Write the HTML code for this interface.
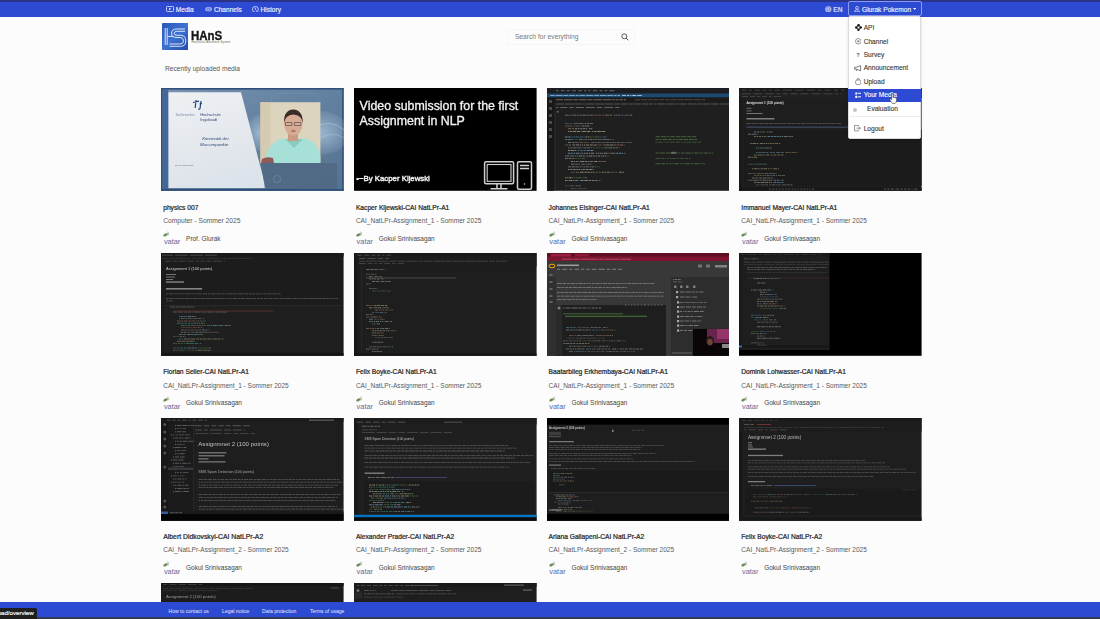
<!DOCTYPE html><html><head><meta charset="utf-8"><title>HAnS</title><style>
*{box-sizing:border-box;margin:0;padding:0}
html,body{width:1100px;height:619px;overflow:hidden;background:#fcfcfd;font-family:"Liberation Sans",sans-serif}
.a{position:absolute}
svg{display:block}
.ths{filter:blur(0.3px)}
#topline{left:0;top:0;width:1100px;height:2px;background:#2b3486}
#nav{left:0;top:2px;width:1100px;height:14.5px;background:#2c4ad2}
.navt{color:#eef1ff;font-size:6.6px;line-height:1;white-space:nowrap;-webkit-text-stroke:0.15px #eef1ff}
.card{position:absolute;width:183px;height:160px}
.th{position:absolute;left:0;top:0;width:182.6px;height:102.8px;overflow:hidden}
.t1{position:absolute;left:1.9px;top:116.4px;font-size:6.68px;line-height:1;color:#262626;-webkit-text-stroke:0.22px #262626;white-space:nowrap}
.t2{position:absolute;left:1.9px;top:129.5px;font-size:6.55px;line-height:1;color:#5a5a5a;white-space:nowrap}
.t3{position:absolute;left:24.8px;top:147.3px;font-size:6.45px;line-height:1;color:#444;white-space:nowrap}
.av{position:absolute;left:2px;top:142.7px;width:7px;height:6px}
.avt{position:absolute;left:2.6px;top:149.8px;font-size:7.4px;line-height:1;color:#5d6c9e;white-space:nowrap}
#foot{left:0;top:601.5px;width:1100px;height:15.5px;background:#2c4ad2}
#footline{left:0;top:617px;width:1100px;height:2px;background:#343a55}
.ft{color:#e8ecff;font-size:5.05px;line-height:1;white-space:nowrap;top:608.5px}
#status{left:0;top:607.8px;width:36.5px;height:11.2px;background:#1f1f1f;border-top-right-radius:1.5px}
#menu{left:847.8px;top:16px;width:73.6px;height:122.8px;background:#fff;border:0.6px solid #dcdcdc;border-radius:2px;box-shadow:0 1px 3px rgba(0,0,0,0.12)}
.mi{position:absolute;font-size:6.6px;line-height:1;color:#333;white-space:nowrap;-webkit-text-stroke:0.12px currentColor}
</style></head><body>
<div id="topline" class="a"></div><div id="nav" class="a"></div>
<svg class="a" style="left:166.3px;top:6px" width="8" height="6" viewBox="0 0 8 6"><rect x="0.45" y="0.45" width="7.1" height="5.1" rx="1" fill="none" stroke="#eef1ff" stroke-width="0.8"/><path d="M3 1.7 L5.3 3 L3 4.3 Z" fill="#eef1ff"/></svg>
<div class="a navt" style="left:175.8px;top:6.6px">Media</div>
<svg class="a" style="left:204.8px;top:5.9px" width="7.2" height="6.4" viewBox="0 0 7.2 6.4"><g fill="none" stroke="#eef1ff" stroke-width="0.7"><path d="M1.5 1.2 A3.1 3.1 0 0 0 1.5 5.2"/><path d="M5.7 1.2 A3.1 3.1 0 0 1 5.7 5.2"/><ellipse cx="3.6" cy="3.2" rx="1.7" ry="1.9"/></g><circle cx="3.6" cy="3.2" r="0.6" fill="#eef1ff"/></svg>
<div class="a navt" style="left:213.9px;top:6.6px">Channels</div>
<svg class="a" style="left:251.8px;top:5.6px" width="6.8" height="6.8" viewBox="0 0 6.8 6.8"><circle cx="3.4" cy="3.4" r="2.95" fill="none" stroke="#eef1ff" stroke-width="0.75"/><path d="M3.4 1.6 L3.4 3.6 L4.7 4.6" fill="none" stroke="#eef1ff" stroke-width="0.75"/></svg>
<div class="a navt" style="left:260.5px;top:6.6px">History</div>
<svg class="a" style="left:825px;top:5.8px" width="6.6" height="6.6" viewBox="0 0 6.6 6.6"><circle cx="3.3" cy="3.3" r="3.1" fill="#c9d2f5"/><g fill="none" stroke="#4a64d8" stroke-width="0.4"><ellipse cx="3.3" cy="3.3" rx="1.3" ry="3"/><path d="M0.3 3.3 H6.3 M0.8 1.8 H5.8 M0.8 4.8 H5.8"/></g></svg>
<div class="a navt" style="left:833.3px;top:6.6px">EN</div>
<div class="a" style="left:847.5px;top:1.2px;width:74px;height:14.9px;border:0.8px solid #8a9cf0;border-radius:2px"></div>
<svg class="a" style="left:853.5px;top:5.8px" width="6" height="6.2" viewBox="0 0 6 6.2"><circle cx="3" cy="1.8" r="1.4" fill="none" stroke="#eef1ff" stroke-width="0.7"/><path d="M0.5 5.9 Q0.8 3.7 3 3.7 Q5.2 3.7 5.5 5.9 Z" fill="none" stroke="#eef1ff" stroke-width="0.7"/></svg>
<div class="a navt" style="left:862px;top:6.6px">Glurak Pokemon</div>
<svg class="a" style="left:913.2px;top:8.4px" width="3.2" height="2" viewBox="0 0 3.2 2"><path d="M0 0 L3.2 0 L1.6 2 Z" fill="#eef1ff"/></svg>
<svg class="a" style="left:161.6px;top:23.3px" width="26.8" height="27" viewBox="0 0 26.8 27"><defs><linearGradient id="lg" x1="0" y1="0" x2="1" y2="1"><stop offset="0" stop-color="#2a56b8"/><stop offset="0.5" stop-color="#3e72d0"/><stop offset="1" stop-color="#2548a8"/></linearGradient></defs><rect x="0" y="0" width="26.8" height="27" rx="1" fill="url(#lg)"/><g fill="none" stroke="#e8f2ff" stroke-width="0.9"><path d="M3.2 5 V22 M5.2 5 V22"/><path d="M5.2 13.5 H11"/><path d="M23 6 H15 Q9.5 6 9.5 10.3 Q9.5 14.5 15 14.5 H18 Q21.5 14.5 21.5 18 Q21.5 21 18 21 H7.5"/><path d="M23 8.3 H15.5 Q12 8.3 12 10.3 Q12 12.3 15.5 12.3 H18.5 Q23.8 12.3 23.8 18 Q23.8 23.3 18.5 23.3 H7.5"/></g></svg>
<div class="a" style="left:191.2px;top:28.5px;font-size:13.2px;line-height:1;font-weight:bold;color:#141414;-webkit-text-stroke:0.35px #141414;transform:scaleX(0.87);transform-origin:0 0">HAnS</div>
<div class="a" style="left:191.6px;top:42.2px;font-size:2.75px;line-height:1;color:#666;white-space:nowrap;letter-spacing:0.12px">Hochschul-Assistenz-System</div>
<div class="a" style="left:507px;top:29px;width:128px;height:16px;border:0.5px solid #f6f6f6;border-radius:2px"></div>
<div class="a" style="left:514.9px;top:33.8px;font-size:6.7px;line-height:1;color:#7a7a7a;white-space:nowrap">Search for everything</div>
<svg class="a" style="left:620.5px;top:33.4px" width="8" height="8" viewBox="0 0 8 8"><circle cx="3.3" cy="3.3" r="2.5" fill="none" stroke="#333" stroke-width="0.8"/><path d="M5.1 5.1 L7.3 7.3" stroke="#333" stroke-width="0.9"/></svg>
<div class="a" style="left:164.9px;top:65.5px;font-size:6.66px;line-height:1;color:#575757;white-space:nowrap">Recently uploaded media</div>
<div class="card" style="left:161.3px;top:88.25px"><div class="th"><svg class="ths" width="182.6" height="102.8" viewBox="0 0 182.6 102.8" preserveAspectRatio="none"><rect x="0.00" y="0.00" width="182.60" height="102.80" fill="#58789c"/><defs><linearGradient id="g1" x1="0" y1="0" x2="1" y2="1"><stop offset="0" stop-color="#7792b0"/><stop offset="0.5" stop-color="#62809f"/><stop offset="1" stop-color="#557391"/></linearGradient><linearGradient id="g2" x1="0" y1="0" x2="0.3" y2="1"><stop offset="0" stop-color="#eef0f3"/><stop offset="1" stop-color="#dde3ea"/></linearGradient><radialGradient id="g3" cx="0.5" cy="0.5" r="0.6"><stop offset="0" stop-color="#a9c3db" stop-opacity="0.8"/><stop offset="1" stop-color="#a9c3db" stop-opacity="0"/></radialGradient></defs><rect x="0.00" y="0.00" width="182.60" height="102.80" fill="url(#g1)"/><rect x="0.00" y="0.00" width="182.60" height="1.60" fill="#2f4f7a"/><rect x="0.00" y="0.00" width="1.60" height="102.80" fill="#2f4f7a"/><rect x="181.00" y="0.00" width="1.60" height="102.80" fill="#35577f"/><rect x="0.00" y="101.00" width="182.60" height="1.80" fill="#2f4f7a"/><rect x="1.60" y="1.60" width="5.40" height="99.40" fill="#44679a"/><ellipse cx="160" cy="45" rx="28" ry="22" fill="url(#g3)"/><ellipse cx="98" cy="45" rx="12" ry="18" fill="url(#g3)"/><path d="M150 40 Q170 30 183 42" stroke="#d7e6f3" stroke-width="0.6" fill="none" opacity="0.6"/><path d="M155 52 Q172 42 183 50" stroke="#d7e6f3" stroke-width="0.5" fill="none" opacity="0.5"/><polygon points="7.5,4.2 80,4.2 105,100 7.5,100" fill="url(#g2)"/><path d="M32 14.5 L38 13.2 M35 12 L34.2 20 M38.5 16 L41 15.5 M40 13 L39 20.5 Q38.5 21.5 37.2 21" stroke="#1f3f78" stroke-width="1.2" fill="none"/><g font-family="Liberation Sans" transform="scale(0.1)"><text x="140" y="284" font-size="42" fill="#8192ab" letter-spacing="-1.5">Technische</text><text x="392" y="284" font-size="42" fill="#3a5078" letter-spacing="-1.5">Hochschule</text><text x="392" y="326" font-size="42" fill="#3a5078" letter-spacing="-1.5">Ingolstadt</text><text x="412" y="518" font-size="44" font-style="italic" fill="#2b4573">Kinematik der</text><text x="390" y="582" font-size="44" font-style="italic" fill="#2b4573">Massenpunkte</text><text x="140" y="780" font-size="18" fill="#55657d">Prof. Dr. Thomas Hang</text></g><polygon points="100,75 176,75 176,101 104,101" fill="#506984" opacity="0.9"/><circle cx="116" cy="91" r="3.5" fill="none" stroke="#8aa2bb" stroke-width="0.8" opacity="0.5"/><path d="M110 14 Q110 5 120 5 L150 5 Q158 5 158 14" fill="none" stroke="#8fa7c0" stroke-width="0.5" opacity="0.5"/><rect x="99.40" y="14.20" width="60.00" height="60.80" fill="#ddd4bd"/><rect x="99.40" y="14.20" width="10.00" height="60.80" fill="#d3c8ae" opacity="0.80"/><path d="M104 75 Q105 57 119 51 L146 50.5 Q157 55 159.4 68 L159.4 75 Z" fill="#a6e0d6"/><path d="M124 51 L133 60 L142 51 Z" fill="#8cc9be"/><path d="M100 75 L101 71 Q106 68 112 70 L113 75 Z" fill="#8a3a38" opacity="0.8"/><rect x="127" y="44" width="10" height="9" fill="#c99b83"/><ellipse cx="132.3" cy="36" rx="9.3" ry="11.5" fill="#d8ab94"/><path d="M123 35 Q122.5 22 132.3 21.5 Q142 22 141.8 35 Q141 27 132.3 26.5 Q124 27 123 35 Z" fill="#3a2c28"/><path d="M124.5 34.5 h6.5 v3 h-6.5 z M133.5 34.5 h6.5 v3 h-6.5 z" fill="none" stroke="#4a4040" stroke-width="0.6"/><ellipse cx="132.3" cy="43" rx="2.5" ry="1.2" fill="#9b6a60" opacity="0.7"/></svg></div><div class="t1">physics 007</div><div class="t2" style="font-size:6.7px">Computer - Sommer 2025</div><svg class="av" viewBox="0 0 7 6" width="7" height="6"><path d="M4.2 0.3 L6.3 1.6 L5.8 2.6 L6.4 3.2 L5 5 L4.2 4.2 Z" fill="#b9b9b9" opacity="0.75"/><ellipse cx="2.5" cy="3.9" rx="2.3" ry="1.2" transform="rotate(-28 2.5 3.9)" fill="#55803a" opacity="0.9"/></svg><div class="avt">vatar</div><div class="t3">Prof. Glurak</div></div>
<div class="card" style="left:354.0px;top:88.25px"><div class="th"><svg class="ths" width="182.6" height="102.8" viewBox="0 0 182.6 102.8" preserveAspectRatio="none"><rect x="0.00" y="0.00" width="182.60" height="102.80" fill="#000000"/><g font-family="Liberation Sans" fill="#f2f2f2" stroke="#f2f2f2" stroke-width="0.35"><text x="5.6" y="22.5" font-size="13.4" transform="translate(5.6 0) scale(0.925 1) translate(-5.6 0)">Video submission for the first</text><text x="5.6" y="36.6" font-size="13.4" transform="translate(5.6 0) scale(0.925 1) translate(-5.6 0)">Assignment in NLP</text><text x="2.3" y="93.2" font-size="8.1" stroke-width="0.4" transform="translate(2.3 0) scale(0.965 1) translate(-2.3 0)">•~By Kacper Kijewski</text></g><g fill="none" stroke="#cfcfcf" stroke-width="1.5"><rect x="130.6" y="73.8" width="29" height="22" rx="1.5"/><rect x="133.2" y="76.5" width="23.8" height="16.8" stroke-width="1.1"/><path d="M143 96 L143 100 M147 96 L147 100 M136.5 100.8 L153.5 100.8"/><rect x="163.5" y="73.8" width="14" height="27.5" rx="1.5"/><path d="M166 77.5 L175 77.5 M166 80.5 L175 80.5"/></g><circle cx="170.5" cy="96" r="0.8" fill="#c8c8c8"/></svg></div><div class="t1">Kacper Kijewski-CAI NatLPr-A1</div><div class="t2">CAI_NatLPr-Assignment_1 - Sommer 2025</div><svg class="av" viewBox="0 0 7 6" width="7" height="6"><path d="M4.2 0.3 L6.3 1.6 L5.8 2.6 L6.4 3.2 L5 5 L4.2 4.2 Z" fill="#b9b9b9" opacity="0.75"/><ellipse cx="2.5" cy="3.9" rx="2.3" ry="1.2" transform="rotate(-28 2.5 3.9)" fill="#55803a" opacity="0.9"/></svg><div class="avt">vatar</div><div class="t3">Gokul Srinivasagan</div></div>
<div class="card" style="left:546.7px;top:88.25px"><div class="th"><svg class="ths" width="182.6" height="102.8" viewBox="0 0 182.6 102.8" preserveAspectRatio="none"><rect x="0.00" y="0.00" width="182.60" height="102.80" fill="#1f1f1f"/><rect x="0.00" y="0.00" width="182.60" height="5.50" fill="#1b1d21"/><path d="M9 2.2h2.7v1h-2.7zM13.9 2.2h3.6v1h-3.6zM19.7 2.2h3.1v1h-3.1zM25.1 2.2h3.8v1h-3.8zM31.1 2.2h3.9v1h-3.9zM37.1 2.2h2.2v1h-2.2zM41.5 2.2h2v1h-2zM45.8 2.2h4.5v1h-4.5zM52.5 2.2h2.8v1h-2.8zM57.5 2.2h2.7v1h-2.7zM62.4 2.2h5v1h-5z" fill="#cccccc" opacity="0.45"/><rect x="0.00" y="5.50" width="182.60" height="4.00" fill="#1d4a73"/><path d="M3 7h4.8v1h-4.8zM8.6 7h7v1h-7zM16.4 7h4.9v1h-4.9zM22.1 7h5.8v1h-5.8zM28.7 7h2.9v1h-2.9zM32.4 7h5.8v1h-5.8zM39 7h7.2v1h-7.2zM47.1 7h5.1v1h-5.1zM53 7h6.4v1h-6.4zM60.2 7h6v1h-6zM67.1 7h2.4v1h-2.4zM70.3 7h2.7v1h-2.7z" fill="#e8f0ff" opacity="0.50"/><path d="M75 7h4v1h-4zM79.9 7h2.5v1h-2.5zM83.3 7h1.2v1h-1.2zM85.3 7h1.7v1h-1.7z" fill="#ffffff" opacity="0.60"/><path d="M86 7h3.4v1h-3.4zM90.3 7h4.6v1h-4.6z" fill="#ffffff" opacity="0.60"/><rect x="0.00" y="9.50" width="7.00" height="93.30" fill="#181818"/><rect x="2.00" y="12.00" width="3.00" height="3.00" fill="#8a8a8a" opacity="0.45"/><rect x="2.00" y="19.00" width="3.00" height="3.00" fill="#8a8a8a" opacity="0.45"/><rect x="2.00" y="26.00" width="3.00" height="3.00" fill="#8a8a8a" opacity="0.45"/><rect x="2.00" y="33.00" width="3.00" height="3.00" fill="#8a8a8a" opacity="0.45"/><rect x="2.00" y="40.00" width="3.00" height="3.00" fill="#8a8a8a" opacity="0.45"/><rect x="2.00" y="47.00" width="3.00" height="3.00" fill="#8a8a8a" opacity="0.45"/><rect x="7.00" y="9.50" width="175.60" height="4.30" fill="#1b1b1b"/><path d="M9 11.3h7v1h-7zM16.9 11.3h8.4v1h-8.4zM26.2 11.3h4.8v1h-4.8zM31.9 11.3h7.6v1h-7.6zM40.4 11.3h5.1v1h-5.1zM46.4 11.3h8.5v1h-8.5zM55.9 11.3h8.2v1h-8.2zM64.9 11.3h2.7v1h-2.7zM68.5 11.3h3v1h-3zM72.4 11.3h3.5v1h-3.5zM76.8 11.3h2.2v1h-2.2z" fill="#d0d0d0" opacity="0.45"/><path d="M88 11.3h5.1v1h-5.1zM94 11.3h6.4v1h-6.4zM101.2 11.3h4.1v1h-4.1zM106.2 11.3h5.6v1h-5.6zM112.7 11.3h4.7v1h-4.7zM118.3 11.3h4.5v1h-4.5zM123.7 11.3h6.1v1h-6.1zM130.7 11.3h6.1v1h-6.1zM137.6 11.3h8.3v1h-8.3zM146.9 11.3h6.8v1h-6.8zM154.5 11.3h3.5v1h-3.5z" fill="#a0a0a0" opacity="0.35"/><path d="M9 15.6h8v0.9h-8zM17.9 15.6h8.9v0.9h-8.9zM27.7 15.6h6.7v0.9h-6.7zM35.3 15.6h3.1v0.9h-3.1zM39.4 15.6h8v0.9h-8zM48.3 15.6h8.8v0.9h-8.8zM57.9 15.6h8.3v0.9h-8.3zM67.2 15.6h6v0.9h-6zM74.1 15.6h7v0.9h-7zM82 15.6h3.5v0.9h-3.5zM86.3 15.6h7.8v0.9h-7.8zM95.1 15.6h6v0.9h-6zM102 15.6h4v0.9h-4zM106.9 15.6h2.4v0.9h-2.4zM110.2 15.6h8v0.9h-8zM119.1 15.6h8.9v0.9h-8.9zM128.9 15.6h2.6v0.9h-2.6zM132.4 15.6h7.6v0.9h-7.6zM140.9 15.6h4.9v0.9h-4.9zM146.7 15.6h3.1v0.9h-3.1zM150.7 15.6h4.1v0.9h-4.1zM155.6 15.6h7.4v0.9h-7.4zM163.9 15.6h8.1v0.9h-8.1zM172.9 15.6h2.3v0.9h-2.3zM176.1 15.6h6.3v0.9h-6.3z" fill="#bbbbbb" opacity="0.35"/><path d="M9 19h2.3v0.9h-2.3zM13.3 19h7v0.9h-7zM22.3 19h4.3v0.9h-4.3zM28.7 19h8.2v0.9h-8.2zM38.8 19h8.9v0.9h-8.9zM49.7 19h5.5v0.9h-5.5zM57.2 19h9v0.9h-9zM68.2 19h4.2v0.9h-4.2z" fill="#cccccc" opacity="0.40"/><rect x="7.80" y="22.00" width="0.50" height="81.00" fill="#3a6a4a" opacity="0.50"/><rect x="10.00" y="23.00" width="1.60" height="1.60" fill="#bbbbbb" opacity="0.50"/><path d="M18 26.7h2.8v0.9h-2.8zM21.5 26.7h1.5v0.9h-1.5zM23.7 26.7h1.1v0.9h-1.1zM25.5 26.7h3.6v0.9h-3.6zM29.8 26.7h1.9v0.9h-1.9z" fill="#d4d4d4" opacity="0.55"/><path d="M32.5 26.7h2.1v0.9h-2.1zM35.3 26.7h3.6v0.9h-3.6zM39.6 26.7h2.2v0.9h-2.2zM42.5 26.7h3.5v0.9h-3.5z" fill="#d4d4d4" opacity="0.55"/><path d="M46.8 26.7h2.9v0.9h-2.9zM50.4 26.7h3.8v0.9h-3.8zM54.9 26.7h2.4v0.9h-2.4z" fill="#ce9178" opacity="0.55"/><path d="M58.1 26.7h3.8v0.9h-3.8zM62.6 26.7h2.3v0.9h-2.3z" fill="#dcdcaa" opacity="0.55"/><path d="M66.7 26.7h1v0.9h-1zM68.4 26.7h2.2v0.9h-2.2zM71.3 26.7h1.7v0.9h-1.7z" fill="#d4d4d4" opacity="0.55"/><path d="M73.8 26.7h2.8v0.9h-2.8z" fill="#569cd6" opacity="0.55"/><path d="M77.8 26.7h2.4v0.9h-2.4zM80.9 26.7h1.4v0.9h-1.4z" fill="#d4d4d4" opacity="0.55"/><path d="M83.1 26.7h2.1v0.9h-2.1z" fill="#d4d4d4" opacity="0.55"/><path d="M18 34.9h2.8v0.9h-2.8zM21.5 34.9h1.5v0.9h-1.5zM23.7 34.9h1.6v0.9h-1.6z" fill="#569cd6" opacity="0.55"/><path d="M26.8 34.9h1.9v0.9h-1.9zM29.4 34.9h2.1v0.9h-2.1zM32.3 34.9h3.3v0.9h-3.3zM36.3 34.9h1.1v0.9h-1.1zM38 34.9h1.1v0.9h-1.1z" fill="#d4d4d4" opacity="0.55"/><path d="M39.9 34.9h2.5v0.9h-2.5zM43.1 34.9h3v0.9h-3z" fill="#d4d4d4" opacity="0.55"/><path d="M18 37.6h1.3v0.9h-1.3zM20 37.6h2v0.9h-2zM22.7 37.6h2v0.9h-2zM25.4 37.6h0.4v0.9h-0.4z" fill="#ce9178" opacity="0.55"/><path d="M26.6 37.6h1.2v0.9h-1.2zM28.5 37.6h3.2v0.9h-3.2zM32.5 37.6h1.7v0.9h-1.7z" fill="#6a9955" opacity="0.55"/><path d="M35.2 37.6h1.7v0.9h-1.7zM37.6 37.6h1.4v0.9h-1.4zM39.6 37.6h2.6v0.9h-2.6z" fill="#d4d4d4" opacity="0.55"/><path d="M21 40.3h3.4v0.9h-3.4zM25.1 40.3h1.9v0.9h-1.9z" fill="#ce9178" opacity="0.55"/><path d="M27.9 40.3h2.6v0.9h-2.6zM31.1 40.3h1.2v0.9h-1.2z" fill="#d4d4d4" opacity="0.55"/><path d="M33.1 40.3h1.9v0.9h-1.9zM35.7 40.3h2.7v0.9h-2.7zM39.1 40.3h1.1v0.9h-1.1z" fill="#d4d4d4" opacity="0.55"/><path d="M42 40.3h3.3v0.9h-3.3z" fill="#c8c8c8" opacity="0.55"/><path d="M21 43h1.1v0.9h-1.1zM22.8 43h2.4v0.9h-2.4zM25.9 43h3.3v0.9h-3.3zM29.8 43h3.2v0.9h-3.2zM33.8 43h0.7v0.9h-0.7z" fill="#dcdcaa" opacity="0.55"/><path d="M35.3 43h3.6v0.9h-3.6zM39.5 43h3.6v0.9h-3.6zM43.8 43h0.4v0.9h-0.4z" fill="#dcdcaa" opacity="0.55"/><path d="M45 43h1.1v0.9h-1.1zM46.9 43h2.5v0.9h-2.5z" fill="#dcdcaa" opacity="0.55"/><path d="M50.2 43h3.7v0.9h-3.7zM54.5 43h3.7v0.9h-3.7z" fill="#dcdcaa" opacity="0.55"/><path d="M18 48.5h2.6v0.9h-2.6zM21.3 48.5h2.2v0.9h-2.2z" fill="#9cdcfe" opacity="0.55"/><path d="M24.4 48.5h1.3v0.9h-1.3zM26.5 48.5h1.4v0.9h-1.4zM28.5 48.5h3.9v0.9h-3.9zM33.2 48.5h2.6v0.9h-2.6zM36.5 48.5h1.3v0.9h-1.3z" fill="#569cd6" opacity="0.55"/><path d="M38.6 48.5h1.6v0.9h-1.6zM40.9 48.5h1.4v0.9h-1.4z" fill="#dcdcaa" opacity="0.55"/><path d="M43 48.5h1.7v0.9h-1.7zM45.5 48.5h1.8v0.9h-1.8zM48 48.5h3.7v0.9h-3.7zM52.3 48.5h1.4v0.9h-1.4zM54.4 48.5h0.6v0.9h-0.6z" fill="#6a9955" opacity="0.55"/><path d="M55.8 48.5h3.6v0.9h-3.6z" fill="#569cd6" opacity="0.55"/><path d="M18 51.2h2.4v0.9h-2.4zM21.1 51.2h3.3v0.9h-3.3zM25.1 51.2h1v0.9h-1z" fill="#9cdcfe" opacity="0.55"/><path d="M27.5 51.2h1.1v0.9h-1.1zM29.4 51.2h1.1v0.9h-1.1z" fill="#6a9955" opacity="0.55"/><path d="M31.9 51.2h3.6v0.9h-3.6zM36.2 51.2h1.3v0.9h-1.3zM38.1 51.2h2.1v0.9h-2.1z" fill="#9cdcfe" opacity="0.55"/><path d="M41 51.2h1.2v0.9h-1.2zM42.9 51.2h2.2v0.9h-2.2zM45.8 51.2h1.7v0.9h-1.7z" fill="#d4d4d4" opacity="0.55"/><path d="M48.3 51.2h1.6v0.9h-1.6zM50.6 51.2h2v0.9h-2zM53.3 51.2h1.4v0.9h-1.4z" fill="#d4d4d4" opacity="0.55"/><path d="M55.5 51.2h3.4v0.9h-3.4zM59.5 51.2h2.7v0.9h-2.7zM62.9 51.2h1.1v0.9h-1.1z" fill="#d4d4d4" opacity="0.55"/><path d="M65.4 51.2h1.3v0.9h-1.3z" fill="#b0b0b0" opacity="0.55"/><path d="M21 53.9h3.3v0.9h-3.3z" fill="#c8c8c8" opacity="0.55"/><path d="M25.4 53.9h2.4v0.9h-2.4zM28.5 53.9h1.7v0.9h-1.7zM30.9 53.9h0.9v0.9h-0.9z" fill="#d4d4d4" opacity="0.55"/><path d="M32.6 53.9h3.4v0.9h-3.4zM36.8 53.9h1.7v0.9h-1.7zM39.1 53.9h1.4v0.9h-1.4zM41.2 53.9h1.1v0.9h-1.1z" fill="#ce9178" opacity="0.55"/><path d="M44.1 53.9h3.4v0.9h-3.4zM48.2 53.9h1.8v0.9h-1.8zM50.7 53.9h2.4v0.9h-2.4zM53.7 53.9h1.4v0.9h-1.4zM55.8 53.9h1.9v0.9h-1.9z" fill="#b0b0b0" opacity="0.55"/><path d="M58.6 53.9h3.4v0.9h-3.4zM62.6 53.9h3v0.9h-3zM66.3 53.9h2.5v0.9h-2.5z" fill="#b0b0b0" opacity="0.55"/><path d="M69.6 53.9h3.4v0.9h-3.4zM73.8 53.9h3.1v0.9h-3.1zM77.6 53.9h1.2v0.9h-1.2z" fill="#ce9178" opacity="0.55"/><path d="M79.6 53.9h1.1v0.9h-1.1zM81.5 53.9h1.3v0.9h-1.3zM83.4 53.9h1.2v0.9h-1.2z" fill="#d4d4d4" opacity="0.55"/><path d="M18 56.6h1.1v0.9h-1.1zM19.8 56.6h1.3v0.9h-1.3zM21.8 56.6h2.4v0.9h-2.4z" fill="#ce9178" opacity="0.55"/><path d="M25.6 56.6h2.7v0.9h-2.7zM29 56.6h3.4v0.9h-3.4zM33.1 56.6h1.1v0.9h-1.1zM34.9 56.6h1.3v0.9h-1.3z" fill="#d4d4d4" opacity="0.55"/><path d="M37 56.6h1.3v0.9h-1.3zM39 56.6h3.2v0.9h-3.2zM43 56.6h2.7v0.9h-2.7z" fill="#dcdcaa" opacity="0.55"/><path d="M46.4 56.6h3.6v0.9h-3.6z" fill="#d4d4d4" opacity="0.55"/><path d="M50.9 56.6h1.7v0.9h-1.7zM53.3 56.6h1.5v0.9h-1.5z" fill="#ce9178" opacity="0.55"/><path d="M56.7 56.6h1.8v0.9h-1.8zM59.2 56.6h2.8v0.9h-2.8zM62.7 56.6h3.8v0.9h-3.8z" fill="#d4d4d4" opacity="0.55"/><path d="M67.3 56.6h2.1v0.9h-2.1zM70.1 56.6h1.7v0.9h-1.7zM72.5 56.6h3.8v0.9h-3.8z" fill="#ce9178" opacity="0.55"/><path d="M77.2 56.6h0.7v0.9h-0.7z" fill="#6a9955" opacity="0.55"/><path d="M21 59.4h1.5v0.9h-1.5zM23.2 59.4h2.2v0.9h-2.2zM26.1 59.4h3.6v0.9h-3.6z" fill="#c8c8c8" opacity="0.55"/><path d="M30.5 59.4h3.2v0.9h-3.2zM34.4 59.4h0.8v0.9h-0.8z" fill="#c8c8c8" opacity="0.55"/><path d="M36.1 59.4h2.8v0.9h-2.8zM39.5 59.4h3.6v0.9h-3.6zM43.8 59.4h1v0.9h-1z" fill="#c8c8c8" opacity="0.55"/><path d="M45.6 59.4h2.8v0.9h-2.8zM49 59.4h1.9v0.9h-1.9zM51.7 59.4h1.7v0.9h-1.7zM54.1 59.4h2.8v0.9h-2.8z" fill="#6a9955" opacity="0.55"/><path d="M57.6 59.4h3v0.9h-3zM61.4 59.4h3.6v0.9h-3.6zM65.6 59.4h2.8v0.9h-2.8zM69.1 59.4h2v0.9h-2z" fill="#d4d4d4" opacity="0.55"/><path d="M71.9 59.4h0.8v0.9h-0.8z" fill="#dcdcaa" opacity="0.55"/><path d="M21 62.1h2v0.9h-2zM23.7 62.1h3.3v0.9h-3.3zM27.7 62.1h1.4v0.9h-1.4zM29.8 62.1h0.4v0.9h-0.4z" fill="#dcdcaa" opacity="0.55"/><path d="M31.1 62.1h1.6v0.9h-1.6zM33.4 62.1h2.7v0.9h-2.7zM36.8 62.1h2.5v0.9h-2.5z" fill="#569cd6" opacity="0.55"/><path d="M40.1 62.1h2.4v0.9h-2.4zM43.3 62.1h2.9v0.9h-2.9z" fill="#9cdcfe" opacity="0.55"/><path d="M21 64.8h2.4v0.9h-2.4zM24.1 64.8h1.7v0.9h-1.7zM26.5 64.8h1.7v0.9h-1.7zM28.9 64.8h3.2v0.9h-3.2zM32.7 64.8h1v0.9h-1z" fill="#9cdcfe" opacity="0.55"/><path d="M34.5 64.8h1.7v0.9h-1.7zM36.9 64.8h1.6v0.9h-1.6zM39.2 64.8h1.8v0.9h-1.8zM41.7 64.8h1.6v0.9h-1.6zM43.9 64.8h3.1v0.9h-3.1z" fill="#d4d4d4" opacity="0.55"/><path d="M48.8 64.8h1.5v0.9h-1.5zM51.1 64.8h1.1v0.9h-1.1zM52.9 64.8h1.5v0.9h-1.5zM55.1 64.8h1.3v0.9h-1.3zM57.1 64.8h3.4v0.9h-3.4zM61.2 64.8h0.5v0.9h-0.5z" fill="#d4d4d4" opacity="0.55"/><path d="M62.5 64.8h1.1v0.9h-1.1zM64.4 64.8h2.4v0.9h-2.4zM67.4 64.8h1v0.9h-1z" fill="#d4d4d4" opacity="0.55"/><path d="M69.2 64.8h2v0.9h-2zM72 64.8h2.3v0.9h-2.3zM75 64.8h1v0.9h-1z" fill="#9cdcfe" opacity="0.55"/><path d="M76.8 64.8h2.1v0.9h-2.1z" fill="#569cd6" opacity="0.55"/><path d="M18 67.5h1.2v0.9h-1.2zM19.9 67.5h2.3v0.9h-2.3z" fill="#d4d4d4" opacity="0.55"/><path d="M23.1 67.5h3.7v0.9h-3.7zM27.5 67.5h1.3v0.9h-1.3zM29.5 67.5h1.4v0.9h-1.4z" fill="#b0b0b0" opacity="0.55"/><path d="M31.7 67.5h3.3v0.9h-3.3zM35.7 67.5h1.9v0.9h-1.9zM38.3 67.5h0.6v0.9h-0.6z" fill="#d4d4d4" opacity="0.55"/><path d="M39.7 67.5h1.3v0.9h-1.3zM41.7 67.5h3.8v0.9h-3.8zM46.2 67.5h2v0.9h-2zM48.9 67.5h0.9v0.9h-0.9z" fill="#d4d4d4" opacity="0.55"/><path d="M50.6 67.5h2.5v0.9h-2.5zM53.9 67.5h1.2v0.9h-1.2zM55.7 67.5h1.9v0.9h-1.9zM58.3 67.5h1.1v0.9h-1.1z" fill="#c8c8c8" opacity="0.55"/><path d="M60.2 67.5h1.5v0.9h-1.5z" fill="#6a9955" opacity="0.55"/><path d="M18 70.2h2.9v0.9h-2.9zM21.6 70.2h2.9v0.9h-2.9zM25.3 70.2h1.9v0.9h-1.9z" fill="#d4d4d4" opacity="0.55"/><path d="M28 70.2h2.4v0.9h-2.4zM31 70.2h1.9v0.9h-1.9zM33.7 70.2h0.6v0.9h-0.6z" fill="#6a9955" opacity="0.55"/><path d="M35.1 70.2h3v0.9h-3z" fill="#6a9955" opacity="0.55"/><path d="M24 73h2.2v0.9h-2.2zM26.9 73h1.2v0.9h-1.2z" fill="#d4d4d4" opacity="0.55"/><path d="M28.9 73h1.8v0.9h-1.8zM31.4 73h0.9v0.9h-0.9z" fill="#b0b0b0" opacity="0.55"/><path d="M33.2 73h3.8v0.9h-3.8zM37.7 73h2.3v0.9h-2.3zM40.7 73h1.1v0.9h-1.1z" fill="#d4d4d4" opacity="0.55"/><path d="M42.6 73h3.5v0.9h-3.5z" fill="#c8c8c8" opacity="0.55"/><path d="M47.2 73h2.8v0.9h-2.8zM50.7 73h0.8v0.9h-0.8z" fill="#d4d4d4" opacity="0.55"/><path d="M52.2 73h1.6v0.9h-1.6zM54.5 73h1.6v0.9h-1.6zM56.7 73h2.2v0.9h-2.2z" fill="#ce9178" opacity="0.55"/><path d="M24 75.7h3.4v0.9h-3.4zM28.1 75.7h2.6v0.9h-2.6zM31.4 75.7h1.5v0.9h-1.5z" fill="#d4d4d4" opacity="0.55"/><path d="M34.5 75.7h3.3v0.9h-3.3zM38.5 75.7h1.1v0.9h-1.1zM40.3 75.7h3.4v0.9h-3.4zM44.4 75.7h0.8v0.9h-0.8z" fill="#d4d4d4" opacity="0.55"/><path d="M21 78.4h2.9v0.9h-2.9zM24.6 78.4h3.9v0.9h-3.9zM29.2 78.4h3.1v0.9h-3.1zM33 78.4h1v0.9h-1z" fill="#d4d4d4" opacity="0.55"/><path d="M34.8 78.4h1.1v0.9h-1.1zM36.6 78.4h1.6v0.9h-1.6zM38.8 78.4h2.9v0.9h-2.9zM42.4 78.4h1.3v0.9h-1.3zM44.5 78.4h2.8v0.9h-2.8z" fill="#c8c8c8" opacity="0.55"/><path d="M48 78.4h2.6v0.9h-2.6zM51.3 78.4h1.4v0.9h-1.4z" fill="#6a9955" opacity="0.55"/><path d="M21 81.1h1.3v0.9h-1.3zM23 81.1h1.8v0.9h-1.8zM25.6 81.1h3v0.9h-3zM29.3 81.1h1.5v0.9h-1.5zM31.4 81.1h1.5v0.9h-1.5z" fill="#c8c8c8" opacity="0.55"/><path d="M33.7 81.1h1.1v0.9h-1.1zM35.5 81.1h2.2v0.9h-2.2z" fill="#9cdcfe" opacity="0.55"/><path d="M38.5 81.1h2.6v0.9h-2.6zM41.8 81.1h3.8v0.9h-3.8zM46.3 81.1h0.5v0.9h-0.5z" fill="#c8c8c8" opacity="0.55"/><path d="M24 83.8h3.3v0.9h-3.3z" fill="#569cd6" opacity="0.55"/><path d="M28.7 83.8h3.2v0.9h-3.2z" fill="#ce9178" opacity="0.55"/><path d="M32.9 83.8h3.8v0.9h-3.8zM37.4 83.8h2.3v0.9h-2.3z" fill="#dcdcaa" opacity="0.55"/><path d="M40.4 83.8h2.5v0.9h-2.5zM43.6 83.8h1.3v0.9h-1.3zM45.6 83.8h1.1v0.9h-1.1zM47.4 83.8h0.8v0.9h-0.8z" fill="#dcdcaa" opacity="0.55"/><path d="M49 83.8h2.2v0.9h-2.2zM51.9 83.8h2.3v0.9h-2.3z" fill="#6a9955" opacity="0.55"/><path d="M55 83.8h1.6v0.9h-1.6zM57.4 83.8h1.4v0.9h-1.4z" fill="#d4d4d4" opacity="0.55"/><path d="M59.6 83.8h3.3v0.9h-3.3z" fill="#c8c8c8" opacity="0.55"/><path d="M63.7 83.8h2.4v0.9h-2.4zM66.7 83.8h1.1v0.9h-1.1zM68.5 83.8h1.8v0.9h-1.8z" fill="#6a9955" opacity="0.55"/><path d="M71.9 83.8h2.8v0.9h-2.8zM75.4 83.8h1.5v0.9h-1.5z" fill="#d4d4d4" opacity="0.55"/><path d="M18 89.3h1.5v0.9h-1.5zM20.2 89.3h1.1v0.9h-1.1zM21.9 89.3h2.8v0.9h-2.8zM25.4 89.3h0.7v0.9h-0.7z" fill="#dcdcaa" opacity="0.55"/><path d="M26.9 89.3h1.3v0.9h-1.3zM28.9 89.3h1.5v0.9h-1.5zM31.1 89.3h2.5v0.9h-2.5zM34.3 89.3h1.2v0.9h-1.2zM36.1 89.3h0.7v0.9h-0.7z" fill="#6a9955" opacity="0.55"/><path d="M37.7 89.3h1.1v0.9h-1.1zM39.5 89.3h0.6v0.9h-0.6z" fill="#d4d4d4" opacity="0.55"/><path d="M18 92h1.7v0.9h-1.7zM20.4 92h0.9v0.9h-0.9z" fill="#dcdcaa" opacity="0.55"/><path d="M22.1 92h2.9v0.9h-2.9zM25.7 92h1.5v0.9h-1.5z" fill="#d4d4d4" opacity="0.55"/><path d="M28 92h3.4v0.9h-3.4z" fill="#9cdcfe" opacity="0.55"/><path d="M33.2 92h3.4v0.9h-3.4zM37.2 92h3.9v0.9h-3.9zM41.8 92h2.5v0.9h-2.5zM45 92h2v0.9h-2z" fill="#c8c8c8" opacity="0.55"/><path d="M47.7 92h2.9v0.9h-2.9z" fill="#d4d4d4" opacity="0.55"/><path d="M51.9 92h1.2v0.9h-1.2zM53.7 92h0.5v0.9h-0.5z" fill="#ce9178" opacity="0.55"/><path d="M18 97.4h2.5v0.9h-2.5zM21.2 97.4h0.8v0.9h-0.8z" fill="#6a9955" opacity="0.55"/><path d="M22.8 97.4h3.7v0.9h-3.7zM27.2 97.4h0.7v0.9h-0.7z" fill="#b0b0b0" opacity="0.55"/><path d="M28.7 97.4h2v0.9h-2zM31.4 97.4h2.3v0.9h-2.3z" fill="#c8c8c8" opacity="0.55"/><path d="M24 100.2h2.9v0.9h-2.9zM27.6 100.2h2.2v0.9h-2.2z" fill="#569cd6" opacity="0.55"/><path d="M31.2 100.2h3.5v0.9h-3.5zM35.4 100.2h1.3v0.9h-1.3zM37.4 100.2h2.2v0.9h-2.2z" fill="#6a9955" opacity="0.55"/><path d="M108.5 48.3h4.4v0.9h-4.4zM113.8 48.3h5.6v0.9h-5.6zM120.3 48.3h1.9v0.9h-1.9zM123.1 48.3h4.7v0.9h-4.7zM128.7 48.3h4.7v0.9h-4.7zM134.3 48.3h5.2v0.9h-5.2zM140.4 48.3h3.8v0.9h-3.8zM145 48.3h4.2v0.9h-4.2z" fill="#6a9955" opacity="0.55"/><path d="M108.5 51h3.1v0.9h-3.1zM112.5 51h2.1v0.9h-2.1zM115.5 51h4.9v0.9h-4.9zM121.3 51h3.4v0.9h-3.4zM125.6 51h2.3v0.9h-2.3zM128.9 51h1.8v0.9h-1.8zM131.6 51h4.6v0.9h-4.6zM137.1 51h4v0.9h-4zM142 51h4.6v0.9h-4.6zM147.5 51h2.6v0.9h-2.6z" fill="#6a9955" opacity="0.55"/><path d="M108.5 53.7h1.8v0.9h-1.8zM111.2 53.7h4.6v0.9h-4.6zM116.6 53.7h1.1v0.9h-1.1zM118.6 53.7h3.3v0.9h-3.3zM122.9 53.7h4.8v0.9h-4.8zM128.6 53.7h4.4v0.9h-4.4zM133.9 53.7h1.5v0.9h-1.5zM136.2 53.7h2.2v0.9h-2.2zM139.3 53.7h5.2v0.9h-5.2zM145.4 53.7h4.2v0.9h-4.2zM150.6 53.7h3.5v0.9h-3.5z" fill="#6a9955" opacity="0.55"/><path d="M108.5 64.5h3.2v0.9h-3.2zM112.6 64.5h5.5v0.9h-5.5zM119 64.5h4.7v0.9h-4.7zM124.6 64.5h2.7v0.9h-2.7zM128.2 64.5h2.9v0.9h-2.9zM131.9 64.5h1.4v0.9h-1.4zM134.2 64.5h3v0.9h-3zM138.1 64.5h5.8v0.9h-5.8zM144.8 64.5h1.5v0.9h-1.5zM147.2 64.5h3.8v0.9h-3.8zM151.9 64.5h1.6v0.9h-1.6zM154.4 64.5h1.4v0.9h-1.4zM156.7 64.5h4.2v0.9h-4.2zM161.8 64.5h2.2v0.9h-2.2zM164.9 64.5h1.2v0.9h-1.2z" fill="#6a9955" opacity="0.55"/><path d="M108.5 69.9h4.2v0.9h-4.2zM113.6 69.9h3.9v0.9h-3.9zM118.5 69.9h1.1v0.9h-1.1zM120.4 69.9h2.1v0.9h-2.1zM123.5 69.9h5.8v0.9h-5.8zM130.2 69.9h2.1v0.9h-2.1zM133.2 69.9h3.8v0.9h-3.8zM137.9 69.9h3.1v0.9h-3.1zM141.9 69.9h1.5v0.9h-1.5z" fill="#6a9955" opacity="0.55"/><path d="M108.5 75.3h4.9v0.9h-4.9zM114.3 75.3h3.7v0.9h-3.7zM118.9 75.3h1.9v0.9h-1.9zM121.8 75.3h1.9v0.9h-1.9zM124.5 75.3h1.4v0.9h-1.4zM126.8 75.3h5.1v0.9h-5.1zM132.9 75.3h1.6v0.9h-1.6zM135.3 75.3h1.1v0.9h-1.1zM137.4 75.3h5.8v0.9h-5.8zM144.1 75.3h2v0.9h-2zM147 75.3h5.5v0.9h-5.5zM153.3 75.3h1.4v0.9h-1.4zM155.7 75.3h2.2v0.9h-2.2z" fill="#6a9955" opacity="0.55"/><rect x="124.00" y="63.80" width="5.00" height="2.00" fill="#cccccc" opacity="0.35"/></svg></div><div class="t1">Johannes Elsinger-CAI NatLPr-A1</div><div class="t2">CAI_NatLPr-Assignment_1 - Sommer 2025</div><svg class="av" viewBox="0 0 7 6" width="7" height="6"><path d="M4.2 0.3 L6.3 1.6 L5.8 2.6 L6.4 3.2 L5 5 L4.2 4.2 Z" fill="#b9b9b9" opacity="0.75"/><ellipse cx="2.5" cy="3.9" rx="2.3" ry="1.2" transform="rotate(-28 2.5 3.9)" fill="#55803a" opacity="0.9"/></svg><div class="avt">vatar</div><div class="t3">Gokul Srinivasagan</div></div>
<div class="card" style="left:739.4px;top:88.25px"><div class="th"><svg class="ths" width="182.6" height="102.8" viewBox="0 0 182.6 102.8" preserveAspectRatio="none"><rect x="0.00" y="0.00" width="182.60" height="102.80" fill="#1e1e1e"/><rect x="0.00" y="0.00" width="182.60" height="4.00" fill="#1a1a1a"/><path d="M3 1.8h3.9v0.7h-3.9zM9.9 1.8h2.8v0.7h-2.8zM15.7 1.8h5.2v0.7h-5.2zM23.9 1.8h3.2v0.7h-3.2zM30.1 1.8h2.5v0.7h-2.5zM35.7 1.8h5.2v0.7h-5.2zM43.9 1.8h9.3v0.7h-9.3zM56.2 1.8h8.4v0.7h-8.4zM67.6 1.8h8.1v0.7h-8.1zM78.7 1.8h3.8v0.7h-3.8zM85.5 1.8h6.3v0.7h-6.3zM94.8 1.8h4.2v0.7h-4.2zM102 1.8h3.4v0.7h-3.4zM108.4 1.8h2.8v0.7h-2.8zM114.2 1.8h3.7v0.7h-3.7zM121 1.8h2v0.7h-2z" fill="#bbbbbb" opacity="0.35"/><rect x="0.00" y="4.00" width="182.60" height="6.00" fill="#202020"/><path d="M3 5.5h8.6v0.7h-8.6zM14.6 5.5h8.5v0.7h-8.5zM26.1 5.5h8.4v0.7h-8.4zM37.5 5.5h3.5v0.7h-3.5zM44 5.5h4.5v0.7h-4.5zM51.5 5.5h7v0.7h-7zM61.5 5.5h7.9v0.7h-7.9zM72.4 5.5h8.8v0.7h-8.8zM84.2 5.5h9v0.7h-9zM96.3 5.5h2.7v0.7h-2.7zM102 5.5h1v0.7h-1z" fill="#bbbbbb" opacity="0.30"/><path d="M3 8.2h6v0.7h-6zM11 8.2h5v0.7h-5zM18.1 8.2h3.1v0.7h-3.1zM23.1 8.2h4.8v0.7h-4.8zM30 8.2h2.5v0.7h-2.5zM34.5 8.2h7.6v0.7h-7.6z" fill="#bbbbbb" opacity="0.30"/><rect x="0.00" y="10.00" width="2.50" height="102.80" fill="#181818"/><text x="7.5" y="16" font-family="Liberation Sans" font-size="3.2" fill="#e6e6e6" opacity="0.85" stroke="#e6e6e6" stroke-width="0.1">Assignment 1 (100 points)</text><rect x="7.50" y="19.80" width="5.00" height="1.00" fill="#dddddd" opacity="0.40"/><rect x="7.50" y="22.40" width="5.00" height="1.00" fill="#dddddd" opacity="0.40"/><rect x="7.50" y="25.00" width="16.00" height="1.00" fill="#dddddd" opacity="0.45"/><rect x="7.50" y="30.00" width="28.00" height="1.50" fill="#dddddd" opacity="0.50"/><path d="M7.5 35.3h4.5v0.8h-4.5zM12.7 35.3h3.4v0.8h-3.4zM16.8 35.3h2.6v0.8h-2.6zM20.1 35.3h4.7v0.8h-4.7zM25.5 35.3h3.5v0.8h-3.5zM29.7 35.3h4.6v0.8h-4.6zM35 35.3h4.5v0.8h-4.5zM40.1 35.3h3.3v0.8h-3.3zM44.1 35.3h2.9v0.8h-2.9zM47.8 35.3h3.6v0.8h-3.6zM52.1 35.3h3v0.8h-3zM55.8 35.3h2.1v0.8h-2.1zM58.5 35.3h2.6v0.8h-2.6zM61.8 35.3h4.3v0.8h-4.3zM66.8 35.3h1.7v0.8h-1.7zM69.2 35.3h1.7v0.8h-1.7zM71.6 35.3h3.7v0.8h-3.7zM76 35.3h2.5v0.8h-2.5zM79.1 35.3h3.4v0.8h-3.4zM83.2 35.3h3.1v0.8h-3.1zM87.1 35.3h2.7v0.8h-2.7zM90.5 35.3h5v0.8h-5zM96.1 35.3h2.2v0.8h-2.2zM99 35.3h2.9v0.8h-2.9z" fill="#cccccc" opacity="0.35"/><rect x="7.50" y="38.60" width="102.00" height="1.20" fill="#8ab4ff" opacity="0.30"/><rect x="5.00" y="41.50" width="177.60" height="56.00" fill="#1b1b1b"/><path d="M15 43.5h2v0.9h-2zM17.7 43.5h2.7v0.9h-2.7zM21 43.5h0.9v0.9h-0.9z" fill="#cccccc" opacity="0.45"/><path d="M22.7 43.5h3.1v0.9h-3.1z" fill="#b5cea8" opacity="0.45"/><path d="M27.6 43.5h1.4v0.9h-1.4zM29.7 43.5h3.8v0.9h-3.8z" fill="#d7ba7d" opacity="0.45"/><path d="M9 45.8h3.2v0.9h-3.2zM12.9 45.8h3.9v0.9h-3.9zM17.5 45.8h1.1v0.9h-1.1z" fill="#9cdcfe" opacity="0.45"/><path d="M15 48.1h1.9v0.9h-1.9zM17.6 48.1h1.6v0.9h-1.6zM19.9 48.1h2.3v0.9h-2.3zM22.9 48.1h1.4v0.9h-1.4zM25 48.1h2.1v0.9h-2.1z" fill="#b5cea8" opacity="0.45"/><path d="M28.4 48.1h2.7v0.9h-2.7zM31.8 48.1h2.1v0.9h-2.1zM34.6 48.1h2.4v0.9h-2.4zM37.6 48.1h2.1v0.9h-2.1zM40.4 48.1h1.5v0.9h-1.5z" fill="#9cdcfe" opacity="0.45"/><path d="M42.7 48.1h1.3v0.9h-1.3zM44.7 48.1h3.9v0.9h-3.9zM49.4 48.1h2.3v0.9h-2.3zM52.4 48.1h1.6v0.9h-1.6z" fill="#cccccc" opacity="0.45"/><path d="M11 55h1.7v0.9h-1.7zM13.4 55h4v0.9h-4zM18.1 55h1.4v0.9h-1.4z" fill="#cccccc" opacity="0.45"/><path d="M20.8 55h3v0.9h-3zM24.5 55h1.6v0.9h-1.6zM26.8 55h1.6v0.9h-1.6zM29.1 55h0.6v0.9h-0.6z" fill="#dcdcaa" opacity="0.45"/><path d="M30.4 55h2.3v0.9h-2.3zM33.4 55h1.7v0.9h-1.7zM35.8 55h3v0.9h-3z" fill="#d7ba7d" opacity="0.45"/><path d="M39.6 55h1.6v0.9h-1.6z" fill="#dcdcaa" opacity="0.45"/><path d="M17 59.6h1.4v0.9h-1.4zM19.1 59.6h1.2v0.9h-1.2zM21 59.6h1.6v0.9h-1.6z" fill="#9cdcfe" opacity="0.45"/><path d="M23.3 59.6h2.2v0.9h-2.2zM26.3 59.6h3.7v0.9h-3.7zM30.7 59.6h1.9v0.9h-1.9z" fill="#cccccc" opacity="0.45"/><path d="M17 64.2h1.9v0.9h-1.9zM19.6 64.2h2.4v0.9h-2.4zM22.7 64.2h3.7v0.9h-3.7zM27.1 64.2h1.9v0.9h-1.9zM29.7 64.2h0.4v0.9h-0.4z" fill="#9cdcfe" opacity="0.45"/><path d="M31 64.2h2v0.9h-2zM33.7 64.2h2.2v0.9h-2.2z" fill="#9cdcfe" opacity="0.45"/><path d="M37.1 64.2h3.9v0.9h-3.9zM41.7 64.2h3v0.9h-3z" fill="#9cdcfe" opacity="0.45"/><path d="M46.4 64.2h3.3v0.9h-3.3zM50.4 64.2h1.8v0.9h-1.8zM52.9 64.2h3.6v0.9h-3.6zM57.2 64.2h1.2v0.9h-1.2z" fill="#d7ba7d" opacity="0.45"/><path d="M15 66.5h1.7v0.9h-1.7zM17.4 66.5h1v0.9h-1zM19.1 66.5h3.8v0.9h-3.8zM23.5 66.5h1v0.9h-1zM25.3 66.5h0.9v0.9h-0.9z" fill="#dcdcaa" opacity="0.45"/><path d="M27 66.5h3.6v0.9h-3.6z" fill="#dcdcaa" opacity="0.45"/><path d="M32.1 66.5h1.5v0.9h-1.5zM34.3 66.5h2.8v0.9h-2.8zM37.8 66.5h3.3v0.9h-3.3z" fill="#d7ba7d" opacity="0.45"/><path d="M41.9 66.5h2.5v0.9h-2.5z" fill="#dcdcaa" opacity="0.45"/><path d="M9 68.8h2.7v0.9h-2.7zM12.4 68.8h1.8v0.9h-1.8zM14.9 68.8h3.3v0.9h-3.3z" fill="#dcdcaa" opacity="0.45"/><path d="M9 75.7h1.3v0.9h-1.3zM11 75.7h2.6v0.9h-2.6zM14.3 75.7h1.5v0.9h-1.5z" fill="#b5cea8" opacity="0.45"/><path d="M16.6 75.7h2.2v0.9h-2.2zM19.5 75.7h3.3v0.9h-3.3zM23.5 75.7h3.6v0.9h-3.6zM27.7 75.7h0.6v0.9h-0.6z" fill="#9cdcfe" opacity="0.45"/><path d="M13 80.3h1.2v0.9h-1.2zM14.9 80.3h3.6v0.9h-3.6zM19.2 80.3h1.5v0.9h-1.5z" fill="#dcdcaa" opacity="0.45"/><path d="M21.6 80.3h2.3v0.9h-2.3zM24.5 80.3h3.4v0.9h-3.4z" fill="#dcdcaa" opacity="0.45"/><path d="M28.7 80.3h1.5v0.9h-1.5zM30.9 80.3h1.4v0.9h-1.4zM33.1 80.3h0.5v0.9h-0.5z" fill="#d7ba7d" opacity="0.45"/><path d="M34.3 80.3h3.9v0.9h-3.9zM39 80.3h1v0.9h-1z" fill="#cccccc" opacity="0.45"/><path d="M9 84.9h2.5v0.9h-2.5zM12.2 84.9h1.2v0.9h-1.2zM14.1 84.9h1.7v0.9h-1.7zM16.5 84.9h0.8v0.9h-0.8z" fill="#cccccc" opacity="0.45"/><path d="M18.2 84.9h4v0.9h-4zM22.8 84.9h2.3v0.9h-2.3z" fill="#d7ba7d" opacity="0.45"/><path d="M25.9 84.9h3.7v0.9h-3.7zM30.3 84.9h2.6v0.9h-2.6zM33.6 84.9h2.7v0.9h-2.7z" fill="#cccccc" opacity="0.45"/><path d="M37.1 84.9h0.5v0.9h-0.5z" fill="#cccccc" opacity="0.45"/><path d="M15 87.2h1.8v0.9h-1.8zM17.5 87.2h2.8v0.9h-2.8zM20.9 87.2h1.9v0.9h-1.9z" fill="#d7ba7d" opacity="0.45"/><path d="M23.7 87.2h1.2v0.9h-1.2zM25.6 87.2h1.4v0.9h-1.4zM27.7 87.2h2.7v0.9h-2.7z" fill="#dcdcaa" opacity="0.45"/><path d="M31.2 87.2h1.6v0.9h-1.6zM33.5 87.2h2.7v0.9h-2.7z" fill="#9cdcfe" opacity="0.45"/><path d="M37 87.2h1.2v0.9h-1.2zM38.9 87.2h2.9v0.9h-2.9zM42.5 87.2h3.5v0.9h-3.5z" fill="#b5cea8" opacity="0.45"/><path d="M13 89.5h2.8v0.9h-2.8zM16.5 89.5h2.6v0.9h-2.6z" fill="#b5cea8" opacity="0.45"/><path d="M20.1 89.5h3.4v0.9h-3.4zM24.2 89.5h3.4v0.9h-3.4zM28.3 89.5h3.1v0.9h-3.1z" fill="#b5cea8" opacity="0.45"/><path d="M32.2 89.5h1.6v0.9h-1.6z" fill="#cccccc" opacity="0.45"/><path d="M9 91.8h1.5v0.9h-1.5zM11.2 91.8h2.4v0.9h-2.4zM14.4 91.8h3.7v0.9h-3.7zM18.7 91.8h1.7v0.9h-1.7zM21.1 91.8h1.6v0.9h-1.6z" fill="#b5cea8" opacity="0.45"/><path d="M23.5 91.8h3.6v0.9h-3.6zM27.8 91.8h1.7v0.9h-1.7zM30.2 91.8h2.5v0.9h-2.5z" fill="#dcdcaa" opacity="0.45"/><path d="M34.5 91.8h2.6v0.9h-2.6zM37.8 91.8h2.6v0.9h-2.6zM41.1 91.8h0.4v0.9h-0.4z" fill="#9cdcfe" opacity="0.45"/><path d="M42.4 91.8h2.2v0.9h-2.2z" fill="#cccccc" opacity="0.45"/><path d="M15 94.1h2.4v0.9h-2.4zM18.1 94.1h2.7v0.9h-2.7z" fill="#cccccc" opacity="0.45"/><path d="M21.6 94.1h3.9v0.9h-3.9zM26.1 94.1h2.9v0.9h-2.9zM29.7 94.1h1.5v0.9h-1.5zM31.9 94.1h1.2v0.9h-1.2z" fill="#dcdcaa" opacity="0.45"/><path d="M34.5 94.1h2.8v0.9h-2.8zM38 94.1h1.9v0.9h-1.9zM40.6 94.1h1.3v0.9h-1.3zM42.6 94.1h1.8v0.9h-1.8z" fill="#9cdcfe" opacity="0.45"/><path d="M17 96.4h1.2v0.9h-1.2zM18.9 96.4h1.4v0.9h-1.4zM21 96.4h0.6v0.9h-0.6z" fill="#d7ba7d" opacity="0.45"/><path d="M22.4 96.4h3v0.9h-3zM26.2 96.4h2.6v0.9h-2.6z" fill="#cccccc" opacity="0.45"/><path d="M30.6 96.4h1.7v0.9h-1.7zM33 96.4h3.3v0.9h-3.3z" fill="#cccccc" opacity="0.45"/><path d="M37.3 96.4h1.2v0.9h-1.2zM39.2 96.4h1.8v0.9h-1.8zM41.8 96.4h0.8v0.9h-0.8z" fill="#9cdcfe" opacity="0.45"/><path d="M43.4 96.4h3.7v0.9h-3.7zM47.7 96.4h3.1v0.9h-3.1zM51.5 96.4h1.9v0.9h-1.9z" fill="#cccccc" opacity="0.45"/><rect x="0.00" y="99.50" width="182.60" height="3.30" fill="#181818"/><path d="M30 100.6h1.7v1.1h-1.7zM33.2 100.6h2v1.1h-2zM36.6 100.6h1.9v1.1h-1.9zM40 100.6h1.7v1.1h-1.7zM43.2 100.6h1.6v1.1h-1.6zM46.3 100.6h1.7v1.1h-1.7zM49.5 100.6h1.7v1.1h-1.7zM52.7 100.6h1.6v1.1h-1.6zM55.7 100.6h1.5v1.1h-1.5zM58.7 100.6h1.2v1.1h-1.2zM61.4 100.6h1.8v1.1h-1.8zM64.7 100.6h1.5v1.1h-1.5zM67.7 100.6h1.1v1.1h-1.1zM70.3 100.6h1.2v1.1h-1.2zM73 100.6h1.9v1.1h-1.9z" fill="#999999" opacity="0.40"/><path d="M145 100.6h1.8v1.1h-1.8zM148.3 100.6h2.2v1.1h-2.2zM151.9 100.6h3v1.1h-3zM156.5 100.6h3.6v1.1h-3.6zM161.6 100.6h2v1.1h-2zM165.1 100.6h2.2v1.1h-2.2zM168.7 100.6h2.3v1.1h-2.3zM172.5 100.6h1.1v1.1h-1.1zM175.1 100.6h3.6v1.1h-3.6z" fill="#999999" opacity="0.40"/></svg></div><div class="t1">Immanuel Mayer-CAI NatLPr-A1</div><div class="t2">CAI_NatLPr-Assignment_1 - Sommer 2025</div><svg class="av" viewBox="0 0 7 6" width="7" height="6"><path d="M4.2 0.3 L6.3 1.6 L5.8 2.6 L6.4 3.2 L5 5 L4.2 4.2 Z" fill="#b9b9b9" opacity="0.75"/><ellipse cx="2.5" cy="3.9" rx="2.3" ry="1.2" transform="rotate(-28 2.5 3.9)" fill="#55803a" opacity="0.9"/></svg><div class="avt">vatar</div><div class="t3">Gokul Srinivasagan</div></div>
<div class="card" style="left:161.3px;top:253.1px"><div class="th"><svg class="ths" width="182.6" height="102.8" viewBox="0 0 182.6 102.8" preserveAspectRatio="none"><rect x="0.00" y="0.00" width="182.60" height="102.80" fill="#1c1c1c"/><rect x="0.00" y="0.00" width="182.60" height="3.50" fill="#1a1a1a"/><path d="M1 1.8h11.1v0.8h-11.1zM14.1 1.8h12.6v0.8h-12.6zM28.7 1.8h13.3v0.8h-13.3zM44.1 1.8h11.9v0.8h-11.9z" fill="#cccccc" opacity="0.35"/><path d="M1 5.2h12.6v0.6h-12.6zM14.6 5.2h15v0.6h-15zM30.6 5.2h3.4v0.6h-3.4zM35 5.2h9.1v0.6h-9.1zM45 5.2h15.3v0.6h-15.3zM61.3 5.2h11.4v0.6h-11.4zM73.7 5.2h14.7v0.6h-14.7zM89.5 5.2h1.5v0.6h-1.5z" fill="#aaaaaa" opacity="0.30"/><path d="M4 7.8h6.3v0.7h-6.3zM11.8 7.8h4.7v0.7h-4.7zM18 7.8h6.8v0.7h-6.8zM26.3 7.8h7v0.7h-7zM34.8 7.8h3.1v0.7h-3.1zM39.4 7.8h4.5v0.7h-4.5zM45.4 7.8h5v0.7h-5zM51.9 7.8h9.4v0.7h-9.4zM62.8 7.8h1.2v0.7h-1.2z" fill="#aaaaaa" opacity="0.35"/><text x="5" y="17" font-family="Liberation Sans" font-size="4.0" fill="#e6e6e6" opacity="0.85">Assignment 1 (100 points)</text><rect x="5.00" y="21.00" width="10.00" height="1.00" fill="#dddddd" opacity="0.45"/><rect x="5.00" y="23.50" width="9.00" height="1.00" fill="#dddddd" opacity="0.45"/><rect x="5.00" y="26.00" width="7.00" height="1.00" fill="#dddddd" opacity="0.45"/><rect x="5.00" y="28.30" width="18.00" height="1.40" fill="#dddddd" opacity="0.55"/><rect x="5.00" y="35.00" width="36.00" height="1.60" fill="#dddddd" opacity="0.55"/><path d="M5 40.5h2.1v0.8h-2.1zM7.8 40.5h4.3v0.8h-4.3zM12.7 40.5h2v0.8h-2zM15.4 40.5h3.7v0.8h-3.7zM19.8 40.5h1.9v0.8h-1.9zM22.4 40.5h1.5v0.8h-1.5zM24.6 40.5h4.5v0.8h-4.5zM29.9 40.5h2.2v0.8h-2.2zM32.8 40.5h2.3v0.8h-2.3zM35.8 40.5h4.9v0.8h-4.9zM41.4 40.5h4.6v0.8h-4.6zM46.7 40.5h2.5v0.8h-2.5zM49.9 40.5h4.9v0.8h-4.9zM55.5 40.5h3.4v0.8h-3.4zM59.5 40.5h3.9v0.8h-3.9zM64.1 40.5h2.2v0.8h-2.2zM67 40.5h4.8v0.8h-4.8zM72.5 40.5h3.9v0.8h-3.9zM77.1 40.5h4.9v0.8h-4.9zM82.7 40.5h4.6v0.8h-4.6zM88.1 40.5h2.5v0.8h-2.5zM91.3 40.5h2.8v0.8h-2.8zM94.8 40.5h2.1v0.8h-2.1zM97.5 40.5h2v0.8h-2zM100.3 40.5h1.7v0.8h-1.7zM102.7 40.5h2.6v0.8h-2.6zM105.9 40.5h3.6v0.8h-3.6zM110.2 40.5h1.5v0.8h-1.5zM112.5 40.5h3.9v0.8h-3.9zM117 40.5h2.7v0.8h-2.7z" fill="#cccccc" opacity="0.35"/><path d="M5 45h2.6v0.8h-2.6zM8.3 45h4.4v0.8h-4.4zM13.3 45h3.2v0.8h-3.2zM17.2 45h2.6v0.8h-2.6zM20.5 45h3.2v0.8h-3.2zM24.4 45h4v0.8h-4zM29.1 45h1.7v0.8h-1.7zM31.5 45h4.9v0.8h-4.9zM37.1 45h1.6v0.8h-1.6zM39.4 45h4.1v0.8h-4.1zM44.2 45h4.5v0.8h-4.5zM49.4 45h1.6v0.8h-1.6zM51.6 45h4.3v0.8h-4.3zM56.6 45h2.8v0.8h-2.8zM60.1 45h3.5v0.8h-3.5zM64.3 45h1.5v0.8h-1.5zM66.5 45h1.7v0.8h-1.7zM68.9 45h2.1v0.8h-2.1zM71.7 45h4.8v0.8h-4.8zM77.3 45h2.2v0.8h-2.2zM80.1 45h4.1v0.8h-4.1zM85 45h4.8v0.8h-4.8zM90.4 45h4.8v0.8h-4.8zM95.9 45h2.7v0.8h-2.7zM99.3 45h2.7v0.8h-2.7zM102.8 45h3.3v0.8h-3.3zM106.8 45h4.2v0.8h-4.2zM111.7 45h1.9v0.8h-1.9zM114.3 45h4.1v0.8h-4.1zM119.1 45h4.3v0.8h-4.3zM124.1 45h4.5v0.8h-4.5zM129.3 45h1.6v0.8h-1.6zM131.7 45h4.8v0.8h-4.8zM137.2 45h1.8v0.8h-1.8zM139.7 45h2.7v0.8h-2.7zM143.1 45h3.6v0.8h-3.6zM147.4 45h4.7v0.8h-4.7zM152.8 45h2.7v0.8h-2.7zM156.2 45h4.7v0.8h-4.7zM161.7 45h3.4v0.8h-3.4zM165.8 45h2.6v0.8h-2.6zM169.1 45h2.6v0.8h-2.6zM172.4 45h2.1v0.8h-2.1zM175.2 45h1.8v0.8h-1.8z" fill="#cccccc" opacity="0.35"/><path d="M5 47.5h2v0.8h-2zM7.7 47.5h3.9v0.8h-3.9z" fill="#cccccc" opacity="0.35"/><rect x="3.00" y="52.00" width="176.60" height="47.00" fill="#1f1f1f"/><rect x="3.00" y="52.00" width="176.60" height="0.40" fill="#3a3a3a"/><path d="M9 53.6h5v0.8h-5zM14.7 53.6h2.1v0.8h-2.1zM17.5 53.6h1.7v0.8h-1.7zM19.8 53.6h5v0.8h-5zM25.5 53.6h3.4v0.8h-3.4zM29.5 53.6h2.9v0.8h-2.9zM33.2 53.6h0.8v0.8h-0.8z" fill="#cccccc" opacity="0.30"/><rect x="12.00" y="57.60" width="100.00" height="1.00" fill="#c05050" opacity="0.35"/><path d="M12 58.8h4v0.8h-4zM16.9 58.8h5.1v0.8h-5.1zM22.9 58.8h3.3v0.8h-3.3zM27.1 58.8h3.1v0.8h-3.1zM31.1 58.8h1.3v0.8h-1.3zM33.3 58.8h5.6v0.8h-5.6zM39.7 58.8h1.2v0.8h-1.2zM41.8 58.8h3.5v0.8h-3.5zM46.2 58.8h5.2v0.8h-5.2zM52.3 58.8h1.7v0.8h-1.7zM54.8 58.8h4.7v0.8h-4.7zM60.4 58.8h5.7v0.8h-5.7z" fill="#dddddd" opacity="0.30"/><path d="M18 63h1.2v0.9h-1.2zM19.9 63h2.3v0.9h-2.3zM22.8 63h1.4v0.9h-1.4zM25 63h0.8v0.9h-0.8z" fill="#9cdcfe" opacity="0.40"/><path d="M26.6 63h3.9v0.9h-3.9zM31.2 63h2.4v0.9h-2.4zM34.3 63h0.8v0.9h-0.8z" fill="#9cdcfe" opacity="0.40"/><path d="M18 65.2h1.3v0.9h-1.3zM20 65.2h3.5v0.9h-3.5zM24.2 65.2h2v0.9h-2z" fill="#9cdcfe" opacity="0.40"/><path d="M27 65.2h3.6v0.9h-3.6zM31.3 65.2h0.7v0.9h-0.7z" fill="#dcdcaa" opacity="0.40"/><path d="M32.7 65.2h3.3v0.9h-3.3zM36.8 65.2h3.6v0.9h-3.6z" fill="#cccccc" opacity="0.40"/><path d="M42 65.2h1.2v0.9h-1.2z" fill="#ce9178" opacity="0.40"/><path d="M16 67.5h3.5v0.9h-3.5zM20.2 67.5h1.8v0.9h-1.8zM22.7 67.5h3.9v0.9h-3.9z" fill="#ce9178" opacity="0.40"/><path d="M27.5 67.5h2.9v0.9h-2.9zM31.2 67.5h2.7v0.9h-2.7zM34.6 67.5h1v0.9h-1zM36.4 67.5h2.1v0.9h-2.1z" fill="#ce9178" opacity="0.40"/><path d="M39.2 67.5h1.8v0.9h-1.8zM41.7 67.5h1.9v0.9h-1.9zM44.3 67.5h0.7v0.9h-0.7z" fill="#4ec9b0" opacity="0.40"/><path d="M16 69.8h3.8v0.9h-3.8zM20.5 69.8h2.2v0.9h-2.2zM23.4 69.8h2.6v0.9h-2.6z" fill="#4ec9b0" opacity="0.40"/><path d="M26.9 69.8h2.3v0.9h-2.3zM29.9 69.8h1.8v0.9h-1.8z" fill="#4ec9b0" opacity="0.40"/><path d="M32.6 69.8h2.6v0.9h-2.6zM35.9 69.8h1.5v0.9h-1.5zM38.1 69.8h1.2v0.9h-1.2z" fill="#9cdcfe" opacity="0.40"/><path d="M40.1 69.8h1.8v0.9h-1.8zM42.6 69.8h1.2v0.9h-1.2z" fill="#dcdcaa" opacity="0.40"/><path d="M20 72h3.8v0.9h-3.8zM24.5 72h1.9v0.9h-1.9zM27.1 72h2.3v0.9h-2.3z" fill="#4ec9b0" opacity="0.40"/><path d="M30.2 72h3.2v0.9h-3.2zM34.1 72h1.1v0.9h-1.1zM35.8 72h1.5v0.9h-1.5zM38 72h2.3v0.9h-2.3zM41 72h1.7v0.9h-1.7z" fill="#ce9178" opacity="0.40"/><path d="M43.5 72h1.5v0.9h-1.5zM45.8 72h3.2v0.9h-3.2z" fill="#4ec9b0" opacity="0.40"/><path d="M49.7 72h1.5v0.9h-1.5zM51.9 72h3.7v0.9h-3.7zM56.3 72h1.3v0.9h-1.3zM58.3 72h3.9v0.9h-3.9zM62.9 72h0.6v0.9h-0.6z" fill="#9cdcfe" opacity="0.40"/><path d="M64.4 72h2.4v0.9h-2.4zM67.5 72h2v0.9h-2z" fill="#dcdcaa" opacity="0.40"/><path d="M20 74.2h1v0.9h-1zM21.7 74.2h2.2v0.9h-2.2zM24.6 74.2h1.8v0.9h-1.8zM27.2 74.2h2.2v0.9h-2.2zM30.1 74.2h0.8v0.9h-0.8z" fill="#ce9178" opacity="0.40"/><path d="M31.7 74.2h3.9v0.9h-3.9zM36.3 74.2h2.6v0.9h-2.6zM39.6 74.2h1.9v0.9h-1.9z" fill="#ce9178" opacity="0.40"/><path d="M20 76.5h3.5v0.9h-3.5zM24.2 76.5h2.3v0.9h-2.3zM27.1 76.5h2.3v0.9h-2.3z" fill="#ce9178" opacity="0.40"/><path d="M30.2 76.5h2.4v0.9h-2.4zM33.3 76.5h1.5v0.9h-1.5zM35.5 76.5h2.1v0.9h-2.1zM38.3 76.5h1.9v0.9h-1.9z" fill="#ce9178" opacity="0.40"/><path d="M41.1 76.5h2.8v0.9h-2.8zM44.6 76.5h1.7v0.9h-1.7z" fill="#9cdcfe" opacity="0.40"/><path d="M47 76.5h1.2v0.9h-1.2z" fill="#6a9955" opacity="0.40"/><path d="M20 78.8h2.1v0.9h-2.1zM22.8 78.8h2.3v0.9h-2.3zM25.8 78.8h0.8v0.9h-0.8z" fill="#cccccc" opacity="0.40"/><path d="M27.4 78.8h2.1v0.9h-2.1zM30.2 78.8h3.4v0.9h-3.4z" fill="#4ec9b0" opacity="0.40"/><path d="M34.4 78.8h2.8v0.9h-2.8zM37.9 78.8h3.2v0.9h-3.2zM41.8 78.8h1.9v0.9h-1.9zM44.4 78.8h1.8v0.9h-1.8zM46.8 78.8h0.6v0.9h-0.6z" fill="#cccccc" opacity="0.40"/><path d="M48.2 78.8h2.5v0.9h-2.5zM51.4 78.8h1.9v0.9h-1.9zM54 78.8h2.4v0.9h-2.4zM57.1 78.8h0.8v0.9h-0.8z" fill="#ce9178" opacity="0.40"/><path d="M18 81h3.4v0.9h-3.4z" fill="#9cdcfe" opacity="0.40"/><path d="M22.2 81h2.7v0.9h-2.7z" fill="#cccccc" opacity="0.40"/><path d="M26.2 81h3.3v0.9h-3.3zM30.2 81h1.6v0.9h-1.6z" fill="#dcdcaa" opacity="0.40"/><path d="M32.7 81h3.2v0.9h-3.2zM36.5 81h1.9v0.9h-1.9z" fill="#9cdcfe" opacity="0.40"/><path d="M39.4 81h2.4v0.9h-2.4z" fill="#dcdcaa" opacity="0.40"/><path d="M12 83.2h2.6v0.9h-2.6zM15.3 83.2h1.1v0.9h-1.1z" fill="#ce9178" opacity="0.40"/><path d="M17.2 83.2h1.1v0.9h-1.1zM19 83.2h2v0.9h-2zM21.7 83.2h1.7v0.9h-1.7z" fill="#cccccc" opacity="0.40"/><path d="M24.3 83.2h0.5v0.9h-0.5z" fill="#9cdcfe" opacity="0.40"/><path d="M18 85.5h2.6v0.9h-2.6zM21.3 85.5h0.8v0.9h-0.8z" fill="#4ec9b0" opacity="0.40"/><path d="M23 85.5h2.8v0.9h-2.8zM26.5 85.5h3.1v0.9h-3.1zM30.2 85.5h3.9v0.9h-3.9z" fill="#dcdcaa" opacity="0.40"/><path d="M35.3 85.5h2.4v0.9h-2.4zM38.5 85.5h3v0.9h-3zM42.2 85.5h3.2v0.9h-3.2z" fill="#dcdcaa" opacity="0.40"/><path d="M46.3 85.5h3.5v0.9h-3.5zM50.5 85.5h1.2v0.9h-1.2zM52.4 85.5h3.5v0.9h-3.5zM56.6 85.5h2.6v0.9h-2.6z" fill="#dcdcaa" opacity="0.40"/><path d="M60 85.5h2.9v0.9h-2.9z" fill="#ce9178" opacity="0.40"/><path d="M16 87.8h3.7v0.9h-3.7zM20.4 87.8h3.9v0.9h-3.9z" fill="#cccccc" opacity="0.40"/><path d="M25.1 87.8h2.8v0.9h-2.8zM28.5 87.8h3.4v0.9h-3.4zM32.7 87.8h1.2v0.9h-1.2z" fill="#dcdcaa" opacity="0.40"/><path d="M12 90h4v0.9h-4zM16.7 90h3v0.9h-3z" fill="#6a9955" opacity="0.40"/><path d="M20.5 90h1.7v0.9h-1.7zM22.9 90h1.2v0.9h-1.2z" fill="#6a9955" opacity="0.40"/><path d="M24.9 90h3.7v0.9h-3.7zM29.2 90h4v0.9h-4zM33.9 90h3.1v0.9h-3.1zM37.7 90h0.6v0.9h-0.6z" fill="#4ec9b0" opacity="0.40"/><path d="M39.1 90h0.9v0.9h-0.9z" fill="#9cdcfe" opacity="0.40"/><path d="M12 94.5h1.2v0.9h-1.2zM13.9 94.5h1.2v0.9h-1.2zM15.8 94.5h2.7v0.9h-2.7zM19.2 94.5h3v0.9h-3z" fill="#4ec9b0" opacity="0.40"/><path d="M23.1 94.5h1v0.9h-1zM24.8 94.5h1.3v0.9h-1.3zM26.8 94.5h3.1v0.9h-3.1zM30.5 94.5h2.5v0.9h-2.5zM33.7 94.5h2v0.9h-2z" fill="#9cdcfe" opacity="0.40"/><path d="M36.5 94.5h1.4v0.9h-1.4zM38.6 94.5h1.9v0.9h-1.9zM41.2 94.5h2.7v0.9h-2.7zM44.6 94.5h2.1v0.9h-2.1z" fill="#6a9955" opacity="0.40"/><path d="M47.5 94.5h2.6v0.9h-2.6z" fill="#cccccc" opacity="0.40"/><path d="M12 96.8h2.6v0.9h-2.6zM15.3 96.8h1.4v0.9h-1.4zM17.4 96.8h0.4v0.9h-0.4z" fill="#ce9178" opacity="0.40"/><path d="M18.6 96.8h2.2v0.9h-2.2zM21.5 96.8h1.4v0.9h-1.4zM23.6 96.8h1.1v0.9h-1.1z" fill="#4ec9b0" opacity="0.40"/><path d="M26.5 96.8h1.3v0.9h-1.3zM28.5 96.8h1.4v0.9h-1.4zM30.5 96.8h2.8v0.9h-2.8zM34 96.8h1.7v0.9h-1.7z" fill="#6a9955" opacity="0.40"/><path d="M36.6 96.8h3.9v0.9h-3.9zM41.2 96.8h1.3v0.9h-1.3zM43.2 96.8h2.6v0.9h-2.6zM46.5 96.8h2.6v0.9h-2.6z" fill="#dcdcaa" opacity="0.40"/><path d="M50 96.8h0.4v0.9h-0.4z" fill="#9cdcfe" opacity="0.40"/><rect x="0.00" y="100.00" width="182.60" height="2.80" fill="#151515"/></svg></div><div class="t1">Florian Seiler-CAI NatLPr-A1</div><div class="t2">CAI_NatLPr-Assignment_1 - Sommer 2025</div><svg class="av" viewBox="0 0 7 6" width="7" height="6"><path d="M4.2 0.3 L6.3 1.6 L5.8 2.6 L6.4 3.2 L5 5 L4.2 4.2 Z" fill="#b9b9b9" opacity="0.75"/><ellipse cx="2.5" cy="3.9" rx="2.3" ry="1.2" transform="rotate(-28 2.5 3.9)" fill="#55803a" opacity="0.9"/></svg><div class="avt">vatar</div><div class="t3">Gokul Srinivasagan</div></div>
<div class="card" style="left:354.0px;top:253.1px"><div class="th"><svg class="ths" width="182.6" height="102.8" viewBox="0 0 182.6 102.8" preserveAspectRatio="none"><rect x="0.00" y="0.00" width="182.60" height="102.80" fill="#1e1e1e"/><rect x="0.00" y="0.00" width="182.60" height="3.50" fill="#1a1a1a"/><path d="M3 1.8h5.2v0.7h-5.2zM10.2 1.8h5.3v0.7h-5.3zM17.5 1.8h3.9v0.7h-3.9zM23.4 1.8h3v0.7h-3zM28.4 1.8h2v0.7h-2zM32.4 1.8h4.7v0.7h-4.7z" fill="#cccccc" opacity="0.35"/><rect x="0.00" y="3.50" width="182.60" height="10.00" fill="#1d1d1d"/><path d="M5 5.2h6.3v0.8h-6.3zM13.3 5.2h8.3v0.8h-8.3zM23.6 5.2h5.6v0.8h-5.6zM31.2 5.2h3.8v0.8h-3.8z" fill="#cccccc" opacity="0.35"/><path d="M5 7.8h5.3v0.7h-5.3zM11.3 7.8h11.6v0.7h-11.6zM23.9 7.8h10.8v0.7h-10.8zM35.7 7.8h7v0.7h-7zM43.6 7.8h8.5v0.7h-8.5zM53.1 7.8h10.2v0.7h-10.2zM64.3 7.8h4.3v0.7h-4.3zM69.6 7.8h8.6v0.7h-8.6zM79.2 7.8h11.7v0.7h-11.7zM91.9 7.8h5.2v0.7h-5.2zM98.1 7.8h11.6v0.7h-11.6zM110.7 7.8h10.2v0.7h-10.2zM121.9 7.8h12.1v0.7h-12.1zM135.1 7.8h6v0.7h-6zM142.1 7.8h3.1v0.7h-3.1zM146.2 7.8h6.8v0.7h-6.8z" fill="#aaaaaa" opacity="0.35"/><path d="M5 10.3h6.8v0.7h-6.8zM13.8 10.3h4.7v0.7h-4.7zM20.5 10.3h2.6v0.7h-2.6zM25.1 10.3h3.2v0.7h-3.2zM30.2 10.3h5.8v0.7h-5.8zM38.1 10.3h3.7v0.7h-3.7zM43.8 10.3h6.2v0.7h-6.2z" fill="#aaaaaa" opacity="0.35"/><rect x="0.00" y="3.50" width="3.00" height="102.80" fill="#181818"/><rect x="7.00" y="13.50" width="0.40" height="88.00" fill="#333333"/><path d="M12 16h3.8v0.9h-3.8zM16.5 16h3.7v0.9h-3.7zM20.9 16h2.5v0.9h-2.5zM24.2 16h0.9v0.9h-0.9z" fill="#c8c8c8" opacity="0.40"/><path d="M25.8 16h3.9v0.9h-3.9zM30.5 16h0.5v0.9h-0.5z" fill="#b0b0b0" opacity="0.40"/><path d="M12 20.8h3.6v0.9h-3.6z" fill="#b0b0b0" opacity="0.40"/><path d="M17.1 20.8h2.8v0.9h-2.8zM20.6 20.8h1.8v0.9h-1.8z" fill="#ce9178" opacity="0.40"/><path d="M15 23.2h3.5v0.9h-3.5z" fill="#dcdcaa" opacity="0.40"/><path d="M20.3 23.2h3.3v0.9h-3.3zM24.4 23.2h1.1v0.9h-1.1zM26.1 23.2h1.8v0.9h-1.8z" fill="#dcdcaa" opacity="0.40"/><path d="M15 25.6h2.2v0.9h-2.2zM17.9 25.6h1.4v0.9h-1.4zM19.9 25.6h2.2v0.9h-2.2z" fill="#b0b0b0" opacity="0.40"/><path d="M22.9 25.6h2.8v0.9h-2.8z" fill="#d4d4d4" opacity="0.40"/><path d="M27.3 25.6h1.7v0.9h-1.7zM29.7 25.6h0.5v0.9h-0.5z" fill="#c8c8c8" opacity="0.40"/><path d="M18 28h3.4v0.9h-3.4zM22.1 28h2.6v0.9h-2.6zM25.3 28h0.6v0.9h-0.6z" fill="#d4d4d4" opacity="0.40"/><path d="M26.7 28h3.8v0.9h-3.8zM31.2 28h1.6v0.9h-1.6zM33.5 28h3v0.9h-3z" fill="#d4d4d4" opacity="0.40"/><path d="M12 30.4h2.8v0.9h-2.8zM15.5 30.4h1.3v0.9h-1.3z" fill="#d4d4d4" opacity="0.40"/><path d="M15 35.2h2.8v0.9h-2.8zM18.5 35.2h1.8v0.9h-1.8zM21 35.2h1.5v0.9h-1.5z" fill="#d4d4d4" opacity="0.40"/><path d="M23.3 35.2h0.6v0.9h-0.6z" fill="#6a9955" opacity="0.40"/><path d="M18 37.6h3.9v0.9h-3.9zM22.6 37.6h1.9v0.9h-1.9z" fill="#6a9955" opacity="0.40"/><path d="M25.4 37.6h1.8v0.9h-1.8zM27.9 37.6h2.9v0.9h-2.9zM31.5 37.6h1v0.9h-1z" fill="#569cd6" opacity="0.40"/><path d="M33.3 37.6h3.3v0.9h-3.3z" fill="#6a9955" opacity="0.40"/><rect x="12.00" y="24.50" width="90.00" height="0.90" fill="#c8c8c8" opacity="0.30"/><path d="M12 52h3.6v0.9h-3.6zM16.3 52h1.2v0.9h-1.2zM18.1 52h0.9v0.9h-0.9z" fill="#ce9178" opacity="0.42"/><path d="M19.9 52h2.3v0.9h-2.3zM22.8 52h3.3v0.9h-3.3zM26.9 52h3.4v0.9h-3.4zM31 52h2.3v0.9h-2.3z" fill="#dcdcaa" opacity="0.42"/><path d="M15 54.3h3.1v0.9h-3.1zM18.8 54.3h0.7v0.9h-0.7z" fill="#dcdcaa" opacity="0.42"/><path d="M20.4 54.3h2.9v0.9h-2.9zM24 54.3h3.1v0.9h-3.1zM27.8 54.3h0.9v0.9h-0.9z" fill="#dcdcaa" opacity="0.42"/><path d="M29.4 54.3h1.5v0.9h-1.5zM31.6 54.3h2.9v0.9h-2.9z" fill="#dcdcaa" opacity="0.42"/><path d="M21 56.6h3.2v0.9h-3.2z" fill="#cccccc" opacity="0.42"/><path d="M25 56.6h2.4v0.9h-2.4zM28.2 56.6h1.9v0.9h-1.9z" fill="#ce9178" opacity="0.42"/><path d="M30.9 56.6h3.1v0.9h-3.1zM34.7 56.6h1.2v0.9h-1.2zM36.6 56.6h2.4v0.9h-2.4z" fill="#ce9178" opacity="0.42"/><path d="M18 58.9h1.8v0.9h-1.8zM20.5 58.9h0.8v0.9h-0.8z" fill="#9cdcfe" opacity="0.42"/><path d="M22.2 58.9h1.1v0.9h-1.1zM24 58.9h1.3v0.9h-1.3zM25.9 58.9h3.4v0.9h-3.4z" fill="#9cdcfe" opacity="0.42"/><path d="M30.7 58.9h1.9v0.9h-1.9z" fill="#dcdcaa" opacity="0.42"/><path d="M12 61.2h3.1v0.9h-3.1zM15.8 61.2h2v0.9h-2zM18.5 61.2h0.7v0.9h-0.7z" fill="#cccccc" opacity="0.42"/><path d="M12 63.5h2.9v0.9h-2.9zM15.6 63.5h0.9v0.9h-0.9z" fill="#ce9178" opacity="0.42"/><path d="M17.3 63.5h1.6v0.9h-1.6zM19.5 63.5h3.1v0.9h-3.1zM23.4 63.5h0.8v0.9h-0.8z" fill="#dcdcaa" opacity="0.42"/><path d="M24.9 63.5h2.6v0.9h-2.6z" fill="#ce9178" opacity="0.42"/><path d="M15 65.8h4v0.9h-4z" fill="#9cdcfe" opacity="0.42"/><path d="M20.6 65.8h1.6v0.9h-1.6zM22.9 65.8h0.8v0.9h-0.8z" fill="#ce9178" opacity="0.42"/><path d="M24.4 65.8h1v0.9h-1zM26.2 65.8h3.5v0.9h-3.5zM30.4 65.8h0.6v0.9h-0.6z" fill="#ce9178" opacity="0.42"/><path d="M15 68.1h1.8v0.9h-1.8zM17.5 68.1h1.6v0.9h-1.6zM19.8 68.1h1.4v0.9h-1.4zM21.9 68.1h3.1v0.9h-3.1z" fill="#9cdcfe" opacity="0.42"/><path d="M25.9 68.1h1.2v0.9h-1.2zM27.8 68.1h1.1v0.9h-1.1zM29.6 68.1h0.8v0.9h-0.8z" fill="#dcdcaa" opacity="0.42"/><path d="M31.2 68.1h3v0.9h-3zM34.9 68.1h0.5v0.9h-0.5z" fill="#dcdcaa" opacity="0.42"/><path d="M36.2 68.1h2v0.9h-2z" fill="#cccccc" opacity="0.42"/><path d="M18 70.4h1.5v0.9h-1.5zM20.2 70.4h1.6v0.9h-1.6z" fill="#dcdcaa" opacity="0.42"/><path d="M22.7 70.4h3.1v0.9h-3.1z" fill="#dcdcaa" opacity="0.42"/><path d="M12 75h3v0.9h-3zM15.7 75h1.9v0.9h-1.9zM18.2 75h2.3v0.9h-2.3zM21.2 75h1.2v0.9h-1.2z" fill="#ce9178" opacity="0.42"/><path d="M23.2 75h1.8v0.9h-1.8zM25.8 75h1v0.9h-1zM27.5 75h2.6v0.9h-2.6zM30.8 75h3.2v0.9h-3.2zM34.7 75h1v0.9h-1z" fill="#cccccc" opacity="0.42"/><path d="M18 77.3h2.1v0.9h-2.1zM20.8 77.3h1.2v0.9h-1.2z" fill="#dcdcaa" opacity="0.42"/><path d="M22.8 77.3h2.1v0.9h-2.1zM25.6 77.3h2.7v0.9h-2.7z" fill="#dcdcaa" opacity="0.42"/><path d="M29.1 77.3h2v0.9h-2zM31.9 77.3h1.1v0.9h-1.1zM33.6 77.3h2v0.9h-2z" fill="#dcdcaa" opacity="0.42"/><path d="M36.7 77.3h3.5v0.9h-3.5zM40.9 77.3h1.3v0.9h-1.3z" fill="#ce9178" opacity="0.42"/><path d="M18 79.6h1.7v0.9h-1.7zM20.4 79.6h2v0.9h-2z" fill="#cccccc" opacity="0.42"/><path d="M23.2 79.6h2.7v0.9h-2.7zM26.6 79.6h2.9v0.9h-2.9z" fill="#ce9178" opacity="0.42"/><path d="M18 81.9h1.6v0.9h-1.6zM20.3 81.9h2.3v0.9h-2.3zM23.3 81.9h1v0.9h-1z" fill="#dcdcaa" opacity="0.42"/><path d="M25.1 81.9h2.5v0.9h-2.5zM28.3 81.9h1.4v0.9h-1.4z" fill="#dcdcaa" opacity="0.42"/><path d="M21 84.2h1.6v0.9h-1.6zM23.3 84.2h2.9v0.9h-2.9zM27 84.2h2.2v0.9h-2.2zM29.8 84.2h3.3v0.9h-3.3z" fill="#ce9178" opacity="0.42"/><path d="M34.4 84.2h2v0.9h-2zM37.1 84.2h1.6v0.9h-1.6z" fill="#dcdcaa" opacity="0.42"/><path d="M18 88.8h1.2v0.9h-1.2zM19.9 88.8h2.9v0.9h-2.9zM23.5 88.8h3.3v0.9h-3.3zM27.5 88.8h1.8v0.9h-1.8z" fill="#cccccc" opacity="0.42"/><path d="M15 93.4h2.6v0.9h-2.6zM18.3 93.4h3.9v0.9h-3.9zM22.8 93.4h2.6v0.9h-2.6zM26.1 93.4h2v0.9h-2z" fill="#cccccc" opacity="0.42"/><path d="M28.8 93.4h3.6v0.9h-3.6zM33.2 93.4h2v0.9h-2zM35.9 93.4h1.3v0.9h-1.3z" fill="#9cdcfe" opacity="0.42"/><path d="M38 93.4h1.1v0.9h-1.1z" fill="#9cdcfe" opacity="0.42"/><path d="M12 95.7h3.5v0.9h-3.5z" fill="#cccccc" opacity="0.42"/><path d="M16.3 95.7h1.3v0.9h-1.3zM18.2 95.7h3.5v0.9h-3.5zM22.4 95.7h1.9v0.9h-1.9z" fill="#dcdcaa" opacity="0.42"/><path d="M18 98h1.5v0.9h-1.5zM20.2 98h1.6v0.9h-1.6zM22.5 98h2.9v0.9h-2.9zM26.1 98h1.7v0.9h-1.7z" fill="#cccccc" opacity="0.42"/><rect x="0.00" y="100.50" width="182.60" height="2.30" fill="#161616"/></svg></div><div class="t1">Felix Boyke-CAI NatLPr-A1</div><div class="t2">CAI_NatLPr-Assignment_1 - Sommer 2025</div><svg class="av" viewBox="0 0 7 6" width="7" height="6"><path d="M4.2 0.3 L6.3 1.6 L5.8 2.6 L6.4 3.2 L5 5 L4.2 4.2 Z" fill="#b9b9b9" opacity="0.75"/><ellipse cx="2.5" cy="3.9" rx="2.3" ry="1.2" transform="rotate(-28 2.5 3.9)" fill="#55803a" opacity="0.9"/></svg><div class="avt">vatar</div><div class="t3">Gokul Srinivasagan</div></div>
<div class="card" style="left:546.7px;top:253.1px"><div class="th"><svg class="ths" width="182.6" height="102.8" viewBox="0 0 182.6 102.8" preserveAspectRatio="none"><rect x="0.00" y="0.00" width="182.60" height="102.80" fill="#383838"/><rect x="0.00" y="0.00" width="182.60" height="8.00" fill="#7e1430"/><rect x="0.00" y="0.00" width="182.60" height="3.50" fill="#5e0f24"/><rect x="4.00" y="0.80" width="20.00" height="2.70" fill="#9a2040"/><rect x="28.00" y="0.80" width="14.00" height="2.70" fill="#8a1a38"/><path d="M15 5.7h10.1v0.8h-10.1zM26.1 5.7h6.3v0.8h-6.3zM33.4 5.7h17.3v0.8h-17.3zM51.8 5.7h4.6v0.8h-4.6zM57.4 5.7h14.8v0.8h-14.8zM73.1 5.7h11v0.8h-11z" fill="#e6b0c0" opacity="0.50"/><rect x="0.00" y="8.00" width="182.60" height="16.00" fill="#383838"/><ellipse cx="5" cy="13" rx="3" ry="1.8" fill="none" stroke="#f9ab00" stroke-width="1"/><rect x="10.00" y="11.50" width="22.00" height="1.60" fill="#dddddd" opacity="0.60"/><path d="M10 15.8h3.2v1h-3.2zM15.2 15.8h5v1h-5zM22.3 15.8h3.1v1h-3.1zM27.4 15.8h4.7v1h-4.7zM34.1 15.8h3.3v1h-3.3zM39.4 15.8h3.4v1h-3.4zM44.8 15.8h4.7v1h-4.7zM51.5 15.8h6.3v1h-6.3zM59.8 15.8h3.5v1h-3.5zM65.3 15.8h3.9v1h-3.9zM71.2 15.8h3.8v1h-3.8z" fill="#dddddd" opacity="0.45"/><rect x="151.00" y="11.50" width="4.00" height="3.00" fill="#cccccc" opacity="0.40"/><rect x="159.00" y="11.50" width="4.00" height="3.00" fill="#cccccc" opacity="0.40"/><rect x="168.00" y="12.00" width="12.00" height="2.50" fill="#cccccc" opacity="0.50"/><rect x="0.00" y="24.00" width="9.00" height="78.80" fill="#2f2f2f"/><rect x="2.50" y="21.00" width="3.00" height="2.00" fill="#aaaaaa" opacity="0.40"/><rect x="2.50" y="28.00" width="3.00" height="2.00" fill="#aaaaaa" opacity="0.40"/><rect x="2.50" y="35.00" width="3.00" height="2.00" fill="#aaaaaa" opacity="0.40"/><rect x="2.50" y="42.00" width="3.00" height="2.00" fill="#aaaaaa" opacity="0.40"/><rect x="2.50" y="48.00" width="3.00" height="2.00" fill="#aaaaaa" opacity="0.40"/><rect x="9.00" y="24.00" width="115.00" height="78.80" fill="#383838"/><path d="M10 30.2h4.8v0.8h-4.8zM15.5 30.2h3.5v0.8h-3.5zM19.7 30.2h2.9v0.8h-2.9zM23.3 30.2h4.9v0.8h-4.9zM28.9 30.2h1.7v0.8h-1.7zM31.3 30.2h4.5v0.8h-4.5zM36.5 30.2h2.5v0.8h-2.5zM39.7 30.2h2v0.8h-2zM42.4 30.2h1.9v0.8h-1.9zM45 30.2h2.6v0.8h-2.6zM48.3 30.2h4.4v0.8h-4.4zM53.4 30.2h2.1v0.8h-2.1zM56.2 30.2h3.5v0.8h-3.5zM60.4 30.2h3.7v0.8h-3.7zM64.9 30.2h2.8v0.8h-2.8zM68.4 30.2h3.4v0.8h-3.4zM72.5 30.2h1.7v0.8h-1.7zM74.9 30.2h1.7v0.8h-1.7zM77.3 30.2h2.2v0.8h-2.2zM80.3 30.2h3.9v0.8h-3.9zM84.8 30.2h3v0.8h-3zM88.5 30.2h2.6v0.8h-2.6zM91.8 30.2h3.5v0.8h-3.5zM96.1 30.2h3.1v0.8h-3.1zM99.9 30.2h2.5v0.8h-2.5zM103.1 30.2h4.3v0.8h-4.3z" fill="#e0e0e0" opacity="0.45"/><path d="M10 34h3.9v0.8h-3.9zM14.6 34h2.4v0.8h-2.4zM17.7 34h3.5v0.8h-3.5zM21.9 34h3.3v0.8h-3.3zM25.9 34h4.6v0.8h-4.6zM31.2 34h4.1v0.8h-4.1zM36 34h2.5v0.8h-2.5zM39.2 34h4.9v0.8h-4.9zM44.8 34h1.9v0.8h-1.9zM47.4 34h3v0.8h-3zM51.1 34h4.1v0.8h-4.1zM55.9 34h2v0.8h-2zM58.7 34h3.2v0.8h-3.2zM62.6 34h1.6v0.8h-1.6zM64.9 34h3.8v0.8h-3.8zM69.4 34h4.2v0.8h-4.2zM74.3 34h3.5v0.8h-3.5zM78.5 34h1.5v0.8h-1.5z" fill="#e0e0e0" opacity="0.45"/><path d="M10 39.3h2.6v0.8h-2.6zM13.3 39.3h3.9v0.8h-3.9zM17.9 39.3h3.6v0.8h-3.6zM22.2 39.3h3.5v0.8h-3.5zM26.4 39.3h3.1v0.8h-3.1zM30.2 39.3h4.4v0.8h-4.4zM35.4 39.3h4.8v0.8h-4.8zM40.9 39.3h3.2v0.8h-3.2zM44.7 39.3h3.8v0.8h-3.8zM49.3 39.3h1.7v0.8h-1.7zM51.7 39.3h4v0.8h-4zM56.3 39.3h3.8v0.8h-3.8zM60.8 39.3h5v0.8h-5zM66.5 39.3h4.4v0.8h-4.4zM71.6 39.3h2.5v0.8h-2.5zM74.7 39.3h2.9v0.8h-2.9zM78.3 39.3h3.8v0.8h-3.8zM82.8 39.3h1.6v0.8h-1.6zM85.1 39.3h3.1v0.8h-3.1zM88.9 39.3h2.1v0.8h-2.1zM91.7 39.3h1.9v0.8h-1.9zM94.3 39.3h1.7v0.8h-1.7zM96.7 39.3h4.2v0.8h-4.2zM101.6 39.3h2v0.8h-2zM104.3 39.3h2.4v0.8h-2.4zM107.3 39.3h2.9v0.8h-2.9zM110.9 39.3h4.5v0.8h-4.5zM116.2 39.3h0.8v0.8h-0.8z" fill="#e0e0e0" opacity="0.45"/><path d="M10 42.8h3.1v0.8h-3.1zM13.8 42.8h3.4v0.8h-3.4zM17.9 42.8h4.6v0.8h-4.6zM23.2 42.8h4.4v0.8h-4.4zM28.3 42.8h4.5v0.8h-4.5zM33.5 42.8h2.5v0.8h-2.5zM36.7 42.8h3v0.8h-3zM40.3 42.8h2.8v0.8h-2.8zM43.8 42.8h4.6v0.8h-4.6zM49.1 42.8h4.9v0.8h-4.9zM54.6 42.8h2v0.8h-2zM57.3 42.8h2.1v0.8h-2.1zM60.2 42.8h2.3v0.8h-2.3zM63.2 42.8h2.3v0.8h-2.3zM66.2 42.8h3.2v0.8h-3.2zM70.1 42.8h3.6v0.8h-3.6zM74.3 42.8h2.4v0.8h-2.4zM77.5 42.8h1.5v0.8h-1.5zM79.7 42.8h3v0.8h-3zM83.3 42.8h2.8v0.8h-2.8zM86.8 42.8h3.5v0.8h-3.5zM91 42.8h4.8v0.8h-4.8zM96.6 42.8h3.9v0.8h-3.9zM101.2 42.8h3.3v0.8h-3.3zM105.2 42.8h3.7v0.8h-3.7zM109.5 42.8h3.9v0.8h-3.9zM114.1 42.8h1.7v0.8h-1.7zM116.5 42.8h0.5v0.8h-0.5z" fill="#e0e0e0" opacity="0.45"/><path d="M10 46.3h4.2v0.8h-4.2zM14.9 46.3h4.6v0.8h-4.6zM20.2 46.3h4.3v0.8h-4.3zM25.2 46.3h2.9v0.8h-2.9zM28.8 46.3h2.9v0.8h-2.9zM32.4 46.3h1.9v0.8h-1.9zM34.9 46.3h3.7v0.8h-3.7zM39.3 46.3h1.7v0.8h-1.7zM41.8 46.3h1.7v0.8h-1.7zM44.2 46.3h2.2v0.8h-2.2zM47.1 46.3h2.1v0.8h-2.1z" fill="#e0e0e0" opacity="0.45"/><rect x="9.00" y="52.00" width="110.00" height="50.80" fill="#1e1e1e"/><rect x="9.00" y="52.00" width="6.00" height="50.80" fill="#2a2a2a"/><circle cx="12" cy="55" r="1.5" fill="#bbbbbb" opacity="0.6"/><path d="M78 51.5h1.1v1.3h-1.1zM81.1 51.5h1v1.3h-1zM84.1 51.5h1.2v1.3h-1.2zM87.2 51.5h1.1v1.3h-1.1zM90.3 51.5h1.4v1.3h-1.4zM93.7 51.5h1v1.3h-1zM96.7 51.5h1.9v1.3h-1.9zM100.6 51.5h1.6v1.3h-1.6zM104.2 51.5h1.1v1.3h-1.1zM107.3 51.5h1.3v1.3h-1.3zM110.6 51.5h1.3v1.3h-1.3zM113.9 51.5h1.4v1.3h-1.4z" fill="#cccccc" opacity="0.35"/><path d="M16 54.6h1.6v0.8h-1.6zM18.5 54.6h5.2v0.8h-5.2zM24.7 54.6h6v0.8h-6zM31.5 54.6h3.3v0.8h-3.3zM35.8 54.6h3.4v0.8h-3.4zM40.1 54.6h1.4v0.8h-1.4zM42.4 54.6h1.5v0.8h-1.5zM44.8 54.6h2.7v0.8h-2.7zM48.4 54.6h2.3v0.8h-2.3zM51.7 54.6h2.3v0.8h-2.3z" fill="#dddddd" opacity="0.40"/><rect x="16.00" y="60.30" width="60.00" height="1.00" fill="#6a9955" opacity="0.55"/><rect x="18.00" y="62.60" width="82.00" height="1.50" fill="#4a7a3a" opacity="0.70"/><path d="M19 73.9h3.3v0.9h-3.3zM23 73.9h1.9v0.9h-1.9zM25.6 73.9h2.9v0.9h-2.9z" fill="#9cdcfe" opacity="0.40"/><path d="M30.4 73.9h2.1v0.9h-2.1zM33.2 73.9h1.5v0.9h-1.5zM35.4 73.9h3.3v0.9h-3.3zM39.4 73.9h2.6v0.9h-2.6z" fill="#b0b0b0" opacity="0.40"/><path d="M43.5 73.9h2.9v0.9h-2.9zM47.1 73.9h2.8v0.9h-2.8zM50.6 73.9h3.4v0.9h-3.4z" fill="#d4d4d4" opacity="0.40"/><path d="M55.9 73.9h3.5v0.9h-3.5zM60 73.9h0.6v0.9h-0.6z" fill="#dcdcaa" opacity="0.40"/><path d="M19 76.6h3.4v0.9h-3.4zM23.1 76.6h2.4v0.9h-2.4zM26.2 76.6h1.6v0.9h-1.6zM28.5 76.6h1.6v0.9h-1.6z" fill="#9cdcfe" opacity="0.40"/><path d="M30.8 76.6h3.9v0.9h-3.9zM35.4 76.6h2.1v0.9h-2.1z" fill="#d4d4d4" opacity="0.40"/><path d="M38.4 76.6h2.4v0.9h-2.4zM41.5 76.6h2v0.9h-2z" fill="#dcdcaa" opacity="0.40"/><path d="M44.7 76.6h3.5v0.9h-3.5zM48.9 76.6h2.4v0.9h-2.4zM52 76.6h0.9v0.9h-0.9z" fill="#569cd6" opacity="0.40"/><path d="M53.8 76.6h3.5v0.9h-3.5zM58 76.6h1.4v0.9h-1.4zM60 76.6h2.2v0.9h-2.2zM62.9 76.6h2.7v0.9h-2.7z" fill="#ce9178" opacity="0.40"/><path d="M66.4 76.6h2.3v0.9h-2.3z" fill="#6a9955" opacity="0.40"/><path d="M22 82h3.2v0.9h-3.2zM25.9 82h1.5v0.9h-1.5zM28.1 82h1.3v0.9h-1.3z" fill="#ce9178" opacity="0.40"/><path d="M30.2 82h3.4v0.9h-3.4zM34.3 82h0.5v0.9h-0.5z" fill="#c8c8c8" opacity="0.40"/><path d="M35.7 82h3v0.9h-3zM39.3 82h2.1v0.9h-2.1zM42.1 82h2.6v0.9h-2.6zM45.4 82h1.4v0.9h-1.4z" fill="#c8c8c8" opacity="0.40"/><path d="M48.6 82h2.6v0.9h-2.6zM51.8 82h3.8v0.9h-3.8zM56.4 82h2.3v0.9h-2.3zM59.4 82h2.9v0.9h-2.9z" fill="#ce9178" opacity="0.40"/><path d="M63 82h1.1v0.9h-1.1zM64.8 82h1.1v0.9h-1.1z" fill="#dcdcaa" opacity="0.40"/><path d="M19 84.7h1.2v0.9h-1.2zM20.9 84.7h3.2v0.9h-3.2zM24.8 84.7h3.2v0.9h-3.2z" fill="#6a9955" opacity="0.40"/><path d="M28.8 84.7h2.3v0.9h-2.3zM31.7 84.7h3.8v0.9h-3.8zM36.2 84.7h2.5v0.9h-2.5z" fill="#b0b0b0" opacity="0.40"/><path d="M39.9 84.7h2.5v0.9h-2.5zM43.1 84.7h3.6v0.9h-3.6zM47.4 84.7h1.3v0.9h-1.3z" fill="#b0b0b0" opacity="0.40"/><path d="M49.5 84.7h1.5v0.9h-1.5zM51.7 84.7h2.4v0.9h-2.4zM54.9 84.7h3.2v0.9h-3.2z" fill="#6a9955" opacity="0.40"/><path d="M16 87.4h3.4v0.9h-3.4zM20.1 87.4h1.3v0.9h-1.3zM22.1 87.4h2.7v0.9h-2.7z" fill="#c8c8c8" opacity="0.40"/><path d="M25.6 87.4h1.1v0.9h-1.1zM27.5 87.4h1.3v0.9h-1.3zM29.5 87.4h1.9v0.9h-1.9z" fill="#d4d4d4" opacity="0.40"/><path d="M32.2 87.4h2.3v0.9h-2.3z" fill="#ce9178" opacity="0.40"/><path d="M36.3 87.4h1.6v0.9h-1.6zM38.6 87.4h1.8v0.9h-1.8zM41.1 87.4h2.5v0.9h-2.5zM44.3 87.4h0.5v0.9h-0.5z" fill="#b0b0b0" opacity="0.40"/><path d="M45.6 87.4h3.1v0.9h-3.1zM49.4 87.4h3.6v0.9h-3.6zM53.8 87.4h0.5v0.9h-0.5z" fill="#dcdcaa" opacity="0.40"/><path d="M55 87.4h3.7v0.9h-3.7zM59.4 87.4h1.5v0.9h-1.5z" fill="#b0b0b0" opacity="0.40"/><path d="M61.7 87.4h1.4v0.9h-1.4zM63.7 87.4h2.3v0.9h-2.3zM66.8 87.4h1.2v0.9h-1.2zM68.7 87.4h0.9v0.9h-0.9z" fill="#d4d4d4" opacity="0.40"/><path d="M70.4 87.4h3.4v0.9h-3.4z" fill="#d4d4d4" opacity="0.40"/><path d="M75 87.4h3.8v0.9h-3.8z" fill="#6a9955" opacity="0.40"/><path d="M16 90.1h1.7v0.9h-1.7zM18.4 90.1h3.9v0.9h-3.9zM22.9 90.1h2.2v0.9h-2.2zM25.8 90.1h2.5v0.9h-2.5z" fill="#c8c8c8" opacity="0.40"/><path d="M29.5 90.1h1.5v0.9h-1.5zM31.7 90.1h2.3v0.9h-2.3zM34.7 90.1h2.5v0.9h-2.5zM37.9 90.1h2v0.9h-2zM40.7 90.1h1.6v0.9h-1.6z" fill="#dcdcaa" opacity="0.40"/><path d="M22 92.8h2.3v0.9h-2.3zM25 92.8h1.1v0.9h-1.1zM26.8 92.8h1.9v0.9h-1.9z" fill="#c8c8c8" opacity="0.40"/><path d="M29.5 92.8h3.9v0.9h-3.9zM34.1 92.8h1.3v0.9h-1.3zM36.1 92.8h3.2v0.9h-3.2z" fill="#b0b0b0" opacity="0.40"/><path d="M40.2 92.8h1.3v0.9h-1.3zM42.1 92.8h1.8v0.9h-1.8zM44.6 92.8h1v0.9h-1z" fill="#ce9178" opacity="0.40"/><path d="M46.5 92.8h3.5v0.9h-3.5zM50.7 92.8h0.8v0.9h-0.8z" fill="#6a9955" opacity="0.40"/><path d="M52.3 92.8h2.2v0.9h-2.2zM55.2 92.8h2.6v0.9h-2.6zM58.5 92.8h2.5v0.9h-2.5zM61.8 92.8h1v0.9h-1z" fill="#d4d4d4" opacity="0.40"/><path d="M19 95.5h2.9v0.9h-2.9zM22.6 95.5h2.4v0.9h-2.4z" fill="#9cdcfe" opacity="0.40"/><path d="M25.8 95.5h1.2v0.9h-1.2zM27.7 95.5h2v0.9h-2z" fill="#dcdcaa" opacity="0.40"/><path d="M30.5 95.5h4v0.9h-4zM35.2 95.5h2.3v0.9h-2.3z" fill="#d4d4d4" opacity="0.40"/><path d="M39.3 95.5h2.6v0.9h-2.6zM42.6 95.5h1.7v0.9h-1.7zM45 95.5h1.3v0.9h-1.3zM47 95.5h1.5v0.9h-1.5z" fill="#9cdcfe" opacity="0.40"/><path d="M49.9 95.5h3.6v0.9h-3.6z" fill="#dcdcaa" opacity="0.40"/><path d="M54.3 95.5h3.3v0.9h-3.3zM58.2 95.5h1.9v0.9h-1.9zM60.8 95.5h2.5v0.9h-2.5z" fill="#b0b0b0" opacity="0.40"/><path d="M65 95.5h4v0.9h-4zM69.7 95.5h1.1v0.9h-1.1z" fill="#9cdcfe" opacity="0.40"/><path d="M72.6 95.5h2.5v0.9h-2.5zM75.8 95.5h1.7v0.9h-1.7zM78.3 95.5h2.3v0.9h-2.3z" fill="#dcdcaa" opacity="0.40"/><path d="M82 95.5h3v0.9h-3zM85.6 95.5h2.6v0.9h-2.6zM89 95.5h3.2v0.9h-3.2z" fill="#d4d4d4" opacity="0.40"/><path d="M93 95.5h3.1v0.9h-3.1z" fill="#d4d4d4" opacity="0.40"/><path d="M22 98.2h3.9v0.9h-3.9z" fill="#d4d4d4" opacity="0.40"/><path d="M27.3 98.2h1.2v0.9h-1.2zM29.2 98.2h3.2v0.9h-3.2zM33.2 98.2h1.8v0.9h-1.8zM35.6 98.2h1.5v0.9h-1.5zM37.8 98.2h1.3v0.9h-1.3z" fill="#9cdcfe" opacity="0.40"/><path d="M40.3 98.2h3v0.9h-3zM44.1 98.2h1.8v0.9h-1.8zM46.6 98.2h1.7v0.9h-1.7zM49 98.2h1.9v0.9h-1.9zM51.6 98.2h1v0.9h-1z" fill="#b0b0b0" opacity="0.40"/><path d="M53.4 98.2h1v0.9h-1zM55.1 98.2h2.1v0.9h-2.1z" fill="#c8c8c8" opacity="0.40"/><path d="M58.9 98.2h1.7v0.9h-1.7zM61.4 98.2h3.9v0.9h-3.9zM66 98.2h1.9v0.9h-1.9zM68.6 98.2h2.1v0.9h-2.1zM71.4 98.2h1v0.9h-1z" fill="#d4d4d4" opacity="0.40"/><path d="M73.6 98.2h1.8v0.9h-1.8zM76.1 98.2h3v0.9h-3zM79.8 98.2h1v0.9h-1z" fill="#c8c8c8" opacity="0.40"/><path d="M81.6 98.2h1.8v0.9h-1.8zM84.1 98.2h1.3v0.9h-1.3zM86 98.2h2.2v0.9h-2.2z" fill="#ce9178" opacity="0.40"/><rect x="124.00" y="24.00" width="58.60" height="78.80" fill="#2d2d2d"/><path d="M126 26h1.1v0.9h-1.1zM128 26h2.5v0.9h-2.5zM131.4 26h2.2v0.9h-2.2z" fill="#cccccc" opacity="0.45"/><path d="M126 28.5h3.9v0.8h-3.9zM130.8 28.5h3.6v0.8h-3.6zM135.4 28.5h0.6v0.8h-0.6z" fill="#cccccc" opacity="0.40"/><rect x="127.00" y="32.50" width="2.50" height="2.50" fill="#dddddd" opacity="0.45"/><rect x="133.00" y="32.50" width="2.50" height="2.50" fill="#dddddd" opacity="0.45"/><rect x="139.00" y="32.50" width="2.50" height="2.50" fill="#dddddd" opacity="0.45"/><rect x="146.00" y="32.50" width="2.50" height="2.50" fill="#dddddd" opacity="0.45"/><rect x="129.00" y="38.00" width="2.20" height="2.20" fill="#eeeeee" opacity="0.65"/><path d="M133 38.6h4.6v0.9h-4.6zM138.5 38.6h5.4v0.9h-5.4zM144.8 38.6h2.9v0.9h-2.9zM148.6 38.6h2.6v0.9h-2.6zM152.2 38.6h4.4v0.9h-4.4z" fill="#dddddd" opacity="0.40"/><rect x="129.00" y="43.00" width="2.20" height="2.20" fill="#eeeeee" opacity="0.65"/><path d="M133 43.6h4.6v0.9h-4.6zM138.5 43.6h4.2v0.9h-4.2zM143.6 43.6h1.2v0.9h-1.2zM145.8 43.6h4.2v0.9h-4.2z" fill="#dddddd" opacity="0.40"/><rect x="130.00" y="48.30" width="2.20" height="2.20" fill="#eeeeee" opacity="0.65"/><path d="M133 48.9h4.1v0.9h-4.1zM138 48.9h4.7v0.9h-4.7zM143.6 48.9h5.1v0.9h-5.1zM149.6 48.9h1.7v0.9h-1.7zM152.2 48.9h3.6v0.9h-3.6zM156.7 48.9h2.9v0.9h-2.9z" fill="#dddddd" opacity="0.40"/><rect x="130.00" y="53.00" width="2.20" height="2.20" fill="#eeeeee" opacity="0.65"/><path d="M133 53.6h5v0.9h-5zM138.9 53.6h5.1v0.9h-5.1zM145 53.6h3.9v0.9h-3.9zM149.8 53.6h5.5v0.9h-5.5zM156.1 53.6h2.7v0.9h-2.7z" fill="#dddddd" opacity="0.40"/><rect x="130.00" y="57.50" width="2.20" height="2.20" fill="#eeeeee" opacity="0.65"/><path d="M133 58.1h2.1v0.9h-2.1zM136 58.1h1.2v0.9h-1.2zM138.1 58.1h1.7v0.9h-1.7zM140.7 58.1h2.8v0.9h-2.8zM144.4 58.1h1.5v0.9h-1.5zM146.8 58.1h5.2v0.9h-5.2zM152.9 58.1h3.8v0.9h-3.8z" fill="#dddddd" opacity="0.40"/><rect x="130.00" y="62.50" width="2.20" height="2.20" fill="#eeeeee" opacity="0.65"/><path d="M133 63.1h4.1v0.9h-4.1zM138 63.1h4.4v0.9h-4.4zM143.3 63.1h3.4v0.9h-3.4zM147.7 63.1h1v0.9h-1zM149.6 63.1h5v0.9h-5zM155.5 63.1h0.7v0.9h-0.7z" fill="#dddddd" opacity="0.40"/><rect x="130.00" y="67.00" width="2.20" height="2.20" fill="#eeeeee" opacity="0.65"/><path d="M133 67.6h3.7v0.9h-3.7zM137.6 67.6h4.3v0.9h-4.3zM142.8 67.6h1.3v0.9h-1.3zM145 67.6h4.7v0.9h-4.7zM150.6 67.6h2.3v0.9h-2.3zM153.7 67.6h0.8v0.9h-0.8z" fill="#dddddd" opacity="0.40"/><rect x="130.00" y="71.50" width="2.20" height="2.20" fill="#eeeeee" opacity="0.65"/><path d="M133 72.1h4.6v0.9h-4.6zM138.5 72.1h2v0.9h-2zM141.5 72.1h4.7v0.9h-4.7zM147.1 72.1h4.4v0.9h-4.4z" fill="#dddddd" opacity="0.40"/><rect x="130.00" y="76.50" width="2.20" height="2.20" fill="#eeeeee" opacity="0.65"/><path d="M133 77.1h2.9v0.9h-2.9zM136.8 77.1h3.4v0.9h-3.4zM141.1 77.1h4.4v0.9h-4.4zM146.4 77.1h4.8v0.9h-4.8zM152.2 77.1h2.3v0.9h-2.3z" fill="#dddddd" opacity="0.40"/><rect x="125.00" y="99.50" width="20.00" height="1.00" fill="#bbbbbb" opacity="0.40"/><rect x="146.00" y="76.00" width="36.60" height="26.80" fill="#0a0608"/><rect x="160.00" y="76.00" width="23.00" height="14.00" fill="#7a2a5a" opacity="0.85"/><rect x="170.00" y="76.00" width="13.00" height="10.00" fill="#b0407a" opacity="0.60"/><ellipse cx="163" cy="88" rx="4" ry="5" fill="#2a1a18"/><ellipse cx="163" cy="89" rx="2.6" ry="3.2" fill="#6a4535"/><rect x="175.00" y="91.00" width="8.00" height="4.00" fill="#dddddd" opacity="0.60"/></svg></div><div class="t1">Baatarbileg Erkhembaya-CAI NatLPr-A1</div><div class="t2">CAI_NatLPr-Assignment_1 - Sommer 2025</div><svg class="av" viewBox="0 0 7 6" width="7" height="6"><path d="M4.2 0.3 L6.3 1.6 L5.8 2.6 L6.4 3.2 L5 5 L4.2 4.2 Z" fill="#b9b9b9" opacity="0.75"/><ellipse cx="2.5" cy="3.9" rx="2.3" ry="1.2" transform="rotate(-28 2.5 3.9)" fill="#55803a" opacity="0.9"/></svg><div class="avt">vatar</div><div class="t3">Gokul Srinivasagan</div></div>
<div class="card" style="left:739.4px;top:253.1px"><div class="th"><svg class="ths" width="182.6" height="102.8" viewBox="0 0 182.6 102.8" preserveAspectRatio="none"><rect x="0.00" y="0.00" width="182.60" height="102.80" fill="#000000"/><rect x="0.00" y="0.00" width="90.50" height="97.00" fill="#1e1e1e"/><rect x="0.00" y="0.00" width="90.50" height="3.20" fill="#191919"/><path d="M2 1.5h3.8v0.6h-3.8zM7.8 1.5h9.7v0.6h-9.7zM19.5 1.5h3v0.6h-3zM24.5 1.5h7.6v0.6h-7.6zM34.2 1.5h2.7v0.6h-2.7zM38.8 1.5h4v0.6h-4zM44.8 1.5h10v0.6h-10zM56.8 1.5h3.7v0.6h-3.7zM62.5 1.5h7.1v0.6h-7.1zM71.6 1.5h5.7v0.6h-5.7zM79.3 1.5h2.7v0.6h-2.7z" fill="#aaaaaa" opacity="0.30"/><path d="M5 5.5h3.5v0.8h-3.5zM9.4 5.5h2v0.8h-2zM12.2 5.5h5.2v0.8h-5.2zM18.3 5.5h1.4v0.8h-1.4z" fill="#cccccc" opacity="0.40"/><path d="M5 8.8h6.3v0.6h-6.3zM12.3 8.8h4.2v0.6h-4.2zM17.5 8.8h6.7v0.6h-6.7zM25.2 8.8h8.1v0.6h-8.1zM34.3 8.8h13v0.6h-13zM48.3 8.8h7.8v0.6h-7.8zM57.1 8.8h5.1v0.6h-5.1zM63.2 8.8h6.6v0.6h-6.6zM70.8 8.8h13.9v0.6h-13.9zM85.7 8.8h4.3v0.6h-4.3z" fill="#aaaaaa" opacity="0.35"/><path d="M5 11.5h10.2v0.6h-10.2zM16.2 11.5h7.8v0.6h-7.8zM25 11.5h10.6v0.6h-10.6zM36.6 11.5h7.4v0.6h-7.4zM45 11.5h10.9v0.6h-10.9zM56.9 11.5h9v0.6h-9zM66.9 11.5h10.5v0.6h-10.5zM78.4 11.5h11.6v0.6h-11.6z" fill="#aaaaaa" opacity="0.30"/><rect x="0.00" y="3.20" width="2.50" height="94.00" fill="#181818"/><path d="M8 14.3h3.5v0.8h-3.5zM12.2 14.3h2v0.8h-2zM14.9 14.3h1.7v0.8h-1.7zM17.4 14.3h4.8v0.8h-4.8zM22.9 14.3h3.2v0.8h-3.2zM26.8 14.3h2.2v0.8h-2.2zM29.7 14.3h4.8v0.8h-4.8zM35.2 14.3h3.5v0.8h-3.5zM39.4 14.3h4.1v0.8h-4.1zM44.1 14.3h4.6v0.8h-4.6zM49.4 14.3h2.5v0.8h-2.5zM52.6 14.3h2.7v0.8h-2.7zM56.1 14.3h4.6v0.8h-4.6zM61.4 14.3h2v0.8h-2zM64 14.3h4.2v0.8h-4.2zM68.9 14.3h1.8v0.8h-1.8zM71.4 14.3h3.9v0.8h-3.9zM76.1 14.3h4v0.8h-4zM80.7 14.3h4.8v0.8h-4.8zM86.2 14.3h1.8v0.8h-1.8z" fill="#cccccc" opacity="0.35"/><path d="M8 16.3h3.3v0.8h-3.3zM12 16.3h2.2v0.8h-2.2zM14.9 16.3h2v0.8h-2zM17.6 16.3h3.4v0.8h-3.4zM21.6 16.3h3.3v0.8h-3.3zM25.6 16.3h1.7v0.8h-1.7zM28.1 16.3h4.7v0.8h-4.7zM33.4 16.3h3.3v0.8h-3.3zM37.4 16.3h4v0.8h-4zM42.1 16.3h2.3v0.8h-2.3zM45 16.3h2.4v0.8h-2.4zM48.1 16.3h1.5v0.8h-1.5zM50.3 16.3h2.7v0.8h-2.7zM53.7 16.3h2.4v0.8h-2.4zM56.9 16.3h3v0.8h-3zM60.5 16.3h2.8v0.8h-2.8zM64.1 16.3h4.4v0.8h-4.4zM69.2 16.3h4.6v0.8h-4.6zM74.5 16.3h1.5v0.8h-1.5z" fill="#cccccc" opacity="0.35"/><rect x="8.00" y="19.00" width="80.00" height="0.30" fill="#555555"/><rect x="8.00" y="24.80" width="82.00" height="0.50" fill="#6a3535" opacity="0.80"/><path d="M15 25h1.6v0.9h-1.6zM17.3 25h3.3v0.9h-3.3zM21.3 25h1.9v0.9h-1.9zM23.9 25h1v0.9h-1zM25.6 25h1.7v0.9h-1.7z" fill="#9cdcfe" opacity="0.40"/><path d="M28.2 25h2.7v0.9h-2.7zM31.6 25h3.4v0.9h-3.4z" fill="#6a9955" opacity="0.40"/><path d="M35.7 25h2.3v0.9h-2.3zM38.8 25h1.5v0.9h-1.5z" fill="#569cd6" opacity="0.40"/><path d="M41.1 25h0.4v0.9h-0.4z" fill="#d4d4d4" opacity="0.40"/><path d="M18 29.6h3.1v0.9h-3.1zM21.8 29.6h3.9v0.9h-3.9zM26.5 29.6h0.6v0.9h-0.6z" fill="#c8c8c8" opacity="0.40"/><path d="M12 36.5h1v0.9h-1zM13.7 36.5h3.5v0.9h-3.5zM17.9 36.5h1v0.9h-1z" fill="#d4d4d4" opacity="0.40"/><path d="M19.7 36.5h3.6v0.9h-3.6zM24 36.5h3.6v0.9h-3.6zM28.3 36.5h3.4v0.9h-3.4z" fill="#9cdcfe" opacity="0.40"/><path d="M33.1 36.5h1.2v0.9h-1.2z" fill="#6a9955" opacity="0.40"/><path d="M21 38.8h2.5v0.9h-2.5zM24.2 38.8h2v0.9h-2z" fill="#dcdcaa" opacity="0.40"/><path d="M27 38.8h1.3v0.9h-1.3z" fill="#ce9178" opacity="0.40"/><path d="M21 41.1h2.7v0.9h-2.7zM24.4 41.1h0.6v0.9h-0.6z" fill="#c8c8c8" opacity="0.40"/><path d="M25.8 41.1h1.6v0.9h-1.6zM28.1 41.1h2.3v0.9h-2.3zM31.1 41.1h1.3v0.9h-1.3zM33.2 41.1h0.7v0.9h-0.7z" fill="#9cdcfe" opacity="0.40"/><path d="M34.6 41.1h3.5v0.9h-3.5z" fill="#569cd6" opacity="0.40"/><path d="M21 43.4h2.5v0.9h-2.5zM24.2 43.4h3.1v0.9h-3.1zM28 43.4h1.6v0.9h-1.6zM30.3 43.4h1.7v0.9h-1.7zM32.7 43.4h2.1v0.9h-2.1z" fill="#569cd6" opacity="0.40"/><path d="M35.6 43.4h1v0.9h-1zM37.3 43.4h1.1v0.9h-1.1z" fill="#dcdcaa" opacity="0.40"/><path d="M18 45.7h2.9v0.9h-2.9zM21.6 45.7h1.2v0.9h-1.2zM23.5 45.7h2.3v0.9h-2.3zM26.5 45.7h3.2v0.9h-3.2zM30.4 45.7h1.4v0.9h-1.4z" fill="#dcdcaa" opacity="0.40"/><path d="M32.6 45.7h2.5v0.9h-2.5zM35.8 45.7h2.9v0.9h-2.9zM39.4 45.7h3.9v0.9h-3.9z" fill="#d4d4d4" opacity="0.40"/><path d="M18 48h2.1v0.9h-2.1zM20.8 48h1.4v0.9h-1.4z" fill="#c8c8c8" opacity="0.40"/><path d="M23 48h1.6v0.9h-1.6zM25.3 48h2.2v0.9h-2.2zM28.2 48h2.2v0.9h-2.2zM31.1 48h3.8v0.9h-3.8z" fill="#d4d4d4" opacity="0.40"/><path d="M36.1 48h2.1v0.9h-2.1z" fill="#d4d4d4" opacity="0.40"/><path d="M18 50.3h2.5v0.9h-2.5zM21.2 50.3h1.2v0.9h-1.2z" fill="#b0b0b0" opacity="0.40"/><path d="M24 50.3h3.2v0.9h-3.2zM27.9 50.3h0.9v0.9h-0.9z" fill="#c8c8c8" opacity="0.40"/><path d="M29.6 50.3h2.9v0.9h-2.9zM33.1 50.3h3.5v0.9h-3.5z" fill="#ce9178" opacity="0.40"/><path d="M38 50.3h0.7v0.9h-0.7z" fill="#d4d4d4" opacity="0.40"/><path d="M18 52.6h2.1v0.9h-2.1zM20.8 52.6h3.9v0.9h-3.9zM25.4 52.6h2.6v0.9h-2.6z" fill="#dcdcaa" opacity="0.40"/><path d="M28.8 52.6h1.7v0.9h-1.7zM31.2 52.6h3.4v0.9h-3.4zM35.3 52.6h2.6v0.9h-2.6zM38.6 52.6h1.4v0.9h-1.4z" fill="#dcdcaa" opacity="0.40"/><path d="M40.8 52.6h3.4v0.9h-3.4zM44.9 52.6h1v0.9h-1z" fill="#ce9178" opacity="0.40"/><path d="M21 54.9h1.1v0.9h-1.1zM22.8 54.9h1.6v0.9h-1.6zM25 54.9h1.8v0.9h-1.8zM27.5 54.9h1.3v0.9h-1.3zM29.5 54.9h2.4v0.9h-2.4z" fill="#6a9955" opacity="0.40"/><path d="M33.4 54.9h1.3v0.9h-1.3zM35.4 54.9h2.8v0.9h-2.8zM38.9 54.9h0.6v0.9h-0.6z" fill="#569cd6" opacity="0.40"/><path d="M40.4 54.9h3.4v0.9h-3.4zM44.4 54.9h2.8v0.9h-2.8z" fill="#d4d4d4" opacity="0.40"/><path d="M12 61.8h3.4v0.9h-3.4zM16.1 61.8h1.7v0.9h-1.7zM18.4 61.8h3.2v0.9h-3.2zM22.4 61.8h0.6v0.9h-0.6z" fill="#569cd6" opacity="0.40"/><path d="M23.8 61.8h3.7v0.9h-3.7z" fill="#ce9178" opacity="0.40"/><path d="M28.3 61.8h1.5v0.9h-1.5zM30.5 61.8h1.8v0.9h-1.8zM32.9 61.8h2.2v0.9h-2.2z" fill="#d4d4d4" opacity="0.40"/><path d="M12 64.1h2v0.9h-2zM14.7 64.1h1.2v0.9h-1.2z" fill="#6a9955" opacity="0.40"/><path d="M16.7 64.1h2.7v0.9h-2.7zM20.1 64.1h3.2v0.9h-3.2zM24 64.1h3.5v0.9h-3.5zM28.2 64.1h1.4v0.9h-1.4z" fill="#9cdcfe" opacity="0.40"/><path d="M15 66.4h3.2v0.9h-3.2zM18.9 66.4h1.2v0.9h-1.2zM20.8 66.4h1.4v0.9h-1.4z" fill="#569cd6" opacity="0.40"/><path d="M24.1 66.4h2.2v0.9h-2.2zM27 66.4h1.5v0.9h-1.5z" fill="#dcdcaa" opacity="0.40"/><path d="M30.3 66.4h2.8v0.9h-2.8z" fill="#c8c8c8" opacity="0.40"/><path d="M34.8 66.4h2.3v0.9h-2.3z" fill="#d4d4d4" opacity="0.40"/><path d="M18 68.7h3.6v0.9h-3.6zM22.3 68.7h3.2v0.9h-3.2zM26.2 68.7h3.3v0.9h-3.3zM30.2 68.7h1.6v0.9h-1.6z" fill="#c8c8c8" opacity="0.40"/><path d="M32.6 68.7h3.5v0.9h-3.5zM36.8 68.7h1.7v0.9h-1.7z" fill="#c8c8c8" opacity="0.40"/><path d="M18 73.3h3.3v0.9h-3.3zM22 73.3h3.5v0.9h-3.5zM26.2 73.3h1.1v0.9h-1.1z" fill="#d4d4d4" opacity="0.40"/><path d="M28.1 73.3h1.1v0.9h-1.1zM29.8 73.3h2.6v0.9h-2.6z" fill="#d4d4d4" opacity="0.40"/><path d="M33.2 73.3h2v0.9h-2zM36 73.3h3.1v0.9h-3.1zM39.8 73.3h1.9v0.9h-1.9z" fill="#d4d4d4" opacity="0.40"/><path d="M12 77.9h3.3v0.9h-3.3zM16 77.9h3.5v0.9h-3.5z" fill="#6a9955" opacity="0.40"/><path d="M20.7 77.9h3.9v0.9h-3.9zM25.3 77.9h1.3v0.9h-1.3zM27.4 77.9h2.6v0.9h-2.6z" fill="#569cd6" opacity="0.40"/><path d="M30.7 77.9h3.1v0.9h-3.1z" fill="#569cd6" opacity="0.40"/><path d="M35 77.9h1.2v0.9h-1.2z" fill="#d4d4d4" opacity="0.40"/><path d="M12 80.2h2.4v0.9h-2.4zM15.1 80.2h1.7v0.9h-1.7z" fill="#dcdcaa" opacity="0.40"/><path d="M17.7 80.2h2.1v0.9h-2.1zM20.5 80.2h2.9v0.9h-2.9zM24.1 80.2h1.1v0.9h-1.1zM25.9 80.2h1.4v0.9h-1.4z" fill="#d4d4d4" opacity="0.40"/><path d="M18 82.5h2.1v0.9h-2.1zM20.8 82.5h2.1v0.9h-2.1zM23.6 82.5h1.4v0.9h-1.4z" fill="#b0b0b0" opacity="0.40"/><path d="M18 84.8h2.8v0.9h-2.8zM21.5 84.8h1.8v0.9h-1.8zM23.9 84.8h3.5v0.9h-3.5zM28.2 84.8h1.5v0.9h-1.5z" fill="#d4d4d4" opacity="0.40"/><path d="M30.4 84.8h3v0.9h-3zM34.1 84.8h1.3v0.9h-1.3zM36.1 84.8h3.7v0.9h-3.7zM40.4 84.8h0.8v0.9h-0.8z" fill="#c8c8c8" opacity="0.40"/><path d="M12 89.4h2.1v0.9h-2.1zM14.8 89.4h2.7v0.9h-2.7zM18.2 89.4h1.6v0.9h-1.6zM20.5 89.4h1.1v0.9h-1.1z" fill="#c8c8c8" opacity="0.40"/><path d="M22.4 89.4h2.5v0.9h-2.5z" fill="#6a9955" opacity="0.40"/><path d="M18 91.7h3.8v0.9h-3.8zM22.5 91.7h3.4v0.9h-3.4zM26.6 91.7h1.4v0.9h-1.4z" fill="#d4d4d4" opacity="0.40"/><rect x="0.00" y="92.60" width="90.50" height="1.80" fill="#161616"/><rect x="0.00" y="92.60" width="3.00" height="1.80" fill="#3c7ad0"/></svg></div><div class="t1">Dominik Lohwasser-CAI NatLPr-A1</div><div class="t2">CAI_NatLPr-Assignment_1 - Sommer 2025</div><svg class="av" viewBox="0 0 7 6" width="7" height="6"><path d="M4.2 0.3 L6.3 1.6 L5.8 2.6 L6.4 3.2 L5 5 L4.2 4.2 Z" fill="#b9b9b9" opacity="0.75"/><ellipse cx="2.5" cy="3.9" rx="2.3" ry="1.2" transform="rotate(-28 2.5 3.9)" fill="#55803a" opacity="0.9"/></svg><div class="avt">vatar</div><div class="t3">Gokul Srinivasagan</div></div>
<div class="card" style="left:161.3px;top:417.95px"><div class="th"><svg class="ths" width="182.6" height="102.8" viewBox="0 0 182.6 102.8" preserveAspectRatio="none"><rect x="0.00" y="0.00" width="182.60" height="102.80" fill="#1e1e1e"/><rect x="0.00" y="0.00" width="182.60" height="3.50" fill="#1a1a1a"/><path d="M6 1.7h3.4v0.8h-3.4zM11.4 1.7h3.1v0.8h-3.1zM16.5 1.7h2.4v0.8h-2.4zM20.9 1.7h4.6v0.8h-4.6zM27.5 1.7h2v0.8h-2zM31.5 1.7h3.5v0.8h-3.5zM37.1 1.7h4.7v0.8h-4.7zM43.7 1.7h2.2v0.8h-2.2z" fill="#cccccc" opacity="0.40"/><rect x="148.00" y="1.50" width="25.00" height="1.40" fill="#cccccc" opacity="0.35"/><rect x="0.00" y="3.50" width="7.00" height="92.00" fill="#181818"/><circle cx="3.8" cy="6.5" r="1.5" fill="#9a9a9a" opacity="0.45"/><circle cx="3.8" cy="14.0" r="1.5" fill="#9a9a9a" opacity="0.45"/><circle cx="3.8" cy="21.0" r="1.5" fill="#9a9a9a" opacity="0.45"/><circle cx="3.8" cy="28.0" r="1.5" fill="#9a9a9a" opacity="0.45"/><circle cx="3.8" cy="35.0" r="1.5" fill="#9a9a9a" opacity="0.45"/><circle cx="3.8" cy="49.0" r="1.5" fill="#9a9a9a" opacity="0.45"/><circle cx="3.8" cy="83.0" r="1.5" fill="#9a9a9a" opacity="0.45"/><circle cx="3.8" cy="89.0" r="1.5" fill="#9a9a9a" opacity="0.45"/><rect x="7.00" y="3.50" width="25.00" height="92.00" fill="#1b1b1b"/><rect x="14.00" y="6.90" width="1.20" height="1.20" fill="#cccccc" opacity="0.35"/><path d="M16 7h4.5v0.9h-4.5zM21.4 7h4.6v0.9h-4.6zM26.9 7h1.8v0.9h-1.8zM29.7 7h3.7v0.9h-3.7z" fill="#d0d0d0" opacity="0.35"/><rect x="14.00" y="10.05" width="1.20" height="1.20" fill="#cccccc" opacity="0.35"/><path d="M16 10.2h2.2v0.9h-2.2zM19.1 10.2h1.6v0.9h-1.6zM21.5 10.2h3.5v0.9h-3.5z" fill="#d0d0d0" opacity="0.35"/><rect x="14.00" y="13.20" width="1.20" height="1.20" fill="#cccccc" opacity="0.35"/><path d="M16 13.3h4.4v0.9h-4.4zM21.3 13.3h3.3v0.9h-3.3z" fill="#d0d0d0" opacity="0.35"/><rect x="10.00" y="16.35" width="1.20" height="1.20" fill="#cccccc" opacity="0.35"/><path d="M12 16.4h2v0.9h-2zM14.9 16.4h2.1v0.9h-2.1zM17.9 16.4h5v0.9h-5zM23.8 16.4h5.4v0.9h-5.4z" fill="#d0d0d0" opacity="0.35"/><rect x="12.00" y="19.50" width="1.20" height="1.20" fill="#cccccc" opacity="0.35"/><path d="M14 19.6h3v0.9h-3zM17.9 19.6h2.7v0.9h-2.7zM21.5 19.6h1.2v0.9h-1.2zM23.6 19.6h4.5v0.9h-4.5zM29.1 19.6h1v0.9h-1z" fill="#d0d0d0" opacity="0.35"/><rect x="14.00" y="22.65" width="1.20" height="1.20" fill="#cccccc" opacity="0.35"/><path d="M16 22.8h1.7v0.9h-1.7zM18.6 22.8h2.2v0.9h-2.2zM21.7 22.8h4.7v0.9h-4.7zM27.3 22.8h5.2v0.9h-5.2z" fill="#d0d0d0" opacity="0.35"/><rect x="14.00" y="25.80" width="1.20" height="1.20" fill="#cccccc" opacity="0.35"/><path d="M16 25.9h4.8v0.9h-4.8zM21.7 25.9h2v0.9h-2z" fill="#d0d0d0" opacity="0.35"/><rect x="12.00" y="28.95" width="1.20" height="1.20" fill="#cccccc" opacity="0.35"/><path d="M14 29.1h5.5v0.9h-5.5zM20.4 29.1h1.7v0.9h-1.7zM22.9 29.1h2.4v0.9h-2.4z" fill="#d0d0d0" opacity="0.35"/><rect x="14.00" y="32.10" width="1.20" height="1.20" fill="#cccccc" opacity="0.35"/><path d="M16 32.2h3.5v0.9h-3.5zM20.4 32.2h4.5v0.9h-4.5z" fill="#d0d0d0" opacity="0.35"/><rect x="14.00" y="35.25" width="1.20" height="1.20" fill="#cccccc" opacity="0.35"/><path d="M16 35.3h2v0.9h-2zM18.9 35.3h4.8v0.9h-4.8z" fill="#d0d0d0" opacity="0.35"/><rect x="12.00" y="38.40" width="1.20" height="1.20" fill="#cccccc" opacity="0.35"/><path d="M14 38.5h4v0.9h-4zM18.9 38.5h4.8v0.9h-4.8z" fill="#d0d0d0" opacity="0.35"/><rect x="10.00" y="41.55" width="1.20" height="1.20" fill="#cccccc" opacity="0.35"/><path d="M12 41.6h4.4v0.9h-4.4zM17.3 41.6h5.3v0.9h-5.3z" fill="#d0d0d0" opacity="0.35"/><rect x="12.00" y="44.70" width="1.20" height="1.20" fill="#cccccc" opacity="0.35"/><path d="M14 44.8h3.9v0.9h-3.9zM18.8 44.8h1.2v0.9h-1.2zM20.8 44.8h5.3v0.9h-5.3zM27.1 44.8h2.3v0.9h-2.3z" fill="#d0d0d0" opacity="0.35"/><rect x="12.00" y="47.85" width="1.20" height="1.20" fill="#cccccc" opacity="0.35"/><path d="M14 47.9h3.5v0.9h-3.5zM18.4 47.9h4.7v0.9h-4.7z" fill="#d0d0d0" opacity="0.35"/><rect x="14.00" y="51.00" width="1.20" height="1.20" fill="#cccccc" opacity="0.35"/><path d="M16 51.1h4.9v0.9h-4.9zM21.8 51.1h1.4v0.9h-1.4zM24.1 51.1h2.7v0.9h-2.7zM27.7 51.1h2.2v0.9h-2.2z" fill="#d0d0d0" opacity="0.35"/><rect x="14.00" y="54.15" width="1.20" height="1.20" fill="#cccccc" opacity="0.35"/><path d="M16 54.2h2.1v0.9h-2.1zM19 54.2h2v0.9h-2zM21.8 54.2h5.7v0.9h-5.7z" fill="#d0d0d0" opacity="0.35"/><rect x="10.00" y="57.30" width="1.20" height="1.20" fill="#cccccc" opacity="0.35"/><path d="M12 57.4h4v0.9h-4zM16.9 57.4h1v0.9h-1zM18.8 57.4h1.6v0.9h-1.6zM21.3 57.4h2.1v0.9h-2.1z" fill="#d0d0d0" opacity="0.35"/><rect x="12.00" y="60.45" width="1.20" height="1.20" fill="#cccccc" opacity="0.35"/><path d="M14 60.5h1.4v0.9h-1.4zM16.3 60.5h4.1v0.9h-4.1zM21.4 60.5h1.5v0.9h-1.5zM23.8 60.5h1.4v0.9h-1.4z" fill="#d0d0d0" opacity="0.35"/><rect x="10.00" y="63.60" width="1.20" height="1.20" fill="#cccccc" opacity="0.35"/><path d="M12 63.7h3.8v0.9h-3.8zM16.7 63.7h3.1v0.9h-3.1zM20.7 63.7h2.7v0.9h-2.7z" fill="#d0d0d0" opacity="0.35"/><rect x="12.00" y="66.75" width="1.20" height="1.20" fill="#cccccc" opacity="0.35"/><path d="M14 66.8h1.3v0.9h-1.3zM16.2 66.8h4.2v0.9h-4.2zM21.4 66.8h1.5v0.9h-1.5zM23.7 66.8h3.9v0.9h-3.9z" fill="#d0d0d0" opacity="0.35"/><rect x="14.00" y="69.90" width="1.20" height="1.20" fill="#cccccc" opacity="0.35"/><path d="M16 70h5.3v0.9h-5.3zM22.2 70h2.8v0.9h-2.8zM25.9 70h1.8v0.9h-1.8z" fill="#d0d0d0" opacity="0.35"/><rect x="12.00" y="73.05" width="1.20" height="1.20" fill="#cccccc" opacity="0.35"/><path d="M14 73.1h5.4v0.9h-5.4zM20.3 73.1h1.1v0.9h-1.1zM22.3 73.1h5.7v0.9h-5.7z" fill="#d0d0d0" opacity="0.35"/><rect x="7.00" y="49.50" width="25.00" height="2.50" fill="#37373d"/><rect x="32.00" y="3.50" width="0.50" height="92.00" fill="#303030"/><path d="M34 7.3h6.6v0.9h-6.6zM42.6 7.3h5.6v0.9h-5.6zM50.3 7.3h5.2v0.9h-5.2zM57.5 7.3h5.5v0.9h-5.5zM65 7.3h4.5v0.9h-4.5zM71.4 7.3h8.5v0.9h-8.5zM82 7.3h7v0.9h-7z" fill="#bbbbbb" opacity="0.35"/><path d="M34 11.6h6.9v0.8h-6.9zM42.9 11.6h4.1v0.8h-4.1zM49.1 11.6h12v0.8h-12zM63.1 11.6h6.9v0.8h-6.9zM71.9 11.6h8.8v0.8h-8.8zM82.7 11.6h1.3v0.8h-1.3z" fill="#bbbbbb" opacity="0.30"/><path d="M34 15h13.6v0.8h-13.6zM49.6 15h11.5v0.8h-11.5zM63.1 15h7v0.8h-7zM72.1 15h5.2v0.8h-5.2zM79.2 15h8.2v0.8h-8.2zM89.4 15h4.6v0.8h-4.6z" fill="#bbbbbb" opacity="0.30"/><text x="37.3" y="27.9" font-family="Liberation Sans" font-size="6.1" fill="#dcdcdc" opacity="0.85">Assignmnet 2 (100 points)</text><rect x="37.50" y="34.20" width="28.00" height="1.20" fill="#dddddd" opacity="0.50"/><rect x="37.50" y="37.20" width="26.00" height="1.20" fill="#dddddd" opacity="0.50"/><rect x="37.50" y="40.30" width="10.00" height="1.20" fill="#dddddd" opacity="0.50"/><rect x="37.50" y="43.30" width="27.00" height="1.20" fill="#dddddd" opacity="0.50"/><text x="37.3" y="55" font-family="Liberation Sans" font-size="3.7" fill="#cccccc" opacity="0.75">SMS Spam Detection (100 points)</text><path d="M37.5 61.2h4.3v0.8h-4.3zM42.5 61.2h3.6v0.8h-3.6zM46.7 61.2h4.3v0.8h-4.3zM51.8 61.2h3.8v0.8h-3.8zM56.3 61.2h2.5v0.8h-2.5zM59.4 61.2h3.6v0.8h-3.6zM63.7 61.2h3.6v0.8h-3.6zM68.1 61.2h2.7v0.8h-2.7zM71.5 61.2h4.7v0.8h-4.7zM76.9 61.2h2.5v0.8h-2.5zM80.1 61.2h1.9v0.8h-1.9zM82.7 61.2h4.3v0.8h-4.3zM87.7 61.2h4.4v0.8h-4.4zM92.8 61.2h2.1v0.8h-2.1zM95.6 61.2h4.3v0.8h-4.3zM100.5 61.2h4.5v0.8h-4.5zM105.7 61.2h2.2v0.8h-2.2zM108.6 61.2h3.2v0.8h-3.2zM112.5 61.2h3.6v0.8h-3.6zM116.8 61.2h3.4v0.8h-3.4zM120.9 61.2h1.8v0.8h-1.8zM123.4 61.2h3.4v0.8h-3.4zM127.5 61.2h3.6v0.8h-3.6zM131.8 61.2h2.4v0.8h-2.4zM134.9 61.2h1.7v0.8h-1.7zM137.3 61.2h3.8v0.8h-3.8zM141.8 61.2h3.5v0.8h-3.5zM146 61.2h3.5v0.8h-3.5zM150.3 61.2h3v0.8h-3zM154 61.2h2.6v0.8h-2.6zM157.3 61.2h3.3v0.8h-3.3zM161.3 61.2h3.7v0.8h-3.7zM165.8 61.2h4.3v0.8h-4.3zM170.8 61.2h4.6v0.8h-4.6zM176 61.2h2.1v0.8h-2.1z" fill="#cccccc" opacity="0.35"/><path d="M37.5 63.8h1.7v0.8h-1.7zM39.9 63.8h2.3v0.8h-2.3zM42.9 63.8h2v0.8h-2zM45.6 63.8h1.8v0.8h-1.8zM48.1 63.8h3.2v0.8h-3.2zM52.1 63.8h1.7v0.8h-1.7zM54.5 63.8h4.6v0.8h-4.6zM59.8 63.8h4v0.8h-4zM64.5 63.8h3.9v0.8h-3.9zM69.1 63.8h1.6v0.8h-1.6zM71.4 63.8h2.4v0.8h-2.4zM74.5 63.8h3.1v0.8h-3.1zM78.3 63.8h2.8v0.8h-2.8zM81.8 63.8h4.9v0.8h-4.9zM87.3 63.8h3.5v0.8h-3.5zM91.5 63.8h3.2v0.8h-3.2zM95.5 63.8h2.4v0.8h-2.4zM98.5 63.8h3.7v0.8h-3.7zM102.9 63.8h1.8v0.8h-1.8zM105.4 63.8h1.7v0.8h-1.7zM107.8 63.8h2.9v0.8h-2.9zM111.4 63.8h3.6v0.8h-3.6zM115.7 63.8h1.8v0.8h-1.8zM118.1 63.8h1.6v0.8h-1.6zM120.5 63.8h4.1v0.8h-4.1zM125.3 63.8h1.8v0.8h-1.8zM127.8 63.8h1.6v0.8h-1.6zM130.1 63.8h3.7v0.8h-3.7zM134.5 63.8h3.4v0.8h-3.4zM138.6 63.8h3.2v0.8h-3.2zM142.5 63.8h4v0.8h-4zM147.1 63.8h1.8v0.8h-1.8zM149.6 63.8h1.8v0.8h-1.8zM152.1 63.8h2.6v0.8h-2.6zM155.4 63.8h3.1v0.8h-3.1zM159.2 63.8h3.1v0.8h-3.1zM163 63.8h2v0.8h-2zM165.7 63.8h2.9v0.8h-2.9zM169.3 63.8h3.2v0.8h-3.2zM173.1 63.8h2v0.8h-2zM175.8 63.8h4.6v0.8h-4.6zM181.2 63.8h0.9v0.8h-0.9z" fill="#cccccc" opacity="0.35"/><path d="M37.5 66.7h2v0.8h-2zM40.2 66.7h4.9v0.8h-4.9zM45.7 66.7h1.9v0.8h-1.9zM48.3 66.7h1.7v0.8h-1.7zM50.7 66.7h1.8v0.8h-1.8zM53.2 66.7h3.8v0.8h-3.8zM57.6 66.7h1.8v0.8h-1.8zM60.1 66.7h1.9v0.8h-1.9zM62.7 66.7h1.6v0.8h-1.6zM65 66.7h3.7v0.8h-3.7zM69.4 66.7h2.2v0.8h-2.2zM72.3 66.7h4.6v0.8h-4.6zM77.5 66.7h1.8v0.8h-1.8zM80 66.7h1.5v0.8h-1.5zM82.2 66.7h4.2v0.8h-4.2zM87.1 66.7h3.9v0.8h-3.9zM91.7 66.7h1.6v0.8h-1.6zM93.9 66.7h2.4v0.8h-2.4zM97 66.7h3.6v0.8h-3.6zM101.4 66.7h4.9v0.8h-4.9zM106.9 66.7h3.3v0.8h-3.3zM110.9 66.7h3v0.8h-3zM114.6 66.7h4.6v0.8h-4.6zM119.9 66.7h3.2v0.8h-3.2zM123.8 66.7h2.6v0.8h-2.6zM127.1 66.7h4.6v0.8h-4.6zM132.4 66.7h3.7v0.8h-3.7zM136.8 66.7h3.9v0.8h-3.9zM141.4 66.7h2v0.8h-2zM144.1 66.7h1.6v0.8h-1.6zM146.4 66.7h2.2v0.8h-2.2zM149.2 66.7h2.7v0.8h-2.7zM152.7 66.7h4.9v0.8h-4.9zM158.3 66.7h2.9v0.8h-2.9zM161.9 66.7h1.5v0.8h-1.5zM164.2 66.7h4.9v0.8h-4.9zM169.8 66.7h2.6v0.8h-2.6zM173 66.7h4v0.8h-4z" fill="#cccccc" opacity="0.35"/><path d="M37.5 69.3h3v0.8h-3zM41.2 69.3h3v0.8h-3zM44.9 69.3h2.6v0.8h-2.6zM48.2 69.3h3.5v0.8h-3.5zM52.4 69.3h4.6v0.8h-4.6zM57.7 69.3h4.6v0.8h-4.6zM63 69.3h3v0.8h-3zM66.7 69.3h1.8v0.8h-1.8zM69.2 69.3h2.6v0.8h-2.6zM72.4 69.3h3.1v0.8h-3.1zM76.3 69.3h4.7v0.8h-4.7zM81.7 69.3h3.1v0.8h-3.1zM85.5 69.3h2.8v0.8h-2.8zM89 69.3h2.7v0.8h-2.7zM92.4 69.3h1.7v0.8h-1.7zM94.8 69.3h1.8v0.8h-1.8zM97.3 69.3h2.6v0.8h-2.6zM100.6 69.3h1.6v0.8h-1.6zM102.9 69.3h2.2v0.8h-2.2zM105.9 69.3h2.8v0.8h-2.8zM109.3 69.3h4.6v0.8h-4.6zM114.7 69.3h4.8v0.8h-4.8zM120.2 69.3h1.8v0.8h-1.8zM122.7 69.3h4.9v0.8h-4.9zM128.3 69.3h4.9v0.8h-4.9zM133.9 69.3h3.6v0.8h-3.6zM138.2 69.3h4.8v0.8h-4.8zM143.7 69.3h3.8v0.8h-3.8zM148.2 69.3h2.8v0.8h-2.8zM151.8 69.3h3.9v0.8h-3.9zM156.4 69.3h4.2v0.8h-4.2zM161.3 69.3h1.8v0.8h-1.8zM163.8 69.3h3.8v0.8h-3.8zM168.3 69.3h3v0.8h-3zM172 69.3h0.8v0.8h-0.8z" fill="#cccccc" opacity="0.35"/><path d="M37.5 76.3h4.2v0.8h-4.2zM42.4 76.3h4.3v0.8h-4.3zM47.4 76.3h3.3v0.8h-3.3zM51.3 76.3h3.1v0.8h-3.1zM55.2 76.3h1.5v0.8h-1.5zM57.4 76.3h4.7v0.8h-4.7zM62.8 76.3h2.2v0.8h-2.2zM65.7 76.3h2.3v0.8h-2.3zM68.7 76.3h4.9v0.8h-4.9zM74.3 76.3h2.6v0.8h-2.6zM77.6 76.3h1.8v0.8h-1.8zM80.1 76.3h2.6v0.8h-2.6zM83.5 76.3h3.9v0.8h-3.9zM88.1 76.3h3.3v0.8h-3.3zM92.1 76.3h4.3v0.8h-4.3zM97.1 76.3h2.9v0.8h-2.9zM100.7 76.3h4.4v0.8h-4.4zM105.8 76.3h2.9v0.8h-2.9zM109.4 76.3h3.6v0.8h-3.6zM113.6 76.3h4.5v0.8h-4.5zM118.9 76.3h3.3v0.8h-3.3zM122.9 76.3h2.8v0.8h-2.8zM126.3 76.3h4.8v0.8h-4.8zM131.8 76.3h2.2v0.8h-2.2zM134.7 76.3h4.7v0.8h-4.7zM140.1 76.3h3.5v0.8h-3.5zM144.3 76.3h4.3v0.8h-4.3zM149.3 76.3h4.2v0.8h-4.2zM154.2 76.3h2.1v0.8h-2.1zM157.1 76.3h2.1v0.8h-2.1zM159.9 76.3h2.6v0.8h-2.6zM163.1 76.3h4.6v0.8h-4.6zM168.4 76.3h2.5v0.8h-2.5zM171.6 76.3h3.3v0.8h-3.3zM175.6 76.3h4.1v0.8h-4.1z" fill="#cccccc" opacity="0.35"/><path d="M37.5 79.2h4.9v0.8h-4.9zM43.1 79.2h1.8v0.8h-1.8zM45.7 79.2h2.5v0.8h-2.5zM48.8 79.2h3.3v0.8h-3.3zM52.9 79.2h3.2v0.8h-3.2zM56.7 79.2h5v0.8h-5zM62.4 79.2h2.1v0.8h-2.1zM65.2 79.2h2v0.8h-2zM68 79.2h3.9v0.8h-3.9zM72.5 79.2h4.1v0.8h-4.1zM77.3 79.2h1.7v0.8h-1.7zM79.7 79.2h2.5v0.8h-2.5zM82.9 79.2h2.7v0.8h-2.7zM86.3 79.2h3.5v0.8h-3.5zM90.5 79.2h3.4v0.8h-3.4zM94.6 79.2h4.8v0.8h-4.8zM100.1 79.2h4.2v0.8h-4.2zM105 79.2h3.1v0.8h-3.1zM108.8 79.2h2.7v0.8h-2.7zM112.2 79.2h4.1v0.8h-4.1zM117 79.2h2v0.8h-2zM119.7 79.2h3v0.8h-3zM123.3 79.2h3.3v0.8h-3.3zM127.3 79.2h4.4v0.8h-4.4zM132.5 79.2h3.5v0.8h-3.5zM136.7 79.2h1.5v0.8h-1.5zM138.9 79.2h3.4v0.8h-3.4zM143 79.2h1.7v0.8h-1.7zM145.4 79.2h4.2v0.8h-4.2zM150.3 79.2h2.7v0.8h-2.7zM153.8 79.2h2.8v0.8h-2.8zM157.3 79.2h2.8v0.8h-2.8zM160.8 79.2h4.3v0.8h-4.3zM165.8 79.2h4.6v0.8h-4.6zM171.1 79.2h3v0.8h-3zM174.8 79.2h2v0.8h-2z" fill="#cccccc" opacity="0.35"/><path d="M37.5 82.3h1.8v0.8h-1.8zM40 82.3h2.1v0.8h-2.1zM42.8 82.3h3.6v0.8h-3.6zM47.1 82.3h4.6v0.8h-4.6zM52.4 82.3h2.4v0.8h-2.4zM55.5 82.3h2.4v0.8h-2.4zM58.6 82.3h3.1v0.8h-3.1zM62.4 82.3h3.3v0.8h-3.3zM66.5 82.3h4.2v0.8h-4.2zM71.3 82.3h1.5v0.8h-1.5zM73.6 82.3h3.8v0.8h-3.8zM78.1 82.3h2.7v0.8h-2.7zM81.5 82.3h2.3v0.8h-2.3zM84.4 82.3h5v0.8h-5zM90.1 82.3h1.6v0.8h-1.6zM92.4 82.3h4v0.8h-4zM97.1 82.3h3.6v0.8h-3.6zM101.4 82.3h4.9v0.8h-4.9zM107 82.3h3.8v0.8h-3.8zM111.5 82.3h2.7v0.8h-2.7zM114.9 82.3h4v0.8h-4zM119.5 82.3h2.7v0.8h-2.7zM122.9 82.3h2.9v0.8h-2.9zM126.5 82.3h1.8v0.8h-1.8zM129 82.3h4.4v0.8h-4.4zM134 82.3h2.4v0.8h-2.4zM137.1 82.3h3.1v0.8h-3.1zM140.9 82.3h3.9v0.8h-3.9zM145.5 82.3h2.6v0.8h-2.6zM148.8 82.3h4.4v0.8h-4.4zM154 82.3h4.6v0.8h-4.6zM159.3 82.3h4v0.8h-4zM164 82.3h3.7v0.8h-3.7zM168.4 82.3h4.3v0.8h-4.3zM173.4 82.3h1v0.8h-1z" fill="#cccccc" opacity="0.35"/><path d="M37.5 88h4.1v0.8h-4.1zM42.3 88h4.6v0.8h-4.6zM47.6 88h3.3v0.8h-3.3zM51.6 88h4.4v0.8h-4.4zM56.7 88h1.6v0.8h-1.6zM59 88h5v0.8h-5zM64.7 88h2v0.8h-2zM67.4 88h3v0.8h-3zM71.1 88h4.1v0.8h-4.1zM75.9 88h4.4v0.8h-4.4zM81 88h3.8v0.8h-3.8zM85.5 88h3.7v0.8h-3.7zM89.9 88h3.3v0.8h-3.3zM93.9 88h3.2v0.8h-3.2zM97.8 88h2.4v0.8h-2.4zM101 88h2.8v0.8h-2.8zM104.5 88h4.2v0.8h-4.2zM109.4 88h4.5v0.8h-4.5zM114.5 88h3.4v0.8h-3.4zM118.6 88h5v0.8h-5zM124.3 88h4.1v0.8h-4.1zM129.1 88h3.8v0.8h-3.8zM133.6 88h3.1v0.8h-3.1zM137.4 88h4.8v0.8h-4.8zM142.8 88h1.9v0.8h-1.9zM145.4 88h4.5v0.8h-4.5zM150.6 88h2.2v0.8h-2.2zM153.5 88h4v0.8h-4zM158.2 88h2.4v0.8h-2.4zM161.3 88h2.5v0.8h-2.5zM164.6 88h1.5v0.8h-1.5zM166.8 88h3.8v0.8h-3.8zM171.3 88h3v0.8h-3zM175 88h1.3v0.8h-1.3z" fill="#cccccc" opacity="0.35"/><path d="M37.5 90.8h2.7v0.8h-2.7zM40.9 90.8h3.5v0.8h-3.5zM45.1 90.8h2.1v0.8h-2.1zM47.8 90.8h3.9v0.8h-3.9zM52.4 90.8h2v0.8h-2zM55.1 90.8h4.9v0.8h-4.9zM60.7 90.8h1.8v0.8h-1.8zM63.2 90.8h2.2v0.8h-2.2zM66.1 90.8h2.4v0.8h-2.4zM69.2 90.8h4.6v0.8h-4.6zM74.5 90.8h3v0.8h-3zM78.3 90.8h2.7v0.8h-2.7zM81.7 90.8h4.2v0.8h-4.2zM86.6 90.8h4.7v0.8h-4.7zM92 90.8h1.8v0.8h-1.8zM94.5 90.8h2.9v0.8h-2.9zM98.1 90.8h3v0.8h-3zM101.8 90.8h2.1v0.8h-2.1zM104.6 90.8h2.3v0.8h-2.3zM107.7 90.8h2v0.8h-2zM110.4 90.8h3.5v0.8h-3.5zM114.6 90.8h3v0.8h-3zM118.3 90.8h4v0.8h-4zM123 90.8h2.2v0.8h-2.2zM125.9 90.8h3.7v0.8h-3.7zM130.3 90.8h4v0.8h-4zM135 90.8h3.3v0.8h-3.3zM139 90.8h2.9v0.8h-2.9zM142.7 90.8h2.1v0.8h-2.1zM145.4 90.8h3.4v0.8h-3.4zM149.5 90.8h2.5v0.8h-2.5zM152.7 90.8h2.5v0.8h-2.5zM155.9 90.8h3v0.8h-3zM159.6 90.8h4.9v0.8h-4.9zM165.3 90.8h3v0.8h-3zM169 90.8h4.2v0.8h-4.2zM173.8 90.8h1.7v0.8h-1.7zM176.2 90.8h2.8v0.8h-2.8zM179.7 90.8h2.3v0.8h-2.3z" fill="#cccccc" opacity="0.35"/><rect x="0.00" y="93.50" width="182.60" height="2.50" fill="#1a1a1a"/><rect x="0.00" y="93.50" width="7.00" height="2.50" fill="#3c6fc0" opacity="0.80"/><path d="M9 94.2h4.3v1h-4.3zM14.2 94.2h3.1v1h-3.1zM18.2 94.2h2.8v1h-2.8z" fill="#bbbbbb" opacity="0.40"/><rect x="0.00" y="96.00" width="182.60" height="6.80" fill="#050505"/></svg></div><div class="t1" style="font-size:6.85px">Albert Didkovskyi-CAI NatLPr-A2</div><div class="t2">CAI_NatLPr-Assignment_2 - Sommer 2025</div><svg class="av" viewBox="0 0 7 6" width="7" height="6"><path d="M4.2 0.3 L6.3 1.6 L5.8 2.6 L6.4 3.2 L5 5 L4.2 4.2 Z" fill="#b9b9b9" opacity="0.75"/><ellipse cx="2.5" cy="3.9" rx="2.3" ry="1.2" transform="rotate(-28 2.5 3.9)" fill="#55803a" opacity="0.9"/></svg><div class="avt">vatar</div><div class="t3">Gokul Srinivasagan</div></div>
<div class="card" style="left:354.0px;top:417.95px"><div class="th"><svg class="ths" width="182.6" height="102.8" viewBox="0 0 182.6 102.8" preserveAspectRatio="none"><rect x="0.00" y="0.00" width="182.60" height="102.80" fill="#1f1f1f"/><rect x="0.00" y="0.00" width="182.60" height="6.50" fill="#1c1c1c"/><path d="M3 3.7h6.4v0.9h-6.4zM11.4 3.7h5.6v0.9h-5.6zM19 3.7h6.5v0.9h-6.5zM27.5 3.7h4.2v0.9h-4.2zM33.7 3.7h7.9v0.9h-7.9zM43.6 3.7h7.9v0.9h-7.9z" fill="#cccccc" opacity="0.40"/><rect x="90.00" y="3.70" width="18.00" height="0.90" fill="#cccccc" opacity="0.35"/><rect x="0.00" y="6.50" width="4.00" height="90.00" fill="#191919"/><path d="M8 7.8h4.3v0.9h-4.3zM13.2 7.8h1.8v0.9h-1.8zM15.9 7.8h3.6v0.9h-3.6zM20.4 7.8h2.6v0.9h-2.6zM23.9 7.8h2.1v0.9h-2.1z" fill="#cccccc" opacity="0.40"/><path d="M8 11.5h5.8v0.7h-5.8zM14.7 11.5h6v0.7h-6zM21.5 11.5h1.2v0.7h-1.2z" fill="#aaaaaa" opacity="0.35"/><path d="M8 14.3h12.6v0.8h-12.6zM22.6 14.3h10v0.8h-10zM34.6 14.3h7.8v0.8h-7.8zM44.4 14.3h6.8v0.8h-6.8zM53.3 14.3h10.7v0.8h-10.7zM66 14.3h8.6v0.8h-8.6zM76.6 14.3h10.9v0.8h-10.9zM89.5 14.3h8.5v0.8h-8.5z" fill="#aaaaaa" opacity="0.35"/><text x="10.5" y="22.3" font-family="Liberation Sans" font-size="3.3" fill="#dddddd" opacity="0.8">SMS Spam Detection (100 points)</text><path d="M10.5 27.3h4.2v0.8h-4.2zM15.4 27.3h4.9v0.8h-4.9zM21 27.3h4.9v0.8h-4.9zM26.6 27.3h3.6v0.8h-3.6zM31 27.3h1.7v0.8h-1.7zM33.3 27.3h1.5v0.8h-1.5zM35.5 27.3h2v0.8h-2zM38.2 27.3h4.8v0.8h-4.8zM43.7 27.3h2.6v0.8h-2.6zM47 27.3h2.8v0.8h-2.8zM50.4 27.3h4.6v0.8h-4.6zM55.8 27.3h2.6v0.8h-2.6zM59.1 27.3h3.4v0.8h-3.4zM63.2 27.3h3v0.8h-3zM66.9 27.3h1.7v0.8h-1.7zM69.4 27.3h3.5v0.8h-3.5zM73.6 27.3h4.5v0.8h-4.5zM78.8 27.3h2v0.8h-2zM81.5 27.3h2.3v0.8h-2.3zM84.5 27.3h2.9v0.8h-2.9zM88.1 27.3h1.6v0.8h-1.6zM90.5 27.3h3.2v0.8h-3.2zM94.4 27.3h4.4v0.8h-4.4zM99.5 27.3h3.8v0.8h-3.8zM104 27.3h3.4v0.8h-3.4zM108 27.3h4.5v0.8h-4.5zM113.2 27.3h2v0.8h-2zM116 27.3h3.5v0.8h-3.5zM120.1 27.3h2.8v0.8h-2.8zM123.6 27.3h3.6v0.8h-3.6zM128 27.3h1.9v0.8h-1.9zM130.5 27.3h4.2v0.8h-4.2zM135.5 27.3h1.8v0.8h-1.8zM138 27.3h2.1v0.8h-2.1zM140.8 27.3h4.3v0.8h-4.3zM145.8 27.3h4.8v0.8h-4.8zM151.3 27.3h3v0.8h-3z" fill="#cccccc" opacity="0.33"/><path d="M10.5 29.8h2.4v0.8h-2.4zM13.6 29.8h2.5v0.8h-2.5zM16.7 29.8h3.7v0.8h-3.7zM21.1 29.8h2.1v0.8h-2.1zM23.9 29.8h1.9v0.8h-1.9zM26.5 29.8h3.1v0.8h-3.1zM30.3 29.8h2.1v0.8h-2.1zM33.1 29.8h3.8v0.8h-3.8zM37.6 29.8h4.4v0.8h-4.4zM42.6 29.8h4.2v0.8h-4.2zM47.6 29.8h3.2v0.8h-3.2zM51.4 29.8h2.7v0.8h-2.7zM54.9 29.8h3v0.8h-3zM58.6 29.8h1.5v0.8h-1.5zM60.8 29.8h4v0.8h-4zM65.5 29.8h2.7v0.8h-2.7zM68.9 29.8h2.6v0.8h-2.6zM72.2 29.8h1.8v0.8h-1.8zM74.7 29.8h3.1v0.8h-3.1zM78.4 29.8h3.5v0.8h-3.5zM82.7 29.8h2.9v0.8h-2.9zM86.2 29.8h4.5v0.8h-4.5zM91.5 29.8h3.9v0.8h-3.9zM96 29.8h2.3v0.8h-2.3zM99.1 29.8h3.3v0.8h-3.3zM103.1 29.8h4.7v0.8h-4.7zM108.5 29.8h3.3v0.8h-3.3zM112.5 29.8h3.6v0.8h-3.6zM116.8 29.8h1.7v0.8h-1.7zM119.2 29.8h3.2v0.8h-3.2zM123.2 29.8h3.1v0.8h-3.1zM127 29.8h2.9v0.8h-2.9zM130.6 29.8h3v0.8h-3zM134.2 29.8h3.5v0.8h-3.5zM138.5 29.8h3.4v0.8h-3.4zM142.6 29.8h3.2v0.8h-3.2zM146.5 29.8h2.1v0.8h-2.1zM149.3 29.8h3v0.8h-3zM153 29.8h4.9v0.8h-4.9zM158.6 29.8h3v0.8h-3zM162.3 29.8h0.7v0.8h-0.7z" fill="#cccccc" opacity="0.33"/><path d="M10.5 32.6h3.4v0.8h-3.4zM14.6 32.6h1.7v0.8h-1.7zM17 32.6h1.8v0.8h-1.8zM19.5 32.6h1.9v0.8h-1.9zM22.1 32.6h3.1v0.8h-3.1zM25.8 32.6h5v0.8h-5zM31.5 32.6h3.2v0.8h-3.2zM35.4 32.6h3.1v0.8h-3.1zM39.2 32.6h3v0.8h-3zM43 32.6h3.3v0.8h-3.3zM46.9 32.6h3.1v0.8h-3.1zM50.7 32.6h4v0.8h-4zM55.4 32.6h4.6v0.8h-4.6zM60.8 32.6h3.9v0.8h-3.9zM65.4 32.6h3v0.8h-3zM69.1 32.6h3.8v0.8h-3.8zM73.6 32.6h4.7v0.8h-4.7zM78.9 32.6h2v0.8h-2zM81.7 32.6h2.3v0.8h-2.3zM84.7 32.6h3.7v0.8h-3.7zM89.1 32.6h3.9v0.8h-3.9zM93.7 32.6h3.7v0.8h-3.7zM98.1 32.6h3.6v0.8h-3.6zM102.4 32.6h4.4v0.8h-4.4zM107.5 32.6h3.2v0.8h-3.2zM111.4 32.6h4.3v0.8h-4.3zM116.4 32.6h4.9v0.8h-4.9zM122 32.6h3v0.8h-3zM125.7 32.6h4.5v0.8h-4.5zM130.9 32.6h4v0.8h-4zM135.6 32.6h4.6v0.8h-4.6zM140.9 32.6h1.7v0.8h-1.7zM143.3 32.6h4.7v0.8h-4.7zM148.7 32.6h1.9v0.8h-1.9z" fill="#cccccc" opacity="0.33"/><path d="M10.5 36.9h4.9v0.8h-4.9zM16.1 36.9h2.5v0.8h-2.5zM19.3 36.9h3.8v0.8h-3.8zM23.9 36.9h2v0.8h-2zM26.6 36.9h3.6v0.8h-3.6zM30.9 36.9h4.7v0.8h-4.7zM36.3 36.9h2.2v0.8h-2.2zM39.1 36.9h2.7v0.8h-2.7zM42.6 36.9h1.8v0.8h-1.8zM45.1 36.9h2.2v0.8h-2.2zM47.9 36.9h2.2v0.8h-2.2zM50.9 36.9h1.8v0.8h-1.8zM53.4 36.9h5v0.8h-5zM59.1 36.9h4.6v0.8h-4.6zM64.4 36.9h3.1v0.8h-3.1zM68.2 36.9h4.1v0.8h-4.1zM73 36.9h3.9v0.8h-3.9zM77.7 36.9h3.3v0.8h-3.3zM81.7 36.9h3v0.8h-3zM85.4 36.9h3.8v0.8h-3.8zM89.9 36.9h3.4v0.8h-3.4zM94 36.9h2.4v0.8h-2.4zM97.2 36.9h2.8v0.8h-2.8zM100.6 36.9h3.7v0.8h-3.7zM105 36.9h3.7v0.8h-3.7zM109.4 36.9h2.2v0.8h-2.2zM112.4 36.9h3.6v0.8h-3.6zM116.7 36.9h4.6v0.8h-4.6zM122 36.9h4.5v0.8h-4.5zM127.2 36.9h3.8v0.8h-3.8zM131.7 36.9h1.7v0.8h-1.7zM134.1 36.9h3v0.8h-3zM137.8 36.9h1.8v0.8h-1.8zM140.3 36.9h1.7v0.8h-1.7zM142.7 36.9h2.4v0.8h-2.4zM145.8 36.9h3.1v0.8h-3.1zM149.6 36.9h4.2v0.8h-4.2zM154.5 36.9h3.7v0.8h-3.7zM158.9 36.9h2.5v0.8h-2.5zM162.1 36.9h3.9v0.8h-3.9zM166.7 36.9h3.3v0.8h-3.3zM170.7 36.9h3.3v0.8h-3.3zM174.7 36.9h2.4v0.8h-2.4zM177.8 36.9h1.6v0.8h-1.6z" fill="#cccccc" opacity="0.33"/><path d="M10.5 39.6h4v0.8h-4zM15.2 39.6h3.2v0.8h-3.2zM19.1 39.6h3.1v0.8h-3.1zM22.9 39.6h3.2v0.8h-3.2zM26.8 39.6h3.2v0.8h-3.2zM30.6 39.6h3.9v0.8h-3.9zM35.3 39.6h4v0.8h-4zM40 39.6h4.3v0.8h-4.3zM45 39.6h2.9v0.8h-2.9zM48.6 39.6h4.3v0.8h-4.3zM53.6 39.6h4.9v0.8h-4.9zM59.2 39.6h5v0.8h-5zM64.8 39.6h4v0.8h-4zM69.5 39.6h1.7v0.8h-1.7zM72 39.6h4.5v0.8h-4.5zM77.1 39.6h4.4v0.8h-4.4zM82.3 39.6h1.6v0.8h-1.6zM84.5 39.6h2.6v0.8h-2.6zM87.9 39.6h2.6v0.8h-2.6zM91.2 39.6h4.1v0.8h-4.1zM96 39.6h3.6v0.8h-3.6zM100.3 39.6h2.5v0.8h-2.5zM103.5 39.6h2.2v0.8h-2.2zM106.4 39.6h2.1v0.8h-2.1zM109.2 39.6h1.8v0.8h-1.8zM111.7 39.6h4.3v0.8h-4.3zM116.7 39.6h4.8v0.8h-4.8zM122.1 39.6h2.3v0.8h-2.3zM125.1 39.6h4.1v0.8h-4.1zM129.9 39.6h4.8v0.8h-4.8zM135.4 39.6h2.2v0.8h-2.2zM138.3 39.6h3.5v0.8h-3.5zM142.5 39.6h3v0.8h-3zM146.3 39.6h4.9v0.8h-4.9zM151.9 39.6h4.5v0.8h-4.5zM157.1 39.6h1.6v0.8h-1.6zM159.4 39.6h1.4v0.8h-1.4z" fill="#cccccc" opacity="0.33"/><path d="M10.5 44.2h3.5v0.8h-3.5zM14.7 44.2h3.3v0.8h-3.3zM18.7 44.2h4.3v0.8h-4.3zM23.8 44.2h4.2v0.8h-4.2zM28.6 44.2h4.8v0.8h-4.8zM34.2 44.2h2.6v0.8h-2.6zM37.5 44.2h1.7v0.8h-1.7zM39.9 44.2h3.9v0.8h-3.9zM44.5 44.2h1.7v0.8h-1.7zM46.9 44.2h3.5v0.8h-3.5zM51.1 44.2h4.5v0.8h-4.5zM56.3 44.2h2.9v0.8h-2.9zM59.9 44.2h3.6v0.8h-3.6zM64.2 44.2h2.1v0.8h-2.1zM67 44.2h2.1v0.8h-2.1zM69.7 44.2h3.6v0.8h-3.6zM74.1 44.2h4.5v0.8h-4.5zM79.3 44.2h5v0.8h-5zM85 44.2h1.6v0.8h-1.6zM87.3 44.2h4.7v0.8h-4.7zM92.7 44.2h3.3v0.8h-3.3zM96.7 44.2h2.7v0.8h-2.7zM100.1 44.2h2.9v0.8h-2.9zM103.7 44.2h3.5v0.8h-3.5zM107.9 44.2h2.7v0.8h-2.7zM111.4 44.2h2v0.8h-2zM114.1 44.2h4.5v0.8h-4.5zM119.3 44.2h4v0.8h-4zM124 44.2h3.6v0.8h-3.6zM128.3 44.2h4v0.8h-4zM133 44.2h5v0.8h-5zM138.7 44.2h2.1v0.8h-2.1zM141.5 44.2h4.4v0.8h-4.4zM146.6 44.2h4.4v0.8h-4.4zM151.7 44.2h2.7v0.8h-2.7zM155.1 44.2h3.5v0.8h-3.5zM159.2 44.2h3.1v0.8h-3.1zM163 44.2h2.2v0.8h-2.2zM165.9 44.2h3v0.8h-3zM169.6 44.2h2v0.8h-2zM172.3 44.2h3.6v0.8h-3.6z" fill="#cccccc" opacity="0.33"/><path d="M10.5 48.8h3.7v0.8h-3.7zM14.9 48.8h3.5v0.8h-3.5zM19.1 48.8h4.9v0.8h-4.9zM24.7 48.8h4.3v0.8h-4.3zM29.7 48.8h2.8v0.8h-2.8zM33.2 48.8h2.8v0.8h-2.8zM36.7 48.8h1.7v0.8h-1.7zM39.1 48.8h1.7v0.8h-1.7zM41.4 48.8h2.6v0.8h-2.6zM44.7 48.8h4.8v0.8h-4.8zM50.2 48.8h1.7v0.8h-1.7zM52.6 48.8h2.1v0.8h-2.1zM55.4 48.8h3.7v0.8h-3.7zM59.9 48.8h2.8v0.8h-2.8zM63.3 48.8h2.1v0.8h-2.1zM66.2 48.8h4.8v0.8h-4.8zM71.7 48.8h1.6v0.8h-1.6zM74 48.8h3.6v0.8h-3.6zM78.3 48.8h3v0.8h-3zM82 48.8h2.7v0.8h-2.7zM85.4 48.8h2.2v0.8h-2.2zM88.3 48.8h2.1v0.8h-2.1zM91.1 48.8h2.9v0.8h-2.9zM94.7 48.8h4.1v0.8h-4.1zM99.6 48.8h3.1v0.8h-3.1zM103.4 48.8h4.2v0.8h-4.2zM108.3 48.8h4.6v0.8h-4.6zM113.6 48.8h2.1v0.8h-2.1zM116.4 48.8h4.6v0.8h-4.6zM121.7 48.8h3.5v0.8h-3.5zM125.9 48.8h3v0.8h-3zM129.6 48.8h3.3v0.8h-3.3zM133.6 48.8h4.6v0.8h-4.6zM138.9 48.8h2.9v0.8h-2.9zM142.5 48.8h1.8v0.8h-1.8zM145 48.8h4.9v0.8h-4.9zM150.6 48.8h1.9v0.8h-1.9zM153.2 48.8h1.9v0.8h-1.9z" fill="#cccccc" opacity="0.33"/><rect x="10.50" y="54.50" width="20.00" height="1.40" fill="#dddddd" opacity="0.50"/><rect x="14.00" y="59.00" width="1.00" height="1.00" fill="#dddddd" opacity="0.50"/><path d="M15 59h2.6v0.9h-2.6zM18.5 59h2.4v0.9h-2.4zM21.8 59h4.2v0.9h-4.2zM27 59h5.5v0.9h-5.5zM33.3 59h2.7v0.9h-2.7zM36.9 59h3.1v0.9h-3.1z" fill="#cccccc" opacity="0.40"/><rect x="41.00" y="59.00" width="52.00" height="0.90" fill="#7a6ad0" opacity="0.50"/><rect x="10.00" y="63.00" width="170.00" height="33.00" fill="#1b1b1b"/><path d="M15 66.5h2.4v0.9h-2.4zM18.1 66.5h3v0.9h-3zM21.8 66.5h1.6v0.9h-1.6z" fill="#dcdcaa" opacity="0.50"/><path d="M24.7 66.5h2.5v0.9h-2.5zM27.9 66.5h2.3v0.9h-2.3z" fill="#dcdcaa" opacity="0.50"/><path d="M31 66.5h1.2v0.9h-1.2zM32.9 66.5h1.6v0.9h-1.6zM35.2 66.5h1.3v0.9h-1.3zM37.1 66.5h0.5v0.9h-0.5z" fill="#4ec9b0" opacity="0.50"/><path d="M38.4 66.5h3.4v0.9h-3.4zM42.4 66.5h1.7v0.9h-1.7zM44.9 66.5h0.6v0.9h-0.6z" fill="#4ec9b0" opacity="0.50"/><path d="M46.2 66.5h2.3v0.9h-2.3zM49.2 66.5h1.9v0.9h-1.9zM51.8 66.5h1.3v0.9h-1.3z" fill="#6a9955" opacity="0.50"/><path d="M54.7 66.5h2.2v0.9h-2.2zM57.6 66.5h2.1v0.9h-2.1zM60.4 66.5h2.3v0.9h-2.3zM63.4 66.5h1.8v0.9h-1.8z" fill="#dcdcaa" opacity="0.50"/><path d="M15 68.7h1v0.9h-1zM16.7 68.7h1.5v0.9h-1.5z" fill="#dcdcaa" opacity="0.50"/><path d="M19 68.7h2.3v0.9h-2.3zM22 68.7h1.7v0.9h-1.7z" fill="#6a9955" opacity="0.50"/><path d="M24.5 68.7h3.1v0.9h-3.1zM28.3 68.7h3.2v0.9h-3.2zM32.2 68.7h2.1v0.9h-2.1zM35 68.7h1v0.9h-1z" fill="#4ec9b0" opacity="0.50"/><path d="M36.7 68.7h3.5v0.9h-3.5z" fill="#4ec9b0" opacity="0.50"/><path d="M15 70.9h3.9v0.9h-3.9zM19.6 70.9h1.2v0.9h-1.2zM21.5 70.9h2.7v0.9h-2.7zM24.9 70.9h0.6v0.9h-0.6z" fill="#6a9955" opacity="0.50"/><path d="M26.3 70.9h3.5v0.9h-3.5zM30.5 70.9h1.4v0.9h-1.4zM32.6 70.9h3.1v0.9h-3.1zM36.4 70.9h0.6v0.9h-0.6z" fill="#4ec9b0" opacity="0.50"/><path d="M37.8 70.9h3.1v0.9h-3.1zM41.6 70.9h3.8v0.9h-3.8zM46.1 70.9h1.6v0.9h-1.6zM48.4 70.9h1.4v0.9h-1.4z" fill="#9cdcfe" opacity="0.50"/><path d="M50.5 70.9h1.2v0.9h-1.2zM52.5 70.9h1.4v0.9h-1.4zM54.6 70.9h1.8v0.9h-1.8z" fill="#9cdcfe" opacity="0.50"/><path d="M15 73.1h2.4v0.9h-2.4zM18.1 73.1h1.6v0.9h-1.6zM20.4 73.1h3v0.9h-3zM24.1 73.1h1.5v0.9h-1.5z" fill="#dcdcaa" opacity="0.50"/><path d="M26.4 73.1h1.8v0.9h-1.8zM28.8 73.1h1.6v0.9h-1.6zM31.1 73.1h1.3v0.9h-1.3z" fill="#9cdcfe" opacity="0.50"/><path d="M33.3 73.1h1.7v0.9h-1.7zM35.7 73.1h1.8v0.9h-1.8zM38.2 73.1h3.9v0.9h-3.9zM42.9 73.1h1.5v0.9h-1.5zM45.1 73.1h1v0.9h-1z" fill="#dcdcaa" opacity="0.50"/><path d="M47.9 73.1h1.1v0.9h-1.1zM49.7 73.1h0.4v0.9h-0.4z" fill="#cccccc" opacity="0.50"/><path d="M19 75.3h1.9v0.9h-1.9zM21.6 75.3h1.1v0.9h-1.1zM23.4 75.3h1.4v0.9h-1.4zM25.5 75.3h2v0.9h-2z" fill="#cccccc" opacity="0.50"/><path d="M28.9 75.3h2.2v0.9h-2.2zM31.8 75.3h1.2v0.9h-1.2zM33.6 75.3h1.7v0.9h-1.7z" fill="#4ec9b0" opacity="0.50"/><path d="M36.7 75.3h3v0.9h-3z" fill="#9cdcfe" opacity="0.50"/><path d="M41.2 75.3h2.3v0.9h-2.3zM44.3 75.3h1.3v0.9h-1.3z" fill="#6a9955" opacity="0.50"/><path d="M46.3 75.3h2.5v0.9h-2.5zM49.6 75.3h2.9v0.9h-2.9zM53.2 75.3h1.6v0.9h-1.6zM55.5 75.3h1.3v0.9h-1.3z" fill="#dcdcaa" opacity="0.50"/><path d="M57.6 75.3h1.5v0.9h-1.5z" fill="#dcdcaa" opacity="0.50"/><path d="M15 77.5h3.3v0.9h-3.3zM19 77.5h1.3v0.9h-1.3z" fill="#dcdcaa" opacity="0.50"/><path d="M21 77.5h3.2v0.9h-3.2zM25 77.5h2.3v0.9h-2.3zM28 77.5h2.4v0.9h-2.4z" fill="#dcdcaa" opacity="0.50"/><path d="M31.2 77.5h3.9v0.9h-3.9zM35.8 77.5h1.4v0.9h-1.4z" fill="#9cdcfe" opacity="0.50"/><path d="M38 77.5h3.8v0.9h-3.8zM42.4 77.5h1.2v0.9h-1.2zM44.3 77.5h1.8v0.9h-1.8z" fill="#cccccc" opacity="0.50"/><path d="M46.9 77.5h3.3v0.9h-3.3zM50.9 77.5h3.9v0.9h-3.9z" fill="#dcdcaa" opacity="0.50"/><path d="M55.6 77.5h1.1v0.9h-1.1zM57.5 77.5h3.6v0.9h-3.6zM61.8 77.5h2.2v0.9h-2.2z" fill="#6a9955" opacity="0.50"/><path d="M17 79.7h3.1v0.9h-3.1z" fill="#4ec9b0" opacity="0.50"/><path d="M21.6 79.7h1v0.9h-1zM23.3 79.7h2.1v0.9h-2.1zM26.1 79.7h2.9v0.9h-2.9z" fill="#dcdcaa" opacity="0.50"/><path d="M30 79.7h3.2v0.9h-3.2zM33.9 79.7h3v0.9h-3zM37.5 79.7h1.3v0.9h-1.3z" fill="#9cdcfe" opacity="0.50"/><path d="M39.6 79.7h2.3v0.9h-2.3zM42.7 79.7h1.1v0.9h-1.1zM44.5 79.7h1.6v0.9h-1.6zM46.8 79.7h2.5v0.9h-2.5zM50 79.7h0.9v0.9h-0.9z" fill="#9cdcfe" opacity="0.50"/><path d="M15 81.9h2v0.9h-2zM17.7 81.9h3.8v0.9h-3.8zM22.2 81.9h1.6v0.9h-1.6z" fill="#6a9955" opacity="0.50"/><path d="M24.6 81.9h3.7v0.9h-3.7zM29 81.9h1.3v0.9h-1.3z" fill="#4ec9b0" opacity="0.50"/><path d="M19 84.1h2.8v0.9h-2.8zM22.5 84.1h4v0.9h-4zM27.2 84.1h2.2v0.9h-2.2z" fill="#cccccc" opacity="0.50"/><path d="M30.6 84.1h1.3v0.9h-1.3zM32.7 84.1h2.4v0.9h-2.4z" fill="#6a9955" opacity="0.50"/><path d="M35.9 84.1h1.9v0.9h-1.9zM38.5 84.1h1.1v0.9h-1.1z" fill="#6a9955" opacity="0.50"/><path d="M40.4 84.1h3v0.9h-3zM44.1 84.1h2.1v0.9h-2.1zM46.9 84.1h3.4v0.9h-3.4z" fill="#4ec9b0" opacity="0.50"/><path d="M52.1 84.1h3.1v0.9h-3.1zM55.9 84.1h1v0.9h-1z" fill="#dcdcaa" opacity="0.50"/><path d="M15 86.3h2.8v0.9h-2.8zM18.5 86.3h1.7v0.9h-1.7z" fill="#9cdcfe" opacity="0.50"/><path d="M21 86.3h3.7v0.9h-3.7zM25.4 86.3h3.3v0.9h-3.3z" fill="#9cdcfe" opacity="0.50"/><path d="M30.2 86.3h1.7v0.9h-1.7zM32.5 86.3h2.6v0.9h-2.6z" fill="#6a9955" opacity="0.50"/><path d="M36.1 86.3h1.4v0.9h-1.4zM38.1 86.3h1.3v0.9h-1.3z" fill="#4ec9b0" opacity="0.50"/><path d="M40.2 86.3h2.1v0.9h-2.1zM43 86.3h3.4v0.9h-3.4z" fill="#cccccc" opacity="0.50"/><path d="M17 88.5h1.3v0.9h-1.3zM19 88.5h1.6v0.9h-1.6z" fill="#dcdcaa" opacity="0.50"/><path d="M21.4 88.5h3.6v0.9h-3.6zM25.7 88.5h2.2v0.9h-2.2z" fill="#6a9955" opacity="0.50"/><path d="M29.3 88.5h1v0.9h-1zM31 88.5h1.4v0.9h-1.4zM33.1 88.5h3.1v0.9h-3.1z" fill="#9cdcfe" opacity="0.50"/><path d="M37 88.5h2.3v0.9h-2.3zM40 88.5h3v0.9h-3zM43.6 88.5h3.2v0.9h-3.2zM47.6 88.5h1.6v0.9h-1.6z" fill="#9cdcfe" opacity="0.50"/><path d="M50 88.5h3.1v0.9h-3.1zM53.7 88.5h1.9v0.9h-1.9zM56.3 88.5h0.8v0.9h-0.8z" fill="#9cdcfe" opacity="0.50"/><path d="M57.8 88.5h3v0.9h-3zM61.5 88.5h1.9v0.9h-1.9zM64.1 88.5h1.3v0.9h-1.3z" fill="#cccccc" opacity="0.50"/><path d="M15 90.7h3.3v0.9h-3.3z" fill="#6a9955" opacity="0.50"/><path d="M20 90.7h2.9v0.9h-2.9zM23.6 90.7h1.4v0.9h-1.4zM25.7 90.7h2.3v0.9h-2.3z" fill="#dcdcaa" opacity="0.50"/><path d="M15 92.9h1.3v0.9h-1.3zM17 92.9h3.3v0.9h-3.3zM21 92.9h1.3v0.9h-1.3zM23 92.9h2.6v0.9h-2.6z" fill="#4ec9b0" opacity="0.50"/><path d="M27 92.9h1.8v0.9h-1.8zM29.5 92.9h2v0.9h-2zM32.2 92.9h2.1v0.9h-2.1zM35.1 92.9h3.3v0.9h-3.3zM39.1 92.9h0.7v0.9h-0.7z" fill="#4ec9b0" opacity="0.50"/><path d="M40.5 92.9h2.5v0.9h-2.5zM43.7 92.9h2.3v0.9h-2.3z" fill="#cccccc" opacity="0.50"/><path d="M46.9 92.9h3.7v0.9h-3.7zM51.3 92.9h1.2v0.9h-1.2zM53.2 92.9h3.2v0.9h-3.2zM57.1 92.9h0.9v0.9h-0.9z" fill="#9cdcfe" opacity="0.50"/><path d="M58.8 92.9h1.1v0.9h-1.1z" fill="#dcdcaa" opacity="0.50"/><rect x="0.00" y="96.80" width="182.60" height="2.60" fill="#007acc" opacity="0.95"/><rect x="0.00" y="99.40" width="182.60" height="3.40" fill="#0b0b0b"/></svg></div><div class="t1">Alexander Prader-CAI NatLPr-A2</div><div class="t2">CAI_NatLPr-Assignment_2 - Sommer 2025</div><svg class="av" viewBox="0 0 7 6" width="7" height="6"><path d="M4.2 0.3 L6.3 1.6 L5.8 2.6 L6.4 3.2 L5 5 L4.2 4.2 Z" fill="#b9b9b9" opacity="0.75"/><ellipse cx="2.5" cy="3.9" rx="2.3" ry="1.2" transform="rotate(-28 2.5 3.9)" fill="#55803a" opacity="0.9"/></svg><div class="avt">vatar</div><div class="t3">Gokul Srinivasagan</div></div>
<div class="card" style="left:546.7px;top:417.95px"><div class="th"><svg class="ths" width="182.6" height="102.8" viewBox="0 0 182.6 102.8" preserveAspectRatio="none"><rect x="0.00" y="0.00" width="182.60" height="102.80" fill="#1e1e1e"/><rect x="0.00" y="0.00" width="182.60" height="6.80" fill="#000000"/><rect x="0.00" y="6.80" width="182.60" height="89.00" fill="#1e1e1e"/><text x="2" y="11.2" font-family="Liberation Sans" font-size="2.9" font-weight="bold" fill="#e6e6e6" opacity="0.8">Assignment 2 (100 points)</text><rect x="65.00" y="11.80" width="1.60" height="2.00" fill="#dddddd" opacity="0.60"/><path d="M85 11.8h3.3v0.7h-3.3zM89.2 11.8h3.8v0.7h-3.8zM93.9 11.8h3.1v0.7h-3.1z" fill="#aaaaaa" opacity="0.35"/><rect x="2.00" y="13.80" width="12.00" height="3.50" fill="#777777" opacity="0.35"/><rect x="2.00" y="18.00" width="12.00" height="1.20" fill="#aaaaaa" opacity="0.35"/><rect x="2.00" y="23.00" width="25.00" height="1.30" fill="#dddddd" opacity="0.45"/><path d="M2 27.3h3.3v0.8h-3.3zM6 27.3h3.6v0.8h-3.6zM10.2 27.3h2.1v0.8h-2.1zM13.1 27.3h3.3v0.8h-3.3zM17.1 27.3h3.7v0.8h-3.7zM21.5 27.3h4.3v0.8h-4.3zM26.5 27.3h1.8v0.8h-1.8zM29 27.3h2.6v0.8h-2.6zM32.2 27.3h1.8v0.8h-1.8zM34.8 27.3h4.3v0.8h-4.3zM39.8 27.3h3.9v0.8h-3.9zM44.4 27.3h1.6v0.8h-1.6zM46.8 27.3h4.9v0.8h-4.9zM52.4 27.3h4.9v0.8h-4.9zM58 27.3h3.8v0.8h-3.8zM62.5 27.3h3.7v0.8h-3.7zM66.8 27.3h2.1v0.8h-2.1zM69.6 27.3h1.6v0.8h-1.6zM71.8 27.3h3.3v0.8h-3.3zM75.9 27.3h1.7v0.8h-1.7zM78.3 27.3h2.2v0.8h-2.2zM81.2 27.3h2.3v0.8h-2.3zM84.2 27.3h1.6v0.8h-1.6zM86.5 27.3h3.1v0.8h-3.1zM90.3 27.3h3v0.8h-3zM94.1 27.3h4.4v0.8h-4.4zM99.2 27.3h3.3v0.8h-3.3zM103.2 27.3h3.7v0.8h-3.7zM107.7 27.3h3.2v0.8h-3.2zM111.6 27.3h3.8v0.8h-3.8zM116.1 27.3h0.8v0.8h-0.8z" fill="#cccccc" opacity="0.30"/><path d="M2 29.3h5v0.8h-5zM7.7 29.3h5v0.8h-5zM13.4 29.3h4.4v0.8h-4.4zM18.5 29.3h4v0.8h-4zM23.2 29.3h2.6v0.8h-2.6zM26.5 29.3h2.3v0.8h-2.3zM29.5 29.3h2.5v0.8h-2.5zM32.7 29.3h1.7v0.8h-1.7zM35.2 29.3h4.2v0.8h-4.2zM40 29.3h2.9v0.8h-2.9zM43.6 29.3h4.5v0.8h-4.5zM48.8 29.3h2.9v0.8h-2.9zM52.4 29.3h4.9v0.8h-4.9zM57.9 29.3h4.5v0.8h-4.5zM63.1 29.3h1.5v0.8h-1.5zM65.3 29.3h2.2v0.8h-2.2zM68.2 29.3h4.7v0.8h-4.7zM73.6 29.3h3.1v0.8h-3.1zM77.4 29.3h4.9v0.8h-4.9zM83.1 29.3h2.9v0.8h-2.9zM86.7 29.3h1.8v0.8h-1.8zM89.1 29.3h3.7v0.8h-3.7zM93.5 29.3h1.3v0.8h-1.3z" fill="#cccccc" opacity="0.30"/><path d="M2 31.3h1.8v0.8h-1.8zM4.5 31.3h2.7v0.8h-2.7zM7.9 31.3h4.9v0.8h-4.9zM13.4 31.3h4.2v0.8h-4.2zM18.3 31.3h1.9v0.8h-1.9zM20.9 31.3h2.4v0.8h-2.4zM24 31.3h1.9v0.8h-1.9zM26.5 31.3h1.7v0.8h-1.7zM28.9 31.3h4.3v0.8h-4.3zM33.9 31.3h2.1v0.8h-2.1zM36.7 31.3h3.5v0.8h-3.5zM40.9 31.3h3.1v0.8h-3.1zM44.7 31.3h2.2v0.8h-2.2zM47.5 31.3h4.1v0.8h-4.1zM52.3 31.3h2v0.8h-2zM55 31.3h3.8v0.8h-3.8zM59.4 31.3h1.9v0.8h-1.9zM62 31.3h3v0.8h-3zM65.7 31.3h2.2v0.8h-2.2zM68.6 31.3h2.4v0.8h-2.4zM71.8 31.3h4.9v0.8h-4.9zM77.4 31.3h4.3v0.8h-4.3zM82.4 31.3h2.6v0.8h-2.6zM85.7 31.3h4.6v0.8h-4.6zM91 31.3h2.2v0.8h-2.2z" fill="#cccccc" opacity="0.30"/><path d="M2 35h4.5v0.8h-4.5zM7.2 35h3.7v0.8h-3.7zM11.6 35h1.9v0.8h-1.9zM14.2 35h5v0.8h-5zM19.9 35h2.2v0.8h-2.2zM22.8 35h2.4v0.8h-2.4zM25.9 35h4.2v0.8h-4.2zM30.8 35h2.7v0.8h-2.7zM34.2 35h2.5v0.8h-2.5zM37.4 35h1.8v0.8h-1.8zM39.9 35h1.8v0.8h-1.8zM42.4 35h3.5v0.8h-3.5zM46.6 35h2.4v0.8h-2.4zM49.7 35h3.6v0.8h-3.6zM54 35h2.8v0.8h-2.8zM57.5 35h3.1v0.8h-3.1zM61.2 35h4.9v0.8h-4.9zM66.8 35h3.2v0.8h-3.2zM70.7 35h3.5v0.8h-3.5zM74.9 35h4.5v0.8h-4.5zM80.1 35h2.1v0.8h-2.1zM83 35h2v0.8h-2zM85.7 35h4.7v0.8h-4.7zM91.1 35h4.4v0.8h-4.4zM96.2 35h2.4v0.8h-2.4zM99.2 35h2.2v0.8h-2.2zM102.1 35h4.1v0.8h-4.1zM106.9 35h1.6v0.8h-1.6z" fill="#cccccc" opacity="0.30"/><path d="M2 37h4.8v0.8h-4.8zM7.5 37h4.6v0.8h-4.6zM12.8 37h3.6v0.8h-3.6zM17.1 37h3v0.8h-3zM20.8 37h1.9v0.8h-1.9zM23.4 37h1.6v0.8h-1.6zM25.7 37h4.9v0.8h-4.9zM31.3 37h2.3v0.8h-2.3zM34.3 37h4v0.8h-4zM39 37h2.4v0.8h-2.4zM42.1 37h4.4v0.8h-4.4zM47.2 37h3.6v0.8h-3.6zM51.4 37h2.5v0.8h-2.5zM54.7 37h2.1v0.8h-2.1zM57.5 37h4v0.8h-4zM62.2 37h1.7v0.8h-1.7zM64.6 37h2.3v0.8h-2.3zM67.6 37h3.5v0.8h-3.5zM71.8 37h4.5v0.8h-4.5zM77 37h3.7v0.8h-3.7zM81.3 37h2.5v0.8h-2.5zM84.5 37h0.7v0.8h-0.7z" fill="#cccccc" opacity="0.30"/><path d="M2 40.5h1.6v0.8h-1.6zM4.3 40.5h2.4v0.8h-2.4zM7.4 40.5h3.1v0.8h-3.1zM11.2 40.5h1.7v0.8h-1.7zM13.6 40.5h2.1v0.8h-2.1zM16.4 40.5h2.8v0.8h-2.8zM19.9 40.5h3.5v0.8h-3.5zM24.1 40.5h2v0.8h-2zM26.7 40.5h2.8v0.8h-2.8zM30.2 40.5h4.6v0.8h-4.6zM35.5 40.5h4.9v0.8h-4.9zM41.2 40.5h3.8v0.8h-3.8zM45.7 40.5h3.9v0.8h-3.9zM50.3 40.5h3.5v0.8h-3.5zM54.5 40.5h2v0.8h-2zM57.2 40.5h1.6v0.8h-1.6zM59.5 40.5h1.6v0.8h-1.6zM61.8 40.5h4.7v0.8h-4.7zM67.2 40.5h4v0.8h-4zM71.8 40.5h4.9v0.8h-4.9zM77.4 40.5h1.6v0.8h-1.6zM79.7 40.5h3.7v0.8h-3.7zM84.1 40.5h2v0.8h-2z" fill="#cccccc" opacity="0.30"/><path d="M2 43.2h2.6v0.8h-2.6zM5.3 43.2h5v0.8h-5zM11 43.2h1.8v0.8h-1.8zM13.5 43.2h3.4v0.8h-3.4zM17.6 43.2h4.1v0.8h-4.1zM22.4 43.2h4.7v0.8h-4.7zM27.7 43.2h4.1v0.8h-4.1zM32.5 43.2h4v0.8h-4zM37.2 43.2h4.3v0.8h-4.3zM42.1 43.2h4.7v0.8h-4.7zM47.5 43.2h2.7v0.8h-2.7zM51 43.2h3.9v0.8h-3.9zM55.6 43.2h4.7v0.8h-4.7zM60.9 43.2h4.5v0.8h-4.5zM66.2 43.2h3v0.8h-3zM69.8 43.2h4.3v0.8h-4.3zM74.8 43.2h4.5v0.8h-4.5zM80 43.2h3.5v0.8h-3.5zM84.2 43.2h3.7v0.8h-3.7zM88.6 43.2h2.8v0.8h-2.8zM92.2 43.2h3.5v0.8h-3.5zM96.4 43.2h3.6v0.8h-3.6zM100.7 43.2h1.8v0.8h-1.8zM103.2 43.2h3.7v0.8h-3.7zM107.6 43.2h5v0.8h-5zM113.3 43.2h4.6v0.8h-4.6zM118.6 43.2h4v0.8h-4zM123.3 43.2h2.9v0.8h-2.9zM126.9 43.2h4.1v0.8h-4.1zM131.7 43.2h3.5v0.8h-3.5zM135.9 43.2h3v0.8h-3zM139.7 43.2h4.4v0.8h-4.4zM144.8 43.2h1.8v0.8h-1.8zM147.3 43.2h0.9v0.8h-0.9z" fill="#cccccc" opacity="0.30"/><rect x="2.00" y="46.50" width="12.00" height="1.20" fill="#dddddd" opacity="0.45"/><path d="M4 50h1.6v0.8h-1.6zM6.3 50h3.6v0.8h-3.6zM10.6 50h3.2v0.8h-3.2zM14.5 50h2.3v0.8h-2.3zM17.5 50h3.9v0.8h-3.9zM22.1 50h3.2v0.8h-3.2zM26.1 50h3.7v0.8h-3.7zM30.4 50h4.7v0.8h-4.7zM35.9 50h2.4v0.8h-2.4zM39 50h1.5v0.8h-1.5zM41.2 50h2.6v0.8h-2.6zM44.4 50h3.9v0.8h-3.9z" fill="#cccccc" opacity="0.30"/><rect x="2.00" y="53.00" width="178.60" height="22.00" fill="#1a1a1a"/><path d="M6 55h2.5v0.9h-2.5zM9.2 55h1.7v0.9h-1.7zM11.6 55h1.1v0.9h-1.1z" fill="#c8c8c8" opacity="0.35"/><path d="M13.6 55h3.4v0.9h-3.4zM17.7 55h1.6v0.9h-1.6z" fill="#d4d4d4" opacity="0.35"/><path d="M20.1 55h2.2v0.9h-2.2zM23 55h2.3v0.9h-2.3z" fill="#dcdcaa" opacity="0.35"/><path d="M6 56.9h3.1v0.9h-3.1zM9.8 56.9h3v0.9h-3z" fill="#9cdcfe" opacity="0.35"/><path d="M6 58.8h2.5v0.9h-2.5zM9.2 58.8h1.9v0.9h-1.9zM11.8 58.8h1.4v0.9h-1.4z" fill="#b0b0b0" opacity="0.35"/><path d="M14 58.8h2v0.9h-2zM16.7 58.8h3.5v0.9h-3.5zM20.9 58.8h1.8v0.9h-1.8zM23.4 58.8h2.8v0.9h-2.8zM26.9 58.8h0.7v0.9h-0.7z" fill="#c8c8c8" opacity="0.35"/><path d="M6 60.7h2.9v0.9h-2.9zM9.6 60.7h2.2v0.9h-2.2zM12.5 60.7h1.6v0.9h-1.6zM14.8 60.7h2.4v0.9h-2.4z" fill="#9cdcfe" opacity="0.35"/><path d="M6 62.6h2.3v0.9h-2.3zM9 62.6h2.9v0.9h-2.9zM12.6 62.6h3v0.9h-3zM16.3 62.6h3.4v0.9h-3.4z" fill="#ce9178" opacity="0.35"/><path d="M20.6 62.6h1.6v0.9h-1.6zM22.9 62.6h2.4v0.9h-2.4zM26 62.6h0.9v0.9h-0.9z" fill="#dcdcaa" opacity="0.35"/><path d="M12 66.4h2.6v0.9h-2.6zM15.3 66.4h2.2v0.9h-2.2z" fill="#d4d4d4" opacity="0.35"/><rect x="2.00" y="74.00" width="178.60" height="0.40" fill="#444444"/><path d="M7 76.5h1.3v0.9h-1.3zM9 76.5h3.8v0.9h-3.8zM13.5 76.5h3.2v0.9h-3.2zM17.3 76.5h1.4v0.9h-1.4z" fill="#dcdcaa" opacity="0.35"/><path d="M19.5 76.5h2.1v0.9h-2.1zM22.3 76.5h2.7v0.9h-2.7zM25.7 76.5h1.8v0.9h-1.8z" fill="#9cdcfe" opacity="0.35"/><path d="M9 78.3h1.3v0.9h-1.3zM11 78.3h3.6v0.9h-3.6zM15.3 78.3h3.4v0.9h-3.4z" fill="#dcdcaa" opacity="0.35"/><path d="M20 78.3h1.6v0.9h-1.6zM22.3 78.3h3.7v0.9h-3.7zM26.7 78.3h3.9v0.9h-3.9zM31.3 78.3h0.5v0.9h-0.5z" fill="#ce9178" opacity="0.35"/><path d="M9 80.1h2v0.9h-2zM11.7 80.1h1.2v0.9h-1.2zM13.7 80.1h2.3v0.9h-2.3zM16.7 80.1h2.7v0.9h-2.7z" fill="#9cdcfe" opacity="0.35"/><path d="M20.7 80.1h3.8v0.9h-3.8z" fill="#c8c8c8" opacity="0.35"/><path d="M11 81.9h3.1v0.9h-3.1zM14.8 81.9h1.1v0.9h-1.1z" fill="#d4d4d4" opacity="0.35"/><path d="M16.7 81.9h3.7v0.9h-3.7zM21.1 81.9h2.6v0.9h-2.6zM24.4 81.9h0.5v0.9h-0.5z" fill="#b0b0b0" opacity="0.35"/><path d="M25.7 81.9h2.7v0.9h-2.7zM29.1 81.9h3.1v0.9h-3.1zM32.9 81.9h0.6v0.9h-0.6z" fill="#c8c8c8" opacity="0.35"/><path d="M34.3 81.9h1.9v0.9h-1.9zM36.9 81.9h3.2v0.9h-3.2zM40.8 81.9h1.4v0.9h-1.4z" fill="#b0b0b0" opacity="0.35"/><path d="M43 81.9h1.6v0.9h-1.6z" fill="#b0b0b0" opacity="0.35"/><path d="M7 83.7h2.6v0.9h-2.6zM10.3 83.7h1.3v0.9h-1.3z" fill="#b0b0b0" opacity="0.35"/><path d="M12.4 83.7h1.3v0.9h-1.3zM14.4 83.7h1v0.9h-1zM16.1 83.7h1.5v0.9h-1.5z" fill="#b0b0b0" opacity="0.35"/><path d="M18.4 83.7h2.5v0.9h-2.5zM21.6 83.7h2.2v0.9h-2.2z" fill="#9cdcfe" opacity="0.35"/><path d="M11 85.5h2.4v0.9h-2.4zM14.1 85.5h1.8v0.9h-1.8z" fill="#b0b0b0" opacity="0.35"/><path d="M16.6 85.5h1.8v0.9h-1.8zM19.1 85.5h2.4v0.9h-2.4z" fill="#d4d4d4" opacity="0.35"/><path d="M11 89.1h2.9v0.9h-2.9zM14.6 89.1h0.6v0.9h-0.6z" fill="#d4d4d4" opacity="0.35"/><path d="M16 89.1h1.1v0.9h-1.1zM17.8 89.1h1.5v0.9h-1.5zM20 89.1h0.5v0.9h-0.5z" fill="#9cdcfe" opacity="0.35"/><path d="M21.2 89.1h1.7v0.9h-1.7zM23.7 89.1h2.5v0.9h-2.5zM26.8 89.1h0.5v0.9h-0.5z" fill="#d4d4d4" opacity="0.35"/><path d="M28.1 89.1h2.9v0.9h-2.9zM31.7 89.1h3.2v0.9h-3.2z" fill="#b0b0b0" opacity="0.35"/><path d="M5 90.9h2.8v0.9h-2.8zM8.5 90.9h2.6v0.9h-2.6zM11.9 90.9h0.7v0.9h-0.7z" fill="#b0b0b0" opacity="0.35"/><path d="M13.3 90.9h2.6v0.9h-2.6zM16.6 90.9h3.6v0.9h-3.6zM20.9 90.9h1.3v0.9h-1.3z" fill="#dcdcaa" opacity="0.35"/><path d="M23 90.9h2v0.9h-2z" fill="#dcdcaa" opacity="0.35"/><path d="M9 92.7h3.7v0.9h-3.7zM13.4 92.7h1.6v0.9h-1.6z" fill="#d4d4d4" opacity="0.35"/><path d="M16.3 92.7h3.7v0.9h-3.7zM20.6 92.7h1.4v0.9h-1.4zM22.7 92.7h1.7v0.9h-1.7zM25.2 92.7h2.7v0.9h-2.7z" fill="#dcdcaa" opacity="0.35"/><path d="M28.6 92.7h2.3v0.9h-2.3zM31.6 92.7h2.9v0.9h-2.9z" fill="#ce9178" opacity="0.35"/><path d="M35.3 92.7h1.6v0.9h-1.6zM37.6 92.7h2.9v0.9h-2.9zM41.2 92.7h3.1v0.9h-3.1z" fill="#6a9955" opacity="0.35"/><path d="M45.1 92.7h0.8v0.9h-0.8z" fill="#569cd6" opacity="0.35"/><rect x="2.00" y="91.30" width="12.00" height="1.50" fill="#dddddd" opacity="0.40"/><rect x="0.00" y="95.80" width="182.60" height="7.00" fill="#000000"/></svg></div><div class="t1">Ariana Gallapeni-CAI NatLPr-A2</div><div class="t2">CAI_NatLPr-Assignment_2 - Sommer 2025</div><svg class="av" viewBox="0 0 7 6" width="7" height="6"><path d="M4.2 0.3 L6.3 1.6 L5.8 2.6 L6.4 3.2 L5 5 L4.2 4.2 Z" fill="#b9b9b9" opacity="0.75"/><ellipse cx="2.5" cy="3.9" rx="2.3" ry="1.2" transform="rotate(-28 2.5 3.9)" fill="#55803a" opacity="0.9"/></svg><div class="avt">vatar</div><div class="t3">Gokul Srinivasagan</div></div>
<div class="card" style="left:739.4px;top:417.95px"><div class="th"><svg class="ths" width="182.6" height="102.8" viewBox="0 0 182.6 102.8" preserveAspectRatio="none"><rect x="0.00" y="0.00" width="182.60" height="102.80" fill="#1e1e1e"/><rect x="0.00" y="0.00" width="182.60" height="3.50" fill="#1a1a1a"/><path d="M3 1.9h3.9v0.7h-3.9zM8.9 1.9h4.6v0.7h-4.6zM15.5 1.9h4.7v0.7h-4.7zM22.2 1.9h2.6v0.7h-2.6zM26.8 1.9h2v0.7h-2zM30.8 1.9h3.5v0.7h-3.5zM36.3 1.9h1.7v0.7h-1.7z" fill="#cccccc" opacity="0.35"/><rect x="0.00" y="3.50" width="182.60" height="10.00" fill="#1d1d1d"/><path d="M5 6h5.1v0.8h-5.1zM11 6h4v0.8h-4z" fill="#cccccc" opacity="0.40"/><rect x="18.00" y="6.00" width="14.00" height="0.90" fill="#d05050" opacity="0.50"/><path d="M5 9h10v0.6h-10zM16 9h9.6v0.6h-9.6zM26.6 9h10.6v0.6h-10.6zM38.2 9h5.5v0.6h-5.5zM44.7 9h8.4v0.6h-8.4zM54.1 9h5.6v0.6h-5.6zM60.7 9h13.1v0.6h-13.1zM74.7 9h4.6v0.6h-4.6zM80.3 9h12.2v0.6h-12.2zM93.5 9h4.7v0.6h-4.7zM99.3 9h10.9v0.6h-10.9zM111.1 9h7.4v0.6h-7.4zM119.5 9h8v0.6h-8zM128.6 9h12.4v0.6h-12.4zM142 9h3v0.6h-3z" fill="#aaaaaa" opacity="0.30"/><path d="M5 11.6h2.4v0.7h-2.4zM9.4 11.6h7.5v0.7h-7.5zM18.9 11.6h5.1v0.7h-5.1zM25.9 11.6h2.5v0.7h-2.5zM30.5 11.6h7.9v0.7h-7.9zM40.4 11.6h7.7v0.7h-7.7z" fill="#aaaaaa" opacity="0.35"/><rect x="0.00" y="13.50" width="3.00" height="85.00" fill="#181818"/><text x="9" y="21" font-family="Liberation Sans" font-size="4.6" fill="#dddddd" opacity="0.8">Assignmnet 2 (100 points)</text><rect x="9.00" y="24.30" width="4.00" height="0.90" fill="#dddddd" opacity="0.50"/><rect x="9.00" y="26.50" width="4.00" height="0.90" fill="#dddddd" opacity="0.50"/><rect x="9.00" y="28.50" width="5.00" height="0.90" fill="#dddddd" opacity="0.50"/><rect x="9.00" y="30.50" width="18.00" height="1.30" fill="#dddddd" opacity="0.55"/><rect x="9.00" y="36.80" width="35.00" height="1.30" fill="#dddddd" opacity="0.50"/><path d="M9 42.3h3v0.8h-3zM12.7 42.3h2v0.8h-2zM15.4 42.3h2.6v0.8h-2.6zM18.6 42.3h3.7v0.8h-3.7zM23 42.3h2.1v0.8h-2.1zM25.8 42.3h3.9v0.8h-3.9zM30.4 42.3h1.7v0.8h-1.7zM32.8 42.3h2.1v0.8h-2.1zM35.6 42.3h4.4v0.8h-4.4zM40.7 42.3h2.9v0.8h-2.9zM44.3 42.3h3v0.8h-3zM47.9 42.3h3.6v0.8h-3.6zM52.2 42.3h3.2v0.8h-3.2zM56.1 42.3h2.8v0.8h-2.8zM59.6 42.3h1.6v0.8h-1.6zM61.9 42.3h4v0.8h-4zM66.7 42.3h4.9v0.8h-4.9zM72.3 42.3h4.9v0.8h-4.9zM77.9 42.3h3.8v0.8h-3.8zM82.4 42.3h2.7v0.8h-2.7zM85.9 42.3h2.8v0.8h-2.8zM89.3 42.3h3.9v0.8h-3.9zM93.9 42.3h3.9v0.8h-3.9zM98.5 42.3h1.9v0.8h-1.9zM101.1 42.3h2.3v0.8h-2.3zM104.1 42.3h2.8v0.8h-2.8zM107.6 42.3h3.3v0.8h-3.3zM111.6 42.3h4.3v0.8h-4.3zM116.6 42.3h3.3v0.8h-3.3zM120.6 42.3h1.6v0.8h-1.6zM122.9 42.3h3.2v0.8h-3.2z" fill="#cccccc" opacity="0.30"/><path d="M9 44.5h3.3v0.8h-3.3zM13 44.5h2.3v0.8h-2.3zM16 44.5h3v0.8h-3zM19.7 44.5h2.9v0.8h-2.9zM23.2 44.5h4.2v0.8h-4.2zM28.2 44.5h1.9v0.8h-1.9zM30.7 44.5h3.4v0.8h-3.4zM34.8 44.5h2.1v0.8h-2.1zM37.7 44.5h3.9v0.8h-3.9zM42.3 44.5h1.6v0.8h-1.6zM44.6 44.5h2.5v0.8h-2.5zM47.8 44.5h2.7v0.8h-2.7zM51.2 44.5h3.7v0.8h-3.7zM55.6 44.5h1.7v0.8h-1.7zM58 44.5h3.1v0.8h-3.1zM61.8 44.5h2.2v0.8h-2.2zM64.7 44.5h2.5v0.8h-2.5zM67.9 44.5h3.2v0.8h-3.2zM71.8 44.5h4.9v0.8h-4.9zM77.4 44.5h3.2v0.8h-3.2zM81.2 44.5h4.8v0.8h-4.8zM86.8 44.5h2.1v0.8h-2.1zM89.6 44.5h4.7v0.8h-4.7zM95 44.5h2.8v0.8h-2.8zM98.5 44.5h2.2v0.8h-2.2zM101.3 44.5h4.1v0.8h-4.1zM106.2 44.5h4.7v0.8h-4.7zM111.6 44.5h1.5v0.8h-1.5zM113.8 44.5h2.4v0.8h-2.4zM116.9 44.5h4.2v0.8h-4.2zM121.8 44.5h2.7v0.8h-2.7zM125.2 44.5h2.3v0.8h-2.3zM128.3 44.5h1.5v0.8h-1.5zM130.5 44.5h1.6v0.8h-1.6zM132.8 44.5h3.7v0.8h-3.7zM137.2 44.5h4.9v0.8h-4.9zM142.8 44.5h3.3v0.8h-3.3z" fill="#cccccc" opacity="0.30"/><path d="M9 48.5h1.6v0.8h-1.6zM11.3 48.5h2.6v0.8h-2.6zM14.6 48.5h4.3v0.8h-4.3zM19.6 48.5h4.4v0.8h-4.4zM24.7 48.5h3.7v0.8h-3.7zM29.1 48.5h2.3v0.8h-2.3zM32.1 48.5h3.3v0.8h-3.3zM36.2 48.5h3.2v0.8h-3.2zM40 48.5h3.7v0.8h-3.7zM44.4 48.5h2.4v0.8h-2.4zM47.6 48.5h4.8v0.8h-4.8zM53.1 48.5h4.6v0.8h-4.6zM58.4 48.5h2.1v0.8h-2.1zM61.2 48.5h2.5v0.8h-2.5zM64.4 48.5h4.6v0.8h-4.6zM69.6 48.5h2.5v0.8h-2.5zM72.8 48.5h4.8v0.8h-4.8zM78.3 48.5h3.3v0.8h-3.3zM82.3 48.5h3.9v0.8h-3.9zM87 48.5h4v0.8h-4zM91.6 48.5h2.2v0.8h-2.2zM94.6 48.5h2.5v0.8h-2.5zM97.8 48.5h2.4v0.8h-2.4zM100.9 48.5h3.9v0.8h-3.9zM105.5 48.5h3.9v0.8h-3.9zM110.1 48.5h2v0.8h-2zM112.7 48.5h4.6v0.8h-4.6zM118 48.5h3v0.8h-3zM121.7 48.5h2.3v0.8h-2.3zM124.8 48.5h3v0.8h-3zM128.5 48.5h4.9v0.8h-4.9zM134.1 48.5h3.5v0.8h-3.5zM138.3 48.5h3.7v0.8h-3.7zM142.7 48.5h4.7v0.8h-4.7zM148.1 48.5h2.6v0.8h-2.6z" fill="#cccccc" opacity="0.30"/><path d="M9 50.8h3v0.8h-3zM12.7 50.8h3.6v0.8h-3.6zM16.9 50.8h4.7v0.8h-4.7zM22.3 50.8h4.3v0.8h-4.3zM27.2 50.8h3.5v0.8h-3.5zM31.5 50.8h2.7v0.8h-2.7zM34.9 50.8h2.8v0.8h-2.8zM38.4 50.8h4.1v0.8h-4.1zM43.1 50.8h3.5v0.8h-3.5zM47.3 50.8h1.6v0.8h-1.6zM49.6 50.8h4v0.8h-4zM54.3 50.8h4.7v0.8h-4.7zM59.6 50.8h4.3v0.8h-4.3zM64.6 50.8h4.6v0.8h-4.6zM70 50.8h4.7v0.8h-4.7zM75.3 50.8h3.4v0.8h-3.4zM79.4 50.8h4.3v0.8h-4.3zM84.4 50.8h2.8v0.8h-2.8zM87.9 50.8h1.8v0.8h-1.8zM90.5 50.8h2.7v0.8h-2.7zM93.9 50.8h2.6v0.8h-2.6zM97.2 50.8h4.8v0.8h-4.8zM102.7 50.8h3.9v0.8h-3.9zM107.3 50.8h3.4v0.8h-3.4zM111.4 50.8h3.7v0.8h-3.7zM115.7 50.8h1.9v0.8h-1.9zM118.4 50.8h3.4v0.8h-3.4zM122.4 50.8h4v0.8h-4zM127.1 50.8h2.9v0.8h-2.9zM130.7 50.8h2.4v0.8h-2.4zM133.7 50.8h2.9v0.8h-2.9zM137.4 50.8h2.6v0.8h-2.6zM140.7 50.8h3.9v0.8h-3.9zM145.3 50.8h2v0.8h-2zM148 50.8h1.8v0.8h-1.8zM150.5 50.8h2.6v0.8h-2.6zM153.8 50.8h3.9v0.8h-3.9zM158.4 50.8h4.2v0.8h-4.2zM163.3 50.8h3.6v0.8h-3.6z" fill="#cccccc" opacity="0.30"/><path d="M9 54.2h2.8v0.8h-2.8zM12.5 54.2h1.6v0.8h-1.6zM14.8 54.2h3.2v0.8h-3.2zM18.7 54.2h3.1v0.8h-3.1zM22.4 54.2h2.1v0.8h-2.1zM25.3 54.2h3.8v0.8h-3.8zM29.8 54.2h2.7v0.8h-2.7zM33.2 54.2h2.3v0.8h-2.3zM36.2 54.2h2.6v0.8h-2.6zM39.6 54.2h4.8v0.8h-4.8zM45.1 54.2h1.5v0.8h-1.5zM47.3 54.2h2.8v0.8h-2.8zM50.8 54.2h2.5v0.8h-2.5zM54 54.2h2.2v0.8h-2.2zM56.9 54.2h3v0.8h-3zM60.6 54.2h2.3v0.8h-2.3zM63.5 54.2h4.7v0.8h-4.7zM69 54.2h3.3v0.8h-3.3zM72.9 54.2h3.9v0.8h-3.9zM77.6 54.2h2.1v0.8h-2.1zM80.3 54.2h3.1v0.8h-3.1zM84.1 54.2h3.6v0.8h-3.6zM88.5 54.2h4.5v0.8h-4.5zM93.6 54.2h2.4v0.8h-2.4zM96.7 54.2h3.1v0.8h-3.1zM100.5 54.2h4.5v0.8h-4.5zM105.7 54.2h4.4v0.8h-4.4zM110.8 54.2h2.3v0.8h-2.3zM113.8 54.2h3.4v0.8h-3.4zM117.9 54.2h4.2v0.8h-4.2zM122.8 54.2h2.9v0.8h-2.9zM126.3 54.2h3.9v0.8h-3.9zM130.9 54.2h3.8v0.8h-3.8zM135.4 54.2h4.9v0.8h-4.9zM141 54.2h3.4v0.8h-3.4zM145.2 54.2h3.9v0.8h-3.9zM149.7 54.2h2.7v0.8h-2.7zM153.2 54.2h4.1v0.8h-4.1zM157.9 54.2h2.6v0.8h-2.6zM161.3 54.2h3.2v0.8h-3.2zM165.2 54.2h2.8v0.8h-2.8zM168.7 54.2h2.6v0.8h-2.6zM171.9 54.2h2v0.8h-2zM174.6 54.2h2.3v0.8h-2.3z" fill="#cccccc" opacity="0.30"/><path d="M9 58.2h1.7v0.8h-1.7zM11.4 58.2h4.3v0.8h-4.3zM16.4 58.2h2.5v0.8h-2.5zM19.6 58.2h4.8v0.8h-4.8zM25 58.2h3.6v0.8h-3.6zM29.3 58.2h2.9v0.8h-2.9zM32.9 58.2h4.6v0.8h-4.6zM38.2 58.2h4.6v0.8h-4.6zM43.5 58.2h2.6v0.8h-2.6zM46.8 58.2h1.9v0.8h-1.9zM49.5 58.2h3.7v0.8h-3.7zM53.9 58.2h4.4v0.8h-4.4zM59.1 58.2h3.6v0.8h-3.6zM63.4 58.2h4.2v0.8h-4.2zM68.3 58.2h2.9v0.8h-2.9zM72 58.2h3.7v0.8h-3.7zM76.3 58.2h2.4v0.8h-2.4zM79.5 58.2h2.9v0.8h-2.9zM83.1 58.2h2.8v0.8h-2.8zM86.6 58.2h2.8v0.8h-2.8zM90.2 58.2h2.9v0.8h-2.9zM93.8 58.2h4.3v0.8h-4.3zM98.8 58.2h2.1v0.8h-2.1zM101.6 58.2h2.2v0.8h-2.2zM104.5 58.2h2.4v0.8h-2.4zM107.6 58.2h4.9v0.8h-4.9zM113.2 58.2h3.3v0.8h-3.3zM117.2 58.2h1.7v0.8h-1.7zM119.6 58.2h4.4v0.8h-4.4zM124.7 58.2h4.6v0.8h-4.6zM130 58.2h4.4v0.8h-4.4z" fill="#cccccc" opacity="0.30"/><rect x="9.00" y="63.00" width="17.00" height="1.30" fill="#dddddd" opacity="0.50"/><path d="M12 67h2.8v0.9h-2.8zM15.7 67h4.7v0.9h-4.7zM21.3 67h2.5v0.9h-2.5zM24.7 67h1.7v0.9h-1.7zM27.3 67h5.3v0.9h-5.3zM33.5 67h0.5v0.9h-0.5z" fill="#cccccc" opacity="0.35"/><rect x="35.00" y="67.00" width="42.00" height="0.90" fill="#5a7ad0" opacity="0.50"/><rect x="6.00" y="71.00" width="176.00" height="26.00" fill="#1a1a1a"/><path d="M163 71.5h1.2v0.8h-1.2zM165.4 71.5h1.9v0.8h-1.9zM168.5 71.5h1v0.8h-1zM170.7 71.5h1.3v0.8h-1.3zM173.2 71.5h1v0.8h-1zM175.4 71.5h1.2v0.8h-1.2z" fill="#aaaaaa" opacity="0.35"/><path d="M14 76.2h2.6v0.9h-2.6zM17.3 76.2h1.1v0.9h-1.1zM19.1 76.2h3.7v0.9h-3.7zM23.5 76.2h2.1v0.9h-2.1zM26.3 76.2h1.5v0.9h-1.5z" fill="#6a9955" opacity="0.35"/><path d="M28.6 76.2h2.6v0.9h-2.6zM31.9 76.2h1.9v0.9h-1.9z" fill="#9cdcfe" opacity="0.35"/><path d="M34.6 76.2h2.9v0.9h-2.9zM38.2 76.2h2.4v0.9h-2.4zM41.3 76.2h2.9v0.9h-2.9zM44.9 76.2h1.5v0.9h-1.5z" fill="#ce9178" opacity="0.35"/><path d="M47.2 76.2h3.1v0.9h-3.1zM51.1 76.2h1.8v0.9h-1.8zM53.6 76.2h1.2v0.9h-1.2z" fill="#9cdcfe" opacity="0.35"/><path d="M55.6 76.2h3.1v0.9h-3.1zM59.3 76.2h3.9v0.9h-3.9z" fill="#6a9955" opacity="0.35"/><path d="M64.8 76.2h3.9v0.9h-3.9zM69.4 76.2h2.1v0.9h-2.1z" fill="#ce9178" opacity="0.35"/><path d="M73.3 76.2h1.2v0.9h-1.2zM75.2 76.2h1.3v0.9h-1.3zM77.2 76.2h1.3v0.9h-1.3zM79.1 76.2h1.2v0.9h-1.2zM81 76.2h1v0.9h-1zM82.7 76.2h1.7v0.9h-1.7zM85.2 76.2h1.2v0.9h-1.2z" fill="#6a9955" opacity="0.35"/><path d="M87.2 76.2h2.8v0.9h-2.8zM90.6 76.2h2.8v0.9h-2.8zM94.1 76.2h3.4v0.9h-3.4z" fill="#9cdcfe" opacity="0.35"/><path d="M98.5 76.2h3.3v0.9h-3.3zM102.5 76.2h2.3v0.9h-2.3zM105.4 76.2h2.6v0.9h-2.6z" fill="#ce9178" opacity="0.35"/><path d="M109.2 76.2h2.2v0.9h-2.2zM112.1 76.2h3v0.9h-3z" fill="#cccccc" opacity="0.35"/><path d="M116.5 76.2h1.1v0.9h-1.1z" fill="#9cdcfe" opacity="0.35"/><path d="M14 78.4h2.8v0.9h-2.8zM17.5 78.4h0.8v0.9h-0.8z" fill="#ce9178" opacity="0.35"/><path d="M19.1 78.4h1.4v0.9h-1.4zM21.2 78.4h1.1v0.9h-1.1z" fill="#cccccc" opacity="0.35"/><path d="M23.1 78.4h3.3v0.9h-3.3zM27.1 78.4h2v0.9h-2z" fill="#ce9178" opacity="0.35"/><path d="M30.6 78.4h2v0.9h-2zM33.4 78.4h3.7v0.9h-3.7zM37.7 78.4h2.9v0.9h-2.9zM41.3 78.4h1.8v0.9h-1.8z" fill="#ce9178" opacity="0.35"/><path d="M43.9 78.4h2.2v0.9h-2.2zM46.8 78.4h0.9v0.9h-0.9z" fill="#6a9955" opacity="0.35"/><path d="M12 82.8h1.5v0.9h-1.5zM14.2 82.8h2.6v0.9h-2.6zM17.6 82.8h2.8v0.9h-2.8zM21.1 82.8h0.4v0.9h-0.4z" fill="#ce9178" opacity="0.35"/><path d="M22.3 82.8h2.1v0.9h-2.1zM25.1 82.8h3.7v0.9h-3.7z" fill="#6a9955" opacity="0.35"/><path d="M30.2 82.8h1.2v0.9h-1.2zM32.1 82.8h2.9v0.9h-2.9zM35.7 82.8h3.7v0.9h-3.7zM40.1 82.8h3.2v0.9h-3.2z" fill="#ce9178" opacity="0.35"/><path d="M16 89.4h3.5v0.9h-3.5zM20.2 89.4h2.6v0.9h-2.6zM23.5 89.4h1.2v0.9h-1.2z" fill="#9cdcfe" opacity="0.35"/><path d="M25.5 89.4h4v0.9h-4z" fill="#ce9178" opacity="0.35"/><path d="M31.1 89.4h1.7v0.9h-1.7zM33.5 89.4h1.2v0.9h-1.2zM35.4 89.4h0.6v0.9h-0.6z" fill="#ce9178" opacity="0.35"/><path d="M36.8 89.4h2.9v0.9h-2.9zM40.4 89.4h1.5v0.9h-1.5z" fill="#6a9955" opacity="0.35"/><path d="M42.6 89.4h3.2v0.9h-3.2zM46.6 89.4h1.9v0.9h-1.9zM49.2 89.4h1.4v0.9h-1.4zM51.3 89.4h0.8v0.9h-0.8z" fill="#ce9178" opacity="0.35"/><path d="M52.9 89.4h2.1v0.9h-2.1zM55.7 89.4h3.1v0.9h-3.1zM59.5 89.4h1.2v0.9h-1.2z" fill="#ce9178" opacity="0.35"/><path d="M61.6 89.4h2.5v0.9h-2.5zM64.8 89.4h2.4v0.9h-2.4z" fill="#ce9178" opacity="0.35"/><path d="M68 89.4h2.1v0.9h-2.1zM70.8 89.4h1.9v0.9h-1.9z" fill="#6a9955" opacity="0.35"/><path d="M14 93.8h1.5v0.9h-1.5zM16.2 93.8h3.5v0.9h-3.5zM20.4 93.8h2.3v0.9h-2.3zM23.3 93.8h1.9v0.9h-1.9zM26 93.8h1.7v0.9h-1.7z" fill="#ce9178" opacity="0.35"/><path d="M28.4 93.8h1.4v0.9h-1.4zM30.6 93.8h2.4v0.9h-2.4zM33.6 93.8h2.4v0.9h-2.4z" fill="#9cdcfe" opacity="0.35"/><path d="M36.8 93.8h1.4v0.9h-1.4zM38.9 93.8h3.5v0.9h-3.5z" fill="#cccccc" opacity="0.35"/><path d="M43.3 93.8h1.9v0.9h-1.9zM45.9 93.8h1.3v0.9h-1.3zM47.9 93.8h1.6v0.9h-1.6z" fill="#ce9178" opacity="0.35"/><path d="M51.3 93.8h3.8v0.9h-3.8zM55.8 93.8h2.6v0.9h-2.6z" fill="#6a9955" opacity="0.35"/><path d="M59.2 93.8h1.4v0.9h-1.4zM61.3 93.8h1.6v0.9h-1.6zM63.6 93.8h2.6v0.9h-2.6z" fill="#cccccc" opacity="0.35"/><path d="M67.1 93.8h1.8v0.9h-1.8zM69.6 93.8h0.8v0.9h-0.8z" fill="#cccccc" opacity="0.35"/><rect x="0.00" y="99.50" width="182.60" height="3.30" fill="#181818"/></svg></div><div class="t1">Felix Boyke-CAI NatLPr-A2</div><div class="t2">CAI_NatLPr-Assignment_2 - Sommer 2025</div><svg class="av" viewBox="0 0 7 6" width="7" height="6"><path d="M4.2 0.3 L6.3 1.6 L5.8 2.6 L6.4 3.2 L5 5 L4.2 4.2 Z" fill="#b9b9b9" opacity="0.75"/><ellipse cx="2.5" cy="3.9" rx="2.3" ry="1.2" transform="rotate(-28 2.5 3.9)" fill="#55803a" opacity="0.9"/></svg><div class="avt">vatar</div><div class="t3">Gokul Srinivasagan</div></div>
<div class="card" style="left:161.3px;top:582.8px"><div class="th"><svg class="ths" width="182.6" height="102.8" viewBox="0 0 182.6 102.8" preserveAspectRatio="none"><rect x="0.00" y="0.00" width="182.60" height="102.80" fill="#1c1c1c"/><rect x="0.00" y="0.00" width="182.60" height="3.00" fill="#161616"/><path d="M2 1.3h4.1v0.7h-4.1zM8.1 1.3h7.5v0.7h-7.5zM17.6 1.3h7.5v0.7h-7.5zM27 1.3h8.8v0.7h-8.8zM37.8 1.3h3.5v0.7h-3.5z" fill="#aaaaaa" opacity="0.35"/><path d="M2 5h5.5v0.6h-5.5zM8.5 5h4.6v0.6h-4.6zM14.2 5h5.5v0.6h-5.5zM20.6 5h11.1v0.6h-11.1zM32.7 5h4.4v0.6h-4.4zM38.1 5h8.8v0.6h-8.8zM48 5h5.4v0.6h-5.4zM54.3 5h6.2v0.6h-6.2zM61.6 5h7.7v0.6h-7.7zM70.3 5h12.2v0.6h-12.2zM83.5 5h8.5v0.6h-8.5z" fill="#aaaaaa" opacity="0.30"/><path d="M2 7.5h3.1v0.6h-3.1zM6.1 7.5h4.9v0.6h-4.9zM12 7.5h4v0.6h-4zM17.1 7.5h9.1v0.6h-9.1zM27.2 7.5h8.7v0.6h-8.7zM36.8 7.5h8.6v0.6h-8.6zM46.5 7.5h8.8v0.6h-8.8zM56.3 7.5h0.7v0.6h-0.7z" fill="#aaaaaa" opacity="0.30"/><rect x="170.00" y="4.50" width="8.00" height="1.00" fill="#aaaaaa" opacity="0.35"/><text x="5" y="14.6" font-family="Liberation Sans" font-size="4.3" fill="#cccccc" opacity="0.7">Assignment 2 (100 points)</text></svg></div></div>
<div class="card" style="left:354.0px;top:582.8px"><div class="th"><svg class="ths" width="182.6" height="102.8" viewBox="0 0 182.6 102.8" preserveAspectRatio="none"><rect x="0.00" y="0.00" width="182.60" height="102.80" fill="#1e1e1e"/><rect x="0.00" y="0.00" width="182.60" height="4.00" fill="#1a1a1a"/><path d="M3 2h2.3v0.7h-2.3zM7.1 2h4.1v0.7h-4.1zM13 2h4v0.7h-4zM18.8 2h4.8v0.7h-4.8zM25.4 2h2.8v0.7h-2.8zM30 2h2.8v0.7h-2.8zM34.6 2h4.2v0.7h-4.2zM40.6 2h4v0.7h-4zM46.4 2h2.9v0.7h-2.9zM51.1 2h4.1v0.7h-4.1zM56.9 2h1.1v0.7h-1.1z" fill="#aaaaaa" opacity="0.40"/><rect x="56.00" y="2.00" width="28.00" height="0.90" fill="#bbbbbb" opacity="0.35"/><rect x="150.00" y="1.50" width="20.00" height="1.30" fill="#bbbbbb" opacity="0.40"/><circle cx="4" cy="7.5" r="1.5" fill="#bbbbbb" opacity="0.5"/><path d="M10 7h4.9v0.8h-4.9zM15.8 7h1.6v0.8h-1.6zM18.3 7h2.1v0.8h-2.1zM21.3 7h0.7v0.8h-0.7z" fill="#cccccc" opacity="0.40"/><path d="M37 7h6.9v0.8h-6.9zM44.9 7h5.9v0.8h-5.9zM51.8 7h11.8v0.8h-11.8zM64.6 7h9.9v0.8h-9.9zM75.6 7h4.6v0.8h-4.6zM81.2 7h9.1v0.8h-9.1zM91.3 7h5.7v0.8h-5.7z" fill="#cccccc" opacity="0.35"/><rect x="1.00" y="9.50" width="7.00" height="6.00" fill="#2a2a2a"/><path d="M10 10.5h2.5v0.8h-2.5zM13.4 10.5h4v0.8h-4zM18.2 10.5h2.4v0.8h-2.4zM21.5 10.5h3v0.8h-3zM25.4 10.5h2.2v0.8h-2.2zM28.6 10.5h2.6v0.8h-2.6zM32.1 10.5h4.9v0.8h-4.9zM37.9 10.5h2.1v0.8h-2.1z" fill="#cccccc" opacity="0.40"/><path d="M42 10.5h11.9v0.8h-11.9zM54.8 10.5h6.9v0.8h-6.9zM62.7 10.5h8.5v0.8h-8.5zM72 10.5h10.9v0.8h-10.9zM83.8 10.5h9.2v0.8h-9.2zM93.9 10.5h4v0.8h-4zM98.8 10.5h3.2v0.8h-3.2z" fill="#aaaaaa" opacity="0.35"/><path d="M10 13.8h8.7v0.7h-8.7zM19.6 13.8h4.6v0.7h-4.6zM25.1 13.8h3.9v0.7h-3.9zM29.9 13.8h10.9v0.7h-10.9zM41.7 13.8h7.6v0.7h-7.6z" fill="#aaaaaa" opacity="0.30"/><rect x="169.00" y="6.50" width="9.00" height="1.20" fill="#bbbbbb" opacity="0.45"/></svg></div></div>
<div id="menu" class="a"></div>
<div class="a" style="left:848.2px;top:88.9px;width:73px;height:12.8px;background:#2c4ad2"></div>
<div class="a" style="left:848.4px;top:116.2px;width:72.8px;height:0.5px;background:#ececec"></div>
<div class="a mi" style="left:863.7px;top:25.11px;color:#3a3a3a">API</div>
<div class="a mi" style="left:863.7px;top:38.56px;color:#3a3a3a">Channel</div>
<div class="a mi" style="left:863.7px;top:52.01px;color:#3a3a3a">Survey</div>
<div class="a mi" style="left:863.7px;top:65.46px;color:#3a3a3a">Announcement</div>
<div class="a mi" style="left:863.7px;top:78.91px;color:#3a3a3a">Upload</div>
<div class="a mi" style="left:863.7px;top:92.36px;color:#fff">Your Media</div>
<div class="a mi" style="left:867.0px;top:105.81px;color:#3a3a3a">Evaluation</div>
<div class="a mi" style="left:863.7px;top:125.51px;color:#3a3a3a">Logout</div>
<svg class="a" style="left:854.5px;top:24.3px" width="7" height="7" viewBox="0 0 7 7"><g fill="#111"><circle cx="3.5" cy="1.3" r="1.25"/><circle cx="3.5" cy="5.7" r="1.25"/><circle cx="1.3" cy="3.5" r="1.25"/><circle cx="5.7" cy="3.5" r="1.25"/></g><path d="M3.5 1.3 L5.7 3.5 L3.5 5.7 L1.3 3.5 Z" fill="none" stroke="#111" stroke-width="0.7"/></svg>
<svg class="a" style="left:854.6px;top:38.2px" width="6.6" height="6.6" viewBox="0 0 6.6 6.6"><circle cx="3.3" cy="3.3" r="2.8" fill="none" stroke="#555" stroke-width="0.6"/><path d="M3.3 1.9 V4.7 M1.9 3.3 H4.7" stroke="#555" stroke-width="0.6"/></svg>
<div class="a" style="left:856.4px;top:52.6px;font-size:5px;line-height:1;color:#444;font-weight:bold">?</div>
<svg class="a" style="left:854.2px;top:65.3px" width="7.4" height="6.4" viewBox="0 0 7.4 6.4"><path d="M0.6 2.2 H2.6 L6.6 0.6 V5.8 L2.6 4.2 H0.6 Z M2 4.2 L2.7 6" fill="none" stroke="#444" stroke-width="0.7"/></svg>
<svg class="a" style="left:854.6px;top:78.2px" width="6.4" height="7" viewBox="0 0 6.4 7"><path d="M2 2 V1.3 Q2 0.4 3.2 0.4 Q4.4 0.4 4.4 1.3 V2" fill="none" stroke="#555" stroke-width="0.6"/><rect x="0.6" y="2" width="5.2" height="4.5" rx="1.5" fill="none" stroke="#555" stroke-width="0.6"/></svg>
<svg class="a" style="left:854.6px;top:91.8px" width="6.6" height="6.6" viewBox="0 0 6.6 6.6"><g fill="#fff"><rect x="0.3" y="0.4" width="2" height="2.2" rx="0.3"/><rect x="0.3" y="3.8" width="2" height="2.2" rx="0.3"/><rect x="3" y="0.8" width="3.4" height="1" /><rect x="3" y="4.3" width="3.4" height="1"/></g></svg>
<div class="a" style="left:852.6px;top:107.6px;width:4.4px;height:4.4px;border-radius:50%;background:#c4c4c4"></div>
<svg class="a" style="left:854.4px;top:125.3px" width="7" height="6.4" viewBox="0 0 7 6.4"><path d="M4.4 1.6 V0.5 H0.5 V5.9 H4.4 V4.8" fill="none" stroke="#555" stroke-width="0.6"/><path d="M2.5 3.2 H6.4 M5 2 L6.4 3.2 L5 4.4" fill="none" stroke="#555" stroke-width="0.6"/></svg>
<svg class="a" style="left:888.5px;top:92.5px" width="9" height="11" viewBox="0 0 9 11"><path d="M2.6 0.8 Q3.6 0.3 4 1.2 L4 4.4 Q4.6 3.9 5.2 4.4 Q5.9 4 6.4 4.7 Q7.2 4.4 7.6 5.3 L7.6 7.6 Q7.4 9.4 6.2 10.4 L3.4 10.4 Q2.3 9.2 0.9 7 Q0.4 6.1 1.2 5.8 Q1.8 5.7 2.6 6.6 Z" fill="#fff" stroke="#222" stroke-width="0.55"/></svg>
<div id="foot" class="a"></div><div id="footline" class="a"></div>
<div class="a ft" style="left:168.6px">How to contact us</div>
<div class="a ft" style="left:222.1px">Legal notice</div>
<div class="a ft" style="left:262.1px">Data protection</div>
<div class="a ft" style="left:309.9px">Terms of usage</div>
<div id="status" class="a"></div>
<div class="a" style="left:-2.3px;top:610px;font-size:6.1px;line-height:1;color:#f4f4f4;-webkit-text-stroke:0.2px #f4f4f4;white-space:nowrap">oad/overview</div>
</body></html>
